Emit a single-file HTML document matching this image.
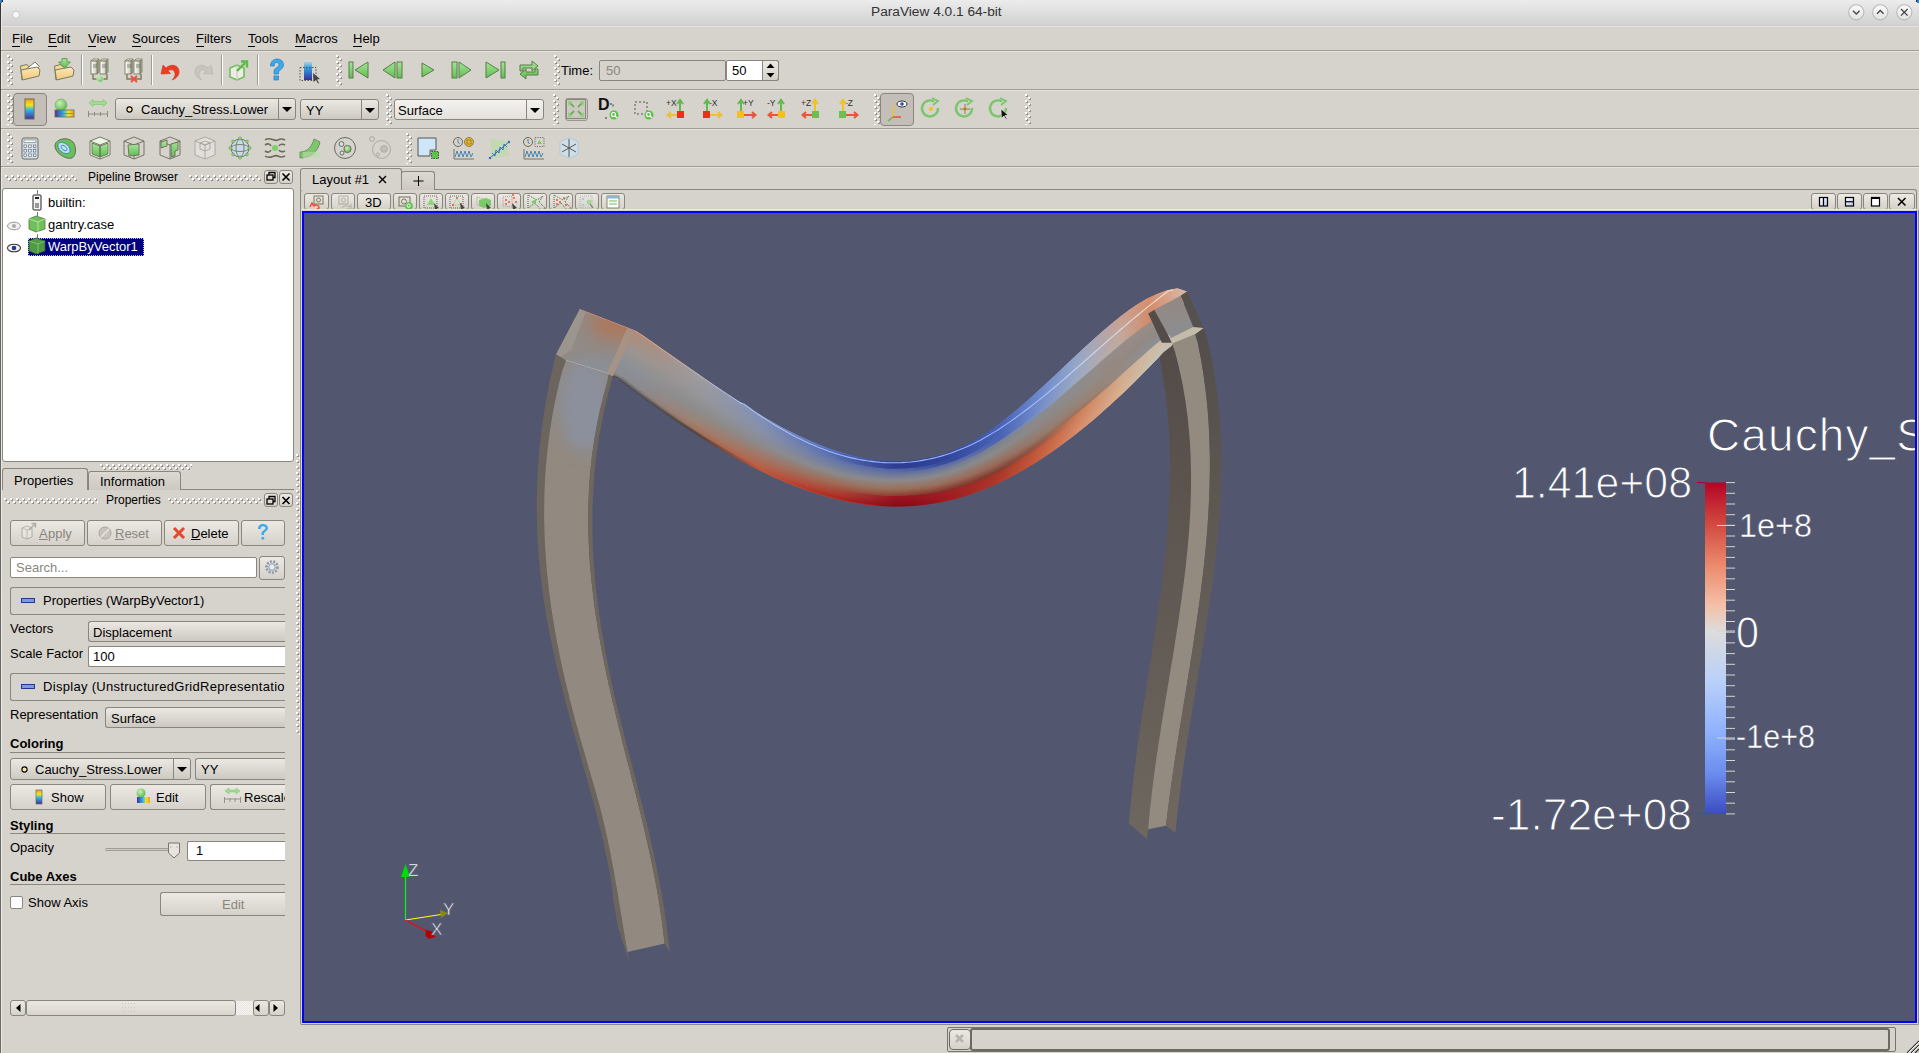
<!DOCTYPE html>
<html><head><meta charset="utf-8">
<style>
*{box-sizing:border-box;margin:0;padding:0}
html,body{width:1919px;height:1053px;overflow:hidden}
body{position:relative;background:#d6d2cc;font-family:"Liberation Sans",sans-serif;font-size:13px;color:#000}
.a{position:absolute}
svg{position:absolute;overflow:visible}
#title{left:0;top:0;width:1919px;height:26px;background:linear-gradient(#ececec,#d0d0d0);font-size:13.7px;line-height:24px;color:#333;text-indent:871px;white-space:nowrap}
#ledge{left:0;top:0;width:1px;height:1053px;background:linear-gradient(#333 0,#3a3a3a 30px,#666 200px,#6a6a6a 1053px)}
#ledge2{left:1px;top:3px;width:1px;height:1050px;background:#ebe8e2}
.hl{position:absolute;height:1px;background:#a19d96;left:1px;width:1918px}
.hl2{position:absolute;height:1px;background:#e6e3de;left:1px;width:1918px}
.menu span{position:absolute;top:31px;font-size:13px;line-height:15px}
.menu u{text-decoration:none;border-bottom:1px solid #000}
.grip{position:absolute;width:7px;background-image:repeating-linear-gradient(#fff 0 1px,#fff 1px 2px,transparent 2px 4px);background-size:3px 4px;background-repeat:repeat-y}
.gv{position:absolute;width:6px;background:repeating-linear-gradient(#938f88 0 2px,transparent 2px 6px) 1px 1px/2px 100% no-repeat,repeating-linear-gradient(#938f88 0 2px,transparent 2px 6px) 4px 4px/2px 100% no-repeat}
.gv:before,.gv:after{content:"";position:absolute;top:0;bottom:0;width:2px;background:repeating-linear-gradient(#ffffff 0 2px,transparent 2px 6px)}
.gv:before{left:0}
.gv:after{left:3px;top:3px}
.gh{position:absolute;height:6px;background:repeating-linear-gradient(90deg,#938f88 0 2px,transparent 2px 6px) 1px 1px/100% 2px no-repeat,repeating-linear-gradient(90deg,#938f88 0 2px,transparent 2px 6px) 4px 4px/100% 2px no-repeat}
.gh:before,.gh:after{content:"";position:absolute;left:0;right:0;height:2px;background:repeating-linear-gradient(90deg,#ffffff 0 2px,transparent 2px 6px)}
.gh:before{top:0}
.gh:after{top:3px;left:3px}
.sep{position:absolute;width:2px;border-left:1px solid #a19d96;border-right:1px solid #fff}
.btn{position:absolute;border:1px solid #8a867e;border-radius:3px;background:linear-gradient(#ece9e4,#d5d1ca);font-size:13px;line-height:normal}
.pressed{position:absolute;border:1px solid #8a867e;border-radius:4px;background:#c3bfb8}
.combo{position:absolute;border:1px solid #8a867e;border-radius:3px;background:linear-gradient(#ebe8e3,#cdc9c2);font-size:13px}
.combo .arr{position:absolute;top:0;bottom:0;right:0;border-left:1px solid #8a867e}
.combo .arr:after{content:"";position:absolute;left:50%;top:50%;margin-left:-5px;margin-top:-2px;border-left:5px solid transparent;border-right:5px solid transparent;border-top:5px solid #000}
.combo .t{position:absolute;top:50%;transform:translateY(-50%);white-space:nowrap}
.input{position:absolute;border:1px solid #8a867e;border-radius:2px;background:#fff;font-size:13px}
.lbl{position:absolute;font-size:13px;white-space:nowrap;line-height:15px}
.bold{font-weight:bold}
#viewport{left:302px;top:211px;width:1615px;height:812px;background:#52576f;border:2px solid #0000ff;overflow:hidden}
#vframe{left:300px;top:209px;width:1619px;height:816px;border:1px solid #8c897f;border-top-color:#ece8dc;border-radius:2px}
</style></head><body>
<div id="title" class="a">ParaView 4.0.1 64-bit</div>
<div id="ledge" class="a"></div><div id="ledge2" class="a"></div><div class="a" style="left:0;top:0;width:2px;height:3px;background:#3a80c0"></div><div class="a" style="left:2px;top:0;width:1px;height:2px;background:#222"></div><div class="a" style="left:1917px;top:0;width:2px;height:3px;background:#3a80c0"></div><div class="a" style="left:1916px;top:0;width:1px;height:2px;background:#222"></div>
<!-- title buttons -->
<svg style="left:0;top:0" width="1919" height="26">
 <circle cx="16" cy="14.7" r="3.6" fill="#f8f8f8" stroke="#c4c4c4" stroke-width="1"/>
 <defs><linearGradient id="gtb" x1="0" y1="0" x2="0" y2="1"><stop offset="0" stop-color="#fbfbfb"/><stop offset="1" stop-color="#e2e2e2"/></linearGradient></defs>
 <g fill="url(#gtb)" stroke="#b8b8b8" stroke-width="1.1"><circle cx="1856.3" cy="12.3" r="7.6"/><circle cx="1880.3" cy="12.3" r="7.6"/><circle cx="1904.3" cy="12.3" r="7.6"/></g>
 <g fill="none" stroke="#444" stroke-width="1.3"><path d="M1853 10.8 L1856.3 14 L1859.6 10.8"/><path d="M1877 13.8 L1880.3 10.5 L1883.6 13.8"/><path d="M1901 9 L1907.6 15.6 M1907.6 9 L1901 15.6"/></g>
</svg>
<div class="menu">
<span style="left:12px"><u>F</u>ile</span>
<span style="left:48px"><u>E</u>dit</span>
<span style="left:88px"><u>V</u>iew</span>
<span style="left:132px"><u>S</u>ources</span>
<span style="left:196px"><u>F</u>ilters</span>
<span style="left:248px"><u>T</u>ools</span>
<span style="left:295px"><u>M</u>acros</span>
<span style="left:353px"><u>H</u>elp</span>
</div>
<div class="a" style="left:1px;top:26px;width:1918px;height:1px;background:#e6e2d8"></div>
<div class="hl" style="top:50px"></div>
<div class="hl" style="top:89px"></div>
<div class="hl" style="top:128px"></div>
<div class="hl" style="top:166px"></div>
<div class="hl2" style="top:51px"></div><div class="hl2" style="top:90px"></div><div class="hl2" style="top:129px"></div><div class="hl2" style="top:167px"></div>
<!-- toolbar grips & separators -->
<div class="gv" style="left:7px;top:55px;height:31px"></div>
<div class="sep" style="left:81px;top:55px;height:30px"></div>
<div class="sep" style="left:151px;top:55px;height:30px"></div>
<div class="sep" style="left:221px;top:55px;height:30px"></div>
<div class="sep" style="left:257px;top:55px;height:30px"></div>
<div class="gv" style="left:336px;top:55px;height:31px"></div>
<div class="gv" style="left:554px;top:55px;height:31px"></div>
<div class="gv" style="left:7px;top:94px;height:31px"></div>
<div class="gv" style="left:386px;top:94px;height:31px"></div>
<div class="gv" style="left:553px;top:94px;height:31px"></div>
<div class="gv" style="left:874px;top:94px;height:31px"></div>
<div class="gv" style="left:1025px;top:94px;height:31px"></div>
<div class="gv" style="left:7px;top:133px;height:31px"></div>
<div class="gv" style="left:406px;top:133px;height:31px"></div>
<svg style="left:0;top:0" width="1919" height="170">
<defs>
 <linearGradient id="gfold" x1="0" y1="0" x2="0" y2="1"><stop offset="0" stop-color="#fbe7b8"/><stop offset="1" stop-color="#f2c87a"/></linearGradient>
 <linearGradient id="ggreen" x1="0" y1="0" x2="0" y2="1"><stop offset="0" stop-color="#a6e49a"/><stop offset="1" stop-color="#5fbf50"/></linearGradient>
 <linearGradient id="gsrv" x1="0" y1="0" x2="1" y2="0"><stop offset="0" stop-color="#fafafa"/><stop offset="1" stop-color="#b8b8b0"/></linearGradient>
 <linearGradient id="grain" x1="0" y1="0" x2="0" y2="1"><stop offset="0" stop-color="#f39a1e"/><stop offset="0.3" stop-color="#f2e61a"/><stop offset="0.55" stop-color="#2db7e9"/><stop offset="1" stop-color="#4b2a9a"/></linearGradient>
 <linearGradient id="grainh" x1="0" y1="0" x2="1" y2="0"><stop offset="0" stop-color="#4b2a9a"/><stop offset="0.45" stop-color="#2db7e9"/><stop offset="0.7" stop-color="#f2e61a"/><stop offset="1" stop-color="#f39a1e"/></linearGradient>
 <linearGradient id="gblue" x1="0" y1="0" x2="0" y2="1"><stop offset="0" stop-color="#e6e0d6"/><stop offset="0.4" stop-color="#2d9ee0"/><stop offset="1" stop-color="#3a2f9a"/></linearGradient>
 <radialGradient id="gsph" cx="0.4" cy="0.35" r="0.7"><stop offset="0" stop-color="#c6f2b6"/><stop offset="1" stop-color="#56b548"/></radialGradient>
</defs>
<!-- row1 -->
<g transform="translate(18,58)">
 <path d="M4 22 L2.5 8 L9 6.5 L10.5 8.5 L14 8 L15 10 Z" fill="#f4d795" stroke="#7b7b60" stroke-width="1"/>
 <path d="M6 13 L17 4 L21.5 8.5 L10 17 Z" fill="#fff" stroke="#7b7b60" stroke-width="1"/>
 <path d="M4.5 22 L3 12 L19 9 L22 12 L21 18 Z" fill="url(#gfold)" stroke="#7b7b60" stroke-width="1"/>
</g>
<g transform="translate(52,58)">
 <path d="M4 22 L2.5 8 L9 6.5 L10.5 8.5 L14 8 L15 10 Z" fill="#f4d795" stroke="#7b7b60" stroke-width="1"/>
 <path d="M4.5 22 L3 12 L19 9 L22 12 L21 18 Z" fill="url(#gfold)" stroke="#7b7b60" stroke-width="1"/>
 <path d="M10 0.5 H15 V4 H18.5 L12.5 10 L6.5 4 H10 Z" fill="url(#ggreen)" stroke="#55904a" stroke-width="0.8"/>
</g>
<g transform="translate(88,58)"><defs><linearGradient id="gtw" x1="0" y1="0" x2="1" y2="0"><stop offset="0" stop-color="#ffffff"/><stop offset="1" stop-color="#c8c8c0"/></linearGradient></defs>
<g id="srv">
 <path d="M3 3 L5 1 H11 L9 3 Z M12 3 L14 1 H20 L18 3 Z" fill="#e8e8e2" stroke="#7b7b60" stroke-width="0.8"/>
 <path d="M9 3 L11 1 V14 L9 16 Z M18 3 L20 1 V14 L18 16 Z" fill="#a8a898" stroke="#7b7b60" stroke-width="0.8"/>
 <rect x="3" y="3" width="6" height="13" fill="url(#gtw)" stroke="#7b7b60" stroke-width="0.9"/>
 <rect x="12" y="3" width="6" height="13" fill="url(#gtw)" stroke="#7b7b60" stroke-width="0.9"/>
 <path d="M5 7 H8 L9 6.5 M5 9 H8 L9 8.5 M14 7 H17 L18 6.5 M14 9 H17 L18 8.5" stroke="#6b6b5a" stroke-width="0.8" fill="none"/>
 <path d="M5 16 V21 H19 V16" fill="none" stroke="#7b7b60" stroke-width="1.4"/>
</g>
<circle cx="12" cy="21" r="3.3" fill="url(#gsph)" stroke="#e0f0d8" stroke-width="0.6"/></g>
<g transform="translate(122,58)"><use href="#srv"/><path d="M9 18 L15 24 M15 18 L9 24" stroke="#e8553f" stroke-width="2"/></g>
<g transform="translate(158,58)">
 <path d="M3 16 L5 7 L8 10 C13 5 22 7 21 15 C20 19 17 21 14 22 C17 19 18 16 16 13 C14 11 11 12 10 13 L12.5 15.5 Z" fill="#ee3b22" stroke="#c4351f" stroke-width="0.6"/>
</g>
<g transform="translate(192,58)" opacity="0.55">
 <path d="M21 16 L19 7 L16 10 C11 5 2 7 3 15 C4 19 7 21 10 22 C7 19 6 16 8 13 C10 11 13 12 14 13 L11.5 15.5 Z" fill="#bdbab3" stroke="#9a978f" stroke-width="0.6"/>
</g>
<g transform="translate(227,58)">
 <path d="M3 10 L10 7 L17 10 V19 L10 22 L3 19 Z" fill="#ecebe6" stroke="#6fbf5a" stroke-width="1.6"/>
 <path d="M10 7 V22" stroke="#c9c6be"/>
 <path d="M10 13 L18 5 M14 3.5 H20 V9.5" stroke="#5dbb47" stroke-width="2.4" fill="none"/>
</g>
<g transform="translate(264,58)">
 <path d="M6.5 8 C6.5 3 10 1 13 1 C17 1 19.5 3.5 19.5 7 C19.5 11 15 12 14.5 14 V16 H10 V13 C10 10 15 9.5 15 7 C15 5.5 14 4.5 12.8 4.5 C11 4.5 10.3 6 10.3 8 Z" fill="#3ca9ec" stroke="#1f6fa8" stroke-width="0.6"/>
 <rect x="10" y="18" width="4.5" height="4" fill="#3ca9ec" stroke="#1f6fa8" stroke-width="0.6"/>
</g>
<g transform="translate(297,58)">
 <rect x="7" y="2" width="8" height="20" fill="url(#gblue)"/>
 <rect x="3" y="9.5" width="16" height="13" fill="none" stroke="#555" stroke-width="1" stroke-dasharray="1.5 1.5"/>
 <path d="M16 15 L23 21 L20 21.5 L22 25 L21 25.5 L19 22 L16.5 24 Z" fill="#444"/>
</g>
<!-- VCR -->
<g fill="url(#ggreen)" stroke="#5b7d48" stroke-width="1">
 <g transform="translate(347,58)"><rect x="2" y="4" width="4" height="16"/><path d="M21 4 V20 L8 12 Z"/></g>
 <g transform="translate(381,58)"><path d="M14 4 V20 L2 12 Z"/><rect x="16" y="4" width="5" height="16"/></g>
 <g transform="translate(415,58)"><path d="M7 5 V19 L19 12 Z"/></g>
 <g transform="translate(449,58)"><rect x="3" y="4" width="5" height="16"/><path d="M10 4 V20 L22 12 Z"/></g>
 <g transform="translate(483,58)"><path d="M3 4 V20 L16 12 Z"/><rect x="18" y="4" width="4" height="16"/></g>
 <g transform="translate(517,58)"><path d="M3 13 V7 H15 V3 L21 8 L15 13 V10 H6 V13 Z M21 11 V17 H9 V21 L3 16 L9 11 V14 H18 V11 Z"/></g>
</g>
<!-- Time -->
</svg>
<span class="lbl" style="left:561px;top:63px">Time:</span>
<div class="input" style="left:599px;top:60px;width:127px;height:21px;background:#d6d2cc;color:#8a867e;padding-left:6px;line-height:19px">50</div>
<div class="input" style="left:726px;top:60px;width:53px;height:21px;padding-left:5px;line-height:19px;border-radius:2px">50</div>
<div class="a" style="left:762px;top:60px;width:17px;height:21px;border:1px solid #8a867e;border-radius:0 3px 3px 0;background:linear-gradient(#ece9e4,#d5d1ca)"></div>
<svg style="left:762px;top:60px" width="17" height="21"><path d="M4.5 8 L8.5 3.5 L12.5 8 Z M4.5 13 L8.5 17.5 L12.5 13 Z" fill="#000"/></svg>
<!-- row2 -->
<div class="pressed" style="left:13px;top:93px;width:34px;height:33px"></div>
<div class="pressed" style="left:880px;top:93px;width:34px;height:33px"></div>
<div class="combo" style="left:115px;top:98px;width:181px;height:22px"><svg style="left:9px;top:6px" width="9" height="9"><circle cx="4.5" cy="4.5" r="2.6" fill="#fbe3b6" stroke="#000" stroke-width="1.1"/></svg><span class="t" style="left:25px">Cauchy_Stress.Lower</span><div class="arr" style="width:17px"></div></div>
<div class="combo" style="left:300px;top:99px;width:79px;height:21px"><span class="t" style="left:5px">YY</span><div class="arr" style="width:17px"></div></div>
<div class="combo" style="left:394px;top:99px;width:150px;height:21px;background:linear-gradient(#f4f2ef,#e4e1dc)"><span class="t" style="left:3px">Surface</span><div class="arr" style="width:17px"></div></div>
<div class="btn" style="left:565px;top:98px;width:23px;height:23px;background:#cdc9c2;border-color:#9a968e"></div>
<svg style="left:0;top:0" width="1919" height="170">
<g transform="translate(18,97)">
 <rect x="7" y="2" width="9" height="20" fill="url(#grain)" stroke="#6b6b5a" stroke-width="1"/>
</g>
<g transform="translate(52,97)">
 <circle cx="9" cy="8" r="6" fill="url(#gsph)" stroke="#7ba86a" stroke-width="0.6"/>
 <rect x="3" y="13" width="19" height="7" fill="url(#grainh)" stroke="#6b6b5a" stroke-width="0.8"/>
 <path d="M4 16.5 H21" stroke="#6b6b5a" stroke-width="0.6"/>
</g>
<g transform="translate(86,97)">
 <path d="M3 6 L7 2.5 V4.5 H17 V2.5 L21 6 L17 9.5 V7.5 H7 V9.5 Z" fill="#9ee08e" stroke="#7cbf6b" stroke-width="0.6"/>
 <path d="M2 17 H22 M2.5 14 V20 M8.5 15 V19 M14.5 15 V19 M21.5 14 V20" stroke="#8e8c7e" stroke-width="1"/>
</g>
<!-- camera icons -->
<g transform="translate(564,97)">
 <path d="M5 5 L10 10 M19 5 L14 10 M5 19 L10 14 M19 19 L14 14" stroke="#6fae5a" stroke-width="1.8"/>
 <path d="M4 4 H9 L4 9 Z M20 4 H15 L20 9 Z M4 20 H9 L4 15 Z M20 20 H15 L20 15 Z" fill="#8fd47c"/>
 <rect x="2.5" y="2.5" width="19" height="19" fill="none" stroke="#8a867e" stroke-width="1"/>
</g>
<g transform="translate(597,97)">
 <text x="1" y="13" font-family="Liberation Sans" font-weight="bold" font-size="16" fill="#111">D</text>
 <path d="M13 7 H16 V10 M8 21 H10" stroke="#333" stroke-width="1" stroke-dasharray="2 1.5" fill="none"/>
 <circle cx="17" cy="18" r="4.5" fill="#5cc24c"/><circle cx="16.5" cy="17.5" r="2" fill="none" stroke="#fff" stroke-width="1.2"/><path d="M18 19 L20 21" stroke="#fff" stroke-width="1.3"/>
</g>
<g transform="translate(632,97)">
 <rect x="3" y="5" width="12" height="12" fill="none" stroke="#555" stroke-width="1" stroke-dasharray="2 2"/>
 <circle cx="17" cy="18" r="4.5" fill="#5cc24c"/><circle cx="16.5" cy="17.5" r="2" fill="none" stroke="#fff" stroke-width="1.2"/><path d="M18 19 L20 21" stroke="#fff" stroke-width="1.3"/>
</g>
<g font-family="Liberation Sans" font-size="8.5" fill="#333">
 <g transform="translate(666,97)"><text x="0" y="9">+X</text><path d="M14 20 V4 M11 7 L14 3 L17 7" stroke="#62b94e" stroke-width="2" fill="none"/><path d="M14 18 H2 M5 15 L1.5 18 L5 21" stroke="#e8c23a" stroke-width="2" fill="none"/><rect x="11" y="14" width="7" height="7" fill="#e4331c"/></g>
 <g transform="translate(699,97)"><text x="10" y="9">-X</text><path d="M8 20 V4 M5 7 L8 3 L11 7" stroke="#62b94e" stroke-width="2" fill="none"/><path d="M8 18 H22 M19 15 L22.5 18 L19 21" stroke="#e8c23a" stroke-width="2" fill="none"/><rect x="4" y="14" width="7" height="7" fill="#e4331c"/></g>
 <g transform="translate(733,97)"><text x="10" y="9">+Y</text><path d="M8 20 V4 M5 7 L8 3 L11 7" stroke="#62b94e" stroke-width="2" fill="none"/><path d="M8 18 H22 M19 15 L22.5 18 L19 21" stroke="#e8553a" stroke-width="2" fill="none"/><rect x="4" y="14" width="7" height="7" fill="#f2c21c"/></g>
 <g transform="translate(767,97)"><text x="0" y="9">-Y</text><path d="M14 20 V4 M11 7 L14 3 L17 7" stroke="#62b94e" stroke-width="2" fill="none"/><path d="M14 18 H2 M5 15 L1.5 18 L5 21" stroke="#e8553a" stroke-width="2" fill="none"/><rect x="11" y="14" width="7" height="7" fill="#f2c21c"/></g>
 <g transform="translate(801,97)"><text x="0" y="9">+Z</text><path d="M14 20 V4 M11 7 L14 3 L17 7" stroke="#f2c21c" stroke-width="2" fill="none"/><path d="M14 18 H2 M5 15 L1.5 18 L5 21" stroke="#e8553a" stroke-width="2" fill="none"/><rect x="11" y="14" width="7" height="7" fill="#6cbf4e"/></g>
 <g transform="translate(835,97)"><text x="10" y="9">-Z</text><path d="M8 20 V4 M5 7 L8 3 L11 7" stroke="#f2c21c" stroke-width="2" fill="none"/><path d="M8 18 H22 M19 15 L22.5 18 L19 21" stroke="#e8553a" stroke-width="2" fill="none"/><rect x="4" y="14" width="7" height="7" fill="#6cbf4e"/></g>
</g>
<g transform="translate(885,97)">
 <path d="M8 20 V8" stroke="#e8c23a" stroke-width="1.6"/><path d="M8 20 L3 24" stroke="#62b94e" stroke-width="1.6"/><path d="M8 20 H16" stroke="#e8553a" stroke-width="1.6"/>
 <ellipse cx="17" cy="7" rx="5" ry="3" fill="#fff" stroke="#334"/><circle cx="17" cy="7" r="1.8" fill="#3050a0"/>
</g>
<g fill="none" stroke="#79c76a" stroke-width="2.4">
 <g transform="translate(919,97)"><path d="M19 11 A8 8 0 1 1 15 4.5"/><path d="M13 1 L19 4 L14 8" stroke-width="1.8"/><circle cx="12" cy="12" r="2" fill="#f2c21c" stroke="none"/></g>
 <g transform="translate(953,97)"><path d="M19 11 A8 8 0 1 1 15 4.5"/><path d="M13 1 L19 4 L14 8" stroke-width="1.8"/><circle cx="12" cy="12" r="2" fill="#f2c21c" stroke="none"/><path d="M12 7 V17 M7 12 H17" stroke="#6b6b5a" stroke-width="0.8"/></g>
 <g transform="translate(987,97)"><path d="M19 11 A8 8 0 1 1 15 4.5"/><path d="M13 1 L19 4 L14 8" stroke-width="1.8"/><path d="M14 12 L21 18 L18 18.5 L20 22 L19 22.5 L17 19 L14.5 21 Z" fill="#111" stroke="#fff" stroke-width="0.5"/></g>
</g>
<!-- row3 -->
<g transform="translate(18,136)">
 <rect x="4" y="2" width="16" height="21" rx="2" fill="#cfe3f4" stroke="#6b6b5a" stroke-width="1"/>
 <rect x="6" y="4" width="12" height="2.5" fill="#fff" stroke="#6b6b5a" stroke-width="0.6"/>
 <g fill="#fff" stroke="#555" stroke-width="0.6"><rect x="6" y="9" width="2.5" height="2.5"/><rect x="10.7" y="9" width="2.5" height="2.5"/><rect x="15.4" y="9" width="2.5" height="2.5"/><rect x="6" y="13.5" width="2.5" height="2.5"/><rect x="10.7" y="13.5" width="2.5" height="2.5"/><rect x="15.4" y="13.5" width="2.5" height="2.5"/><rect x="6" y="18" width="2.5" height="2.5"/><rect x="10.7" y="18" width="2.5" height="2.5"/><rect x="15.4" y="18" width="2.5" height="2.5"/></g>
</g>
<g transform="translate(53,136)">
 <path d="M2 9 C3 3 14 0 20 6 C24 11 23 20 19 22 C12 24 1 16 2 9 Z" fill="#67c05a" stroke="#6b6b5a" stroke-width="1"/>
 <ellipse cx="11" cy="12" rx="7" ry="4.5" transform="rotate(40 11 12)" fill="#bfe0f0" stroke="#3a7fb0" stroke-width="0.8"/>
 <ellipse cx="11" cy="12" rx="3.5" ry="2" transform="rotate(40 11 12)" fill="none" stroke="#3a7fb0" stroke-width="0.8"/>
</g>
<g fill="url(#ggreen)" stroke="#6b6b5a" stroke-width="0.9">
 <g transform="translate(88,136)"><path d="M2 5 L12 1 L22 5 V19 L12 23 L2 19 Z" fill="#e9f4e4"/><path d="M2 5 L12 9 L22 5 M12 9 V23" fill="none"/><path d="M4 7 L12 10 V21 L4 18 Z M12 10 L20 7 V18 L12 21 Z"/></g>
 <g transform="translate(122,136)"><path d="M2 5 L12 1 L22 5 V19 L12 23 L2 19 Z" fill="none"/><path d="M2 5 L12 9 L22 5 M12 9 V23" fill="none"/><path d="M6 9 L17 8 V19 L7 20 Z"/></g>
 <g transform="translate(158,136)"><path d="M2 5 L12 1 L22 5 V19 L12 23 L2 19 Z" fill="none"/><path d="M2 5 L12 9 L22 5 M12 9 V23" fill="none"/><path d="M3 6 L9 4 V10 L3 12 Z M13 8 L20 6 V14 L17 15 V20 L13 21 Z"/></g>
 <g transform="translate(193,136)" opacity="0.45"><path d="M2 5 L12 1 L22 5 V19 L12 23 L2 19 Z" fill="#f0f0f0"/><path d="M2 5 L12 9 L22 5 M12 9 V23 M7 7 L12 5 L17 7 L12 9 Z M7 7 V13 L12 15 L17 13 V7" fill="none"/></g>
</g>
<g transform="translate(228,136)">
 <circle cx="12" cy="12" r="9" fill="#c7dbe8" stroke="#6b6b5a" stroke-width="0.9"/>
 <ellipse cx="12" cy="12" rx="9" ry="3.5" fill="none" stroke="#6b6b5a" stroke-width="0.8"/><ellipse cx="12" cy="12" rx="4" ry="9" fill="none" stroke="#6b6b5a" stroke-width="0.8"/>
 <g fill="#8fd47c" stroke="#5b8d48" stroke-width="0.5"><circle cx="12" cy="2.5" r="1.6"/><circle cx="12" cy="21.5" r="1.6"/><circle cx="2.5" cy="12" r="1.6"/><circle cx="21.5" cy="12" r="1.6"/><circle cx="5" cy="5.5" r="1.4"/><circle cx="19" cy="5.5" r="1.4"/><circle cx="5" cy="18.5" r="1.4"/><circle cx="19" cy="18.5" r="1.4"/></g>
</g>
<g transform="translate(263,136)" fill="none" stroke="#6b6b5a" stroke-width="1.6">
 <path d="M2 4 C7 0 11 6 15 4 C18 2 20 3 22 4"/><path d="M2 20 C7 24 11 18 15 20 C18 22 20 21 22 20"/>
 <path d="M2 9 C5 7 7 8 8 10 M16 10 C17 8 20 8 22 9 M2 15 C5 17 7 16 8 14 M16 14 C17 16 20 16 22 15"/>
 <circle cx="12" cy="12" r="3" fill="#7fd06c" stroke="none"/>
</g>
<g transform="translate(298,136)">
 <path d="M2 16 C10 16 14 10 16 3 L22 6 C20 16 12 22 2 22 Z" fill="#7cc96a" stroke="#6b8a5a" stroke-width="0.9"/>
 <path d="M5 16 H22 V22 H5" fill="#b9dcaa" opacity="0.6"/>
</g>
<g transform="translate(333,136)" stroke="#6b6b5a" stroke-width="1" fill="none">
 <circle cx="12" cy="12" r="10.5"/>
 <circle cx="8.5" cy="8" r="2.4" fill="#cfe3f4"/><circle cx="14.5" cy="13" r="3.6" fill="url(#gsph)"/><circle cx="9" cy="17" r="2" fill="#cfe3f4"/>
</g>
<g transform="translate(368,136)" stroke="#9c9890" stroke-width="0.9" fill="none" opacity="0.8">
 <circle cx="13.5" cy="13.5" r="9"/><circle cx="4" cy="3" r="2.4"/><circle cx="16" cy="13" r="3.3" fill="#bdbab4"/><circle cx="10" cy="18.5" r="1.6"/>
</g>
<g transform="translate(416,136)">
 <path d="M2 2 H20 V14 H14 V20 H2 Z" fill="#cfe6f8" stroke="#555" stroke-width="1"/>
 <rect x="15.5" y="15.5" width="7" height="7" fill="#5cc24c" stroke="#333" stroke-dasharray="1.5 1" stroke-width="0.8"/>
</g>
<g transform="translate(452,136)">
 <circle cx="6" cy="6" r="4.5" fill="none" stroke="#6b6b5a" stroke-width="1"/><path d="M6 3 V6 L7.5 8" stroke="#3a7fb0" stroke-width="0.9" fill="none"/>
 <circle cx="17" cy="6" r="4.5" fill="#f2b81c" stroke="#6b6b5a" stroke-width="0.8"/><rect x="15" y="4" width="4" height="4" fill="none" stroke="#6b6b5a" stroke-width="0.7"/>
 <path d="M2 13 V23 H22" stroke="#6b6b5a" stroke-width="0.9" fill="none"/><path d="M3 21 L5 15 L7 21 L9 15 L11 21 L13 15 L15 21 L17 15 L19 21 L21 17" stroke="#3a7fb0" stroke-width="0.9" fill="none"/>
</g>
<g transform="translate(487,136)">
 <path d="M3 3 L20 5 L22 20 L5 22 Z" fill="#b9dcaa" opacity="0.7"/>
 <path d="M3 22 L22 6" stroke="#2a6fb8" stroke-width="1"/><circle cx="3" cy="22" r="1.2" fill="#2a6fb8"/><circle cx="22" cy="6" r="1.2" fill="#2a6fb8"/>
 <path d="M5 17 L8 20 L9 14 L12 17 L13 11 L16 14 L17 8 L20 11" stroke="#2a6fb8" stroke-width="0.9" fill="none"/>
</g>
<g transform="translate(522,136)">
 <circle cx="6" cy="6" r="4.5" fill="none" stroke="#6b6b5a" stroke-width="1"/><path d="M6 3 V6 L7.5 8" stroke="#3a7fb0" stroke-width="0.9" fill="none"/>
 <rect x="13" y="1.5" width="9" height="9" fill="none" stroke="#555" stroke-width="0.8" stroke-dasharray="1.2 1.2"/><path d="M15 8 L17.5 4 L20 8 Z" fill="#7cc96a"/>
 <path d="M2 13 V23 H22" stroke="#6b6b5a" stroke-width="0.9" fill="none"/><path d="M3 21 L5 15 L7 21 L9 15 L11 21 L13 15 L15 21 L17 15 L19 21 L21 17" stroke="#3a7fb0" stroke-width="0.9" fill="none"/>
</g>
<g transform="translate(557,136)">
 <path d="M3 6 L12 1.5 L21 6 V18 L12 22.5 L3 18 Z" fill="#cfdfea" stroke="#b8c8d4" stroke-width="1"/>
 <path d="M12 3 V21 M5 8 L19 16 M19 8 L5 16" stroke="#555" stroke-width="1"/>
</g>
</svg>
<!-- Pipeline browser -->
<div class="gh" style="left:5px;top:175px;width:72px"></div>
<span class="lbl" style="left:88px;top:170px;font-size:12px">Pipeline Browser</span>
<div class="gh" style="left:189px;top:175px;width:72px"></div>
<div class="btn" style="left:264px;top:170px;width:14px;height:14px;border-radius:3px"></div>
<div class="btn" style="left:279px;top:170px;width:14px;height:14px;border-radius:3px"></div>
<svg style="left:0;top:0" width="300" height="520">
 <g fill="none" stroke="#000" stroke-width="1.3"><rect x="267" y="175" width="6" height="5"/><path d="M269 175 V172.5 H275 V177.5 H273"/><path d="M282.5 173.5 L289.5 180.5 M289.5 173.5 L282.5 180.5" stroke-width="1.6"/></g>
 <g fill="none" stroke="#000" stroke-width="1.3"><rect x="267" y="499" width="6" height="5"/><path d="M269 499 V496.5 H275 V501.5 H273"/><path d="M282.5 497 L289.5 504 M289.5 497 L282.5 504" stroke-width="1.6"/></g>
</svg>
<div class="a" style="left:2px;top:188px;width:292px;height:274px;background:#fff;border:1px solid #8a867e;border-radius:3px"></div>
<svg style="left:0;top:0" width="300" height="270">
 <path d="M37.5 190 V194 M37.5 212 V216 M37.5 234 V238" stroke="#777" stroke-width="1"/>
 <rect x="33" y="195" width="8" height="15" rx="1" fill="#f4f4f4" stroke="#222" stroke-width="1"/>
 <rect x="35" y="197" width="4" height="2" fill="#222"/><rect x="35" y="203" width="4" height="5" fill="#999"/>
 <g>
  <path d="M29 219 L36 216 L45 219 V229 L36 232 L29 229 Z" fill="#6fbf5a" stroke="#4e7a3e" stroke-width="0.8"/>
  <path d="M29 219 L38 222 L45 219 M38 222 V232" stroke="#c9e8bf" stroke-width="0.8" fill="none"/>
 </g>
 <ellipse cx="14" cy="226" rx="6.5" ry="3.8" fill="#f0f0f0" stroke="#999" stroke-width="1"/><circle cx="14" cy="226" r="2" fill="#aaa"/>
</svg>
<span class="lbl" style="left:48px;top:195px">builtin:</span>
<span class="lbl" style="left:48px;top:217px">gantry.case</span>
<div class="a" style="left:28px;top:238px;width:116px;height:18px;background:#000080;outline:1px dotted #c0c0ff;outline-offset:-1px"></div>
<svg style="left:0;top:0" width="300" height="270">
 <path d="M29 241 L36 238 L45 241 V251 L36 254 L29 251 Z" fill="#4f9a45" stroke="#2f5a28" stroke-width="0.8"/>
 <path d="M29 241 L38 244 L45 241 M38 244 V254" stroke="#8fc883" stroke-width="0.8" fill="none"/>
 <ellipse cx="14" cy="248" rx="6.5" ry="3.8" fill="#f4f4f4" stroke="#333" stroke-width="1.1"/><circle cx="14" cy="248" r="2.3" fill="#2a3a80"/>
</svg>
<span class="lbl" style="left:48px;top:239px;color:#fff">WarpByVector1</span>
<!-- splitter -->
<div class="gh" style="left:100px;top:464px;width:92px"></div>
<div class="gv" style="left:296px;top:454px;height:282px;width:5px"></div>
<!-- tabs -->
<div class="a" style="left:2px;top:489px;width:292px;height:1px;background:#8a867e"></div>
<div class="a" style="left:88px;top:471px;width:93px;height:19px;border:1px solid #8a867e;border-bottom:none;border-radius:3px 3px 0 0;background:linear-gradient(#dcd8d2,#cdc9c2)"></div>
<div class="a" style="left:2px;top:468px;width:86px;height:22px;border:1px solid #8a867e;border-bottom:none;border-radius:3px 3px 0 0;background:#d6d2cc"></div>
<span class="lbl" style="left:14px;top:473px">Properties</span>
<span class="lbl" style="left:100px;top:474px">Information</span>
<!-- properties dock title -->
<div class="gh" style="left:4px;top:498px;width:94px"></div>
<span class="lbl" style="left:106px;top:493px;font-size:12px">Properties</span>
<div class="gh" style="left:168px;top:498px;width:94px"></div>
<div class="btn" style="left:264px;top:493px;width:14px;height:14px"></div>
<div class="btn" style="left:279px;top:493px;width:14px;height:14px"></div>
<svg style="left:0;top:0" width="300" height="520">
 <g fill="none" stroke="#000" stroke-width="1.3"><rect x="267" y="499" width="6" height="5"/><path d="M269 499 V496.5 H275 V501.5 H273"/><path d="M282.5 497 L289.5 504 M289.5 497 L282.5 504" stroke-width="1.6"/></g>
</svg>
<div class="a" style="left:0;top:0;width:285px;height:1053px;overflow:hidden">
<!-- action buttons -->
<div class="btn" style="left:10px;top:520px;width:75px;height:26px;color:#8a867e"><span class="lbl" style="left:28px;top:5px;text-decoration:underline;text-decoration-thickness:1px">A</span><span class="lbl" style="left:37px;top:5px">pply</span></div>
<div class="btn" style="left:87px;top:520px;width:75px;height:26px;color:#8a867e"><span class="lbl" style="left:27px;top:5px"><u>R</u>eset</span></div>
<div class="btn" style="left:164px;top:520px;width:75px;height:26px"><span class="lbl" style="left:26px;top:5px"><u>D</u>elete</span></div>
<div class="btn" style="left:241px;top:520px;width:44px;height:26px"></div>

<div class="input" style="left:10px;top:557px;width:247px;height:21px;color:#8a867e;padding-left:5px;line-height:19px">Search...</div>
<div class="btn" style="left:259px;top:556px;width:26px;height:24px"></div>
<svg style="left:0;top:0" width="300" height="600">
 <g opacity="0.5"><path d="M22 528 L27 526 L32 528 V537 L27 539 L22 537 Z" fill="#f0eee8" stroke="#77746c" stroke-width="0.9"/><path d="M22 528 L27 530 L32 528 M27 530 V539" fill="none" stroke="#77746c" stroke-width="0.7"/><path d="M29 530 L35 524 M31.5 523.5 H35.5 V527.5" stroke="#77746c" stroke-width="1.5" fill="none"/></g>
 <circle cx="105" cy="533" r="6" fill="#c8c4bd" stroke="#aaa69f"/><path d="M101 537 L109 529" stroke="#e8e5e0" stroke-width="1.4"/>
 <path d="M174 528 L184 538 M184 528 L174 538" stroke="#e4462e" stroke-width="3"/>
 <path d="M258 529 C258 526 260 524 263 524 C266 524 268 526 268 528 C268 531 264 531.5 264 534 V535 H261.5 V533.5 C261.5 530.5 265.5 530 265.5 528 C265.5 527 264.5 526.3 263 526.3 C261.5 526.3 260.7 527.3 260.7 529 Z M261.5 537 H264.2 V539.5 H261.5 Z" fill="#3ca9ec"/>
 <g transform="translate(272,567)"><circle r="5.5" fill="none" stroke="#8a9aa8" stroke-width="2.6" stroke-dasharray="2 1.3"/><circle r="3.2" fill="#e8eef4" stroke="#8a9aa8" stroke-width="1"/></g>
</svg>
<!-- Properties (WarpByVector1) section -->
<div class="btn" style="left:10px;top:587px;width:285px;height:28px;border-right:none;border-radius:3px 0 0 3px;background:#d6d2cc"></div>
<div class="a" style="left:21px;top:598px;width:14px;height:5px;background:#7f9ad8;border:1px solid #203a90"></div>
<span class="lbl" style="left:43px;top:593px">Properties (WarpByVector1)</span>
<span class="lbl" style="left:10px;top:621px">Vectors</span>
<div class="combo" style="left:88px;top:621px;width:207px;height:21px;border-right:none;border-radius:3px 0 0 3px"><span class="t" style="left:4px">Displacement</span></div>
<span class="lbl" style="left:10px;top:646px">Scale Factor</span>
<div class="input" style="left:88px;top:646px;width:207px;height:21px;border-right:none;padding-left:4px;line-height:19px">100</div>
<!-- Display section -->
<div class="btn" style="left:10px;top:673px;width:285px;height:28px;border-right:none;border-radius:3px 0 0 3px;background:#d6d2cc"></div>
<div class="a" style="left:21px;top:684px;width:14px;height:5px;background:#7f9ad8;border:1px solid #203a90"></div>
<div class="a" style="left:43px;top:679px;width:242px;height:16px;overflow:hidden"><span class="lbl" style="left:0;top:0;letter-spacing:0.3px">Display (UnstructuredGridRepresentation)</span></div>
<span class="lbl" style="left:10px;top:707px">Representation</span>
<div class="combo" style="left:105px;top:707px;width:190px;height:21px;border-right:none;border-radius:3px 0 0 3px"><span class="t" style="left:5px">Surface</span></div>
<!-- Coloring -->
<span class="lbl bold" style="left:10px;top:736px">Coloring</span>
<div class="a" style="left:10px;top:752px;width:275px;height:1px;background:#8a867e"></div>
<div class="combo" style="left:10px;top:758px;width:181px;height:22px"><svg style="left:9px;top:6px" width="9" height="9"><circle cx="4.5" cy="4.5" r="2.6" fill="#fbe3b6" stroke="#000" stroke-width="1.1"/></svg><span class="t" style="left:24px">Cauchy_Stress.Lower</span><div class="arr" style="width:17px"></div></div>
<div class="combo" style="left:195px;top:758px;width:100px;height:22px;border-right:none;border-radius:3px 0 0 3px"><span class="t" style="left:5px">YY</span></div>
<div class="btn" style="left:10px;top:784px;width:96px;height:26px"><span class="lbl" style="left:40px;top:5px">Show</span></div>
<div class="btn" style="left:110px;top:784px;width:96px;height:26px"><span class="lbl" style="left:45px;top:5px">Edit</span></div>
<div class="btn" style="left:210px;top:784px;width:85px;height:26px;border-right:none;border-radius:3px 0 0 3px"><div class="a" style="left:0;top:0;width:75px;height:24px;overflow:hidden"><span class="lbl" style="left:33px;top:5px">Rescale</span></div></div>
<svg style="left:0;top:0" width="300" height="1053">
 <rect x="36" y="790" width="6" height="14" fill="url(#grain2)" stroke="#6b6b5a" stroke-width="0.7"/>
 <defs><linearGradient id="grain2" x1="0" y1="0" x2="0" y2="1"><stop offset="0" stop-color="#f39a1e"/><stop offset="0.3" stop-color="#f2e61a"/><stop offset="0.55" stop-color="#2db7e9"/><stop offset="1" stop-color="#4b2a9a"/></linearGradient>
 <linearGradient id="grainh2" x1="0" y1="0" x2="1" y2="0"><stop offset="0" stop-color="#4b2a9a"/><stop offset="0.45" stop-color="#2db7e9"/><stop offset="0.7" stop-color="#f2e61a"/><stop offset="1" stop-color="#f39a1e"/></linearGradient>
 <radialGradient id="gsph2" cx="0.4" cy="0.35" r="0.7"><stop offset="0" stop-color="#c6f2b6"/><stop offset="1" stop-color="#56b548"/></radialGradient></defs>
 <circle cx="141" cy="793" r="4.5" fill="url(#gsph2)"/>
 <rect x="137" y="797" width="13" height="6" fill="url(#grainh2)"/>
 <path d="M225 791 L229 788 V790 H236 V788 L240 791 L236 794 V792 H229 V794 Z" fill="#9ee08e" stroke="#7cbf6b" stroke-width="0.5"/>
 <path d="M224 799 H241 M224.5 797 V803 M230 798 V802 M235 798 V802 M240.5 797 V803" stroke="#8e8c7e" stroke-width="0.9"/>
</svg>
<!-- Styling -->
<span class="lbl bold" style="left:10px;top:818px">Styling</span>
<div class="a" style="left:10px;top:833px;width:275px;height:1px;background:#8a867e"></div>
<span class="lbl" style="left:10px;top:840px">Opacity</span>
<div class="a" style="left:105px;top:848px;width:72px;height:3px;border:1px solid #a19d96;border-radius:2px;background:#cfcbc4"></div>
<svg style="left:0;top:0" width="300" height="1053"><path d="M168.5 843 H179.5 V853 L174 858 L168.5 853 Z" fill="#e7e4df" stroke="#77746c" stroke-width="1"/><path d="M171 846 V848 M177 846 V848" stroke="#aaa" stroke-width="0.8"/></svg>
<div class="input" style="left:187px;top:841px;width:108px;height:20px;border-right:none;padding-left:8px;line-height:18px">1</div>
<!-- Cube axes -->
<span class="lbl bold" style="left:10px;top:869px">Cube Axes</span>
<div class="a" style="left:10px;top:884px;width:275px;height:1px;background:#8a867e"></div>
<div class="a" style="left:10px;top:896px;width:13px;height:13px;background:#fff;border:1px solid #8a867e;border-radius:2px"></div>
<span class="lbl" style="left:28px;top:895px">Show Axis</span>
<div class="btn" style="left:160px;top:892px;width:135px;height:24px;border-right:none;border-radius:3px 0 0 3px;color:#8a867e"><span class="lbl" style="left:61px;top:4px">Edit</span></div>
</div>
<!-- scrollbar -->
<div class="a" style="left:10px;top:1000px;width:275px;height:16px;background:#d6d2cc"></div>
<div class="btn" style="left:10px;top:1000px;width:16px;height:16px"></div>
<div class="btn" style="left:26px;top:1000px;width:210px;height:16px;background:linear-gradient(#ebe8e3,#d9d5ce)"></div>
<div class="a" style="left:236px;top:1001px;width:17px;height:14px;background:repeating-conic-gradient(#e6e3de 0 25%,#f8f7f5 0 50%) 0 0/2px 2px"></div>
<div class="btn" style="left:253px;top:1000px;width:16px;height:16px"></div>
<div class="btn" style="left:269px;top:1000px;width:16px;height:16px"></div>
<svg style="left:0;top:0" width="300" height="1053"><path d="M20.5 1004 V1012 L16 1008 Z M259.5 1004 V1012 L255 1008 Z M273.5 1004 V1012 L278 1008 Z" fill="#000"/>
<g fill="#c9c5be"><rect x="122" y="1003" width="1" height="1"/><rect x="125" y="1003" width="1" height="1"/><rect x="128" y="1003" width="1" height="1"/><rect x="131" y="1003" width="1" height="1"/><rect x="134" y="1003" width="1" height="1"/><rect x="122" y="1007" width="1" height="1"/><rect x="125" y="1007" width="1" height="1"/><rect x="128" y="1007" width="1" height="1"/><rect x="131" y="1007" width="1" height="1"/><rect x="134" y="1007" width="1" height="1"/><rect x="122" y="1011" width="1" height="1"/><rect x="125" y="1011" width="1" height="1"/><rect x="128" y="1011" width="1" height="1"/><rect x="131" y="1011" width="1" height="1"/><rect x="134" y="1011" width="1" height="1"/></g></svg>
<!-- layout tabs -->
<div class="a" style="left:300px;top:189px;width:1617px;height:22px;border:1px solid #8a867e;border-bottom:none;border-radius:3px 3px 0 0"></div>
<div class="a" style="left:401px;top:171px;width:34px;height:19px;border:1px solid #8a867e;border-bottom:none;border-radius:3px 3px 0 0;background:linear-gradient(#dcd8d2,#cdc9c2)"></div>
<div class="a" style="left:300px;top:168px;width:102px;height:22px;border:1px solid #8a867e;border-bottom:none;border-radius:3px 3px 0 0;background:#d6d2cc"></div>
<span class="lbl" style="left:312px;top:172px">Layout #1</span>
<svg style="left:0;top:0" width="700" height="215"><path d="M379 176 L386 183 M386 176 L379 183" stroke="#000" stroke-width="1.4"/><path d="M418.5 176 V186 M413.5 181 H423.5" stroke="#000" stroke-width="1"/></svg>
<!-- view toolbar -->
<div class="btn" style="left:304px;top:193px;width:25px;height:17px"></div>
<div class="btn" style="left:331px;top:193px;width:24px;height:17px"></div>
<div class="btn" style="left:357px;top:193px;width:34px;height:17px"><span class="lbl" style="left:7px;top:1px">3D</span></div>
<div class="btn" style="left:393px;top:193px;width:24px;height:17px"></div>
<div class="btn" style="left:419px;top:193px;width:24px;height:17px"></div>
<div class="btn" style="left:445px;top:193px;width:24px;height:17px"></div>
<div class="btn" style="left:471px;top:193px;width:24px;height:17px"></div>
<div class="btn" style="left:497px;top:193px;width:24px;height:17px"></div>
<div class="btn" style="left:523px;top:193px;width:24px;height:17px"></div>
<div class="btn" style="left:549px;top:193px;width:24px;height:17px"></div>
<div class="btn" style="left:575px;top:193px;width:24px;height:17px"></div>
<div class="btn" style="left:601px;top:193px;width:24px;height:17px"></div>
<div class="btn" style="left:1811px;top:193px;width:25px;height:17px"></div>
<div class="btn" style="left:1837px;top:193px;width:25px;height:17px"></div>
<div class="btn" style="left:1863px;top:193px;width:25px;height:17px"></div>
<div class="btn" style="left:1889px;top:193px;width:26px;height:17px"></div>
<svg style="left:0;top:0" width="1919" height="215">
 <g transform="translate(308,194)"><rect x="6" y="2" width="9" height="8" fill="none" stroke="#7b7b60" stroke-width="1"/><circle cx="10.5" cy="6" r="2" fill="none" stroke="#7b7b60"/><path d="M2 13 L4 9 L6 12 C8 10 11 11 11 14 L9 15" stroke="#e8553a" stroke-width="1.6" fill="none"/></g>
 <g transform="translate(334,194)" opacity="0.5"><rect x="5" y="2" width="9" height="8" fill="none" stroke="#7b7b60" stroke-width="1"/><circle cx="9.5" cy="6" r="2" fill="none" stroke="#7b7b60"/><path d="M8 14 C10 11 14 11 15 13 L17 11 L17 15 L13 15" stroke="#9a978f" stroke-width="1.3" fill="none"/></g>
 <g transform="translate(396,194)"><rect x="3" y="3" width="11" height="9" fill="none" stroke="#7b7b60" stroke-width="1.1"/><circle cx="8" cy="7.5" r="2.5" fill="none" stroke="#7b7b60"/><circle cx="13" cy="12" r="3.8" fill="#5cc24c"/><circle cx="12.7" cy="11.7" r="1.6" fill="none" stroke="#fff" stroke-width="1"/></g>
 <g transform="translate(422,194)"><rect x="2" y="2" width="13" height="12" fill="none" stroke="#555" stroke-width="0.9" stroke-dasharray="1 1"/><path d="M5 11 L9 4 L13 11 Z" fill="#8fd47c"/><path d="M12 9 L17 14 L15 14.5 L16 16 L15 16.3 L14 15 L13 16 Z" fill="#444"/></g>
 <g transform="translate(448,194)"><rect x="2" y="2" width="13" height="12" fill="none" stroke="#555" stroke-width="0.9" stroke-dasharray="1 1"/><path d="M5 11 L9 4 L13 11 Z" fill="none" stroke="#9fd48c" stroke-width="0.7"/><circle cx="9" cy="4" r="1" fill="#e8553a"/><circle cx="5" cy="11" r="1" fill="#e8553a"/><circle cx="13" cy="10" r="1" fill="#e8553a"/><path d="M12 9 L17 14 L15 14.5 L16 16 L15 16.3 L14 15 L13 16 Z" fill="#444"/></g>
 <g transform="translate(474,194)"><path d="M3 3 L10 5 V13 L3 11 Z" fill="none" stroke="#888" stroke-width="0.7" stroke-dasharray="1 1"/><path d="M5 6 L12 4 L17 6 V12 L10 14 L5 12 Z" fill="#7cc96a"/><path d="M12 9 L17 14 L15 14.5 L16 16 L15 16.3 L14 15 L13 16 Z" fill="#444"/></g>
 <g transform="translate(500,194)"><path d="M3 3 L12 2 V13 L3 12 Z" fill="none" stroke="#888" stroke-width="0.7" stroke-dasharray="1 1"/><g fill="#e8553a"><circle cx="6" cy="6" r="1"/><circle cx="9" cy="8" r="1"/><circle cx="6" cy="10" r="1"/><circle cx="14" cy="4" r="1"/><circle cx="16" cy="8" r="1"/><circle cx="13" cy="1" r="1"/></g><path d="M12 9 L17 14 L15 14.5 L16 16 L15 16.3 L14 15 L13 16 Z" fill="#444"/></g>
 <g transform="translate(526,194)"><path d="M2 1 V14 L9 9 L15 16 L19 14 L13 8 L17 2 L11 6 Z" fill="none" stroke="#2f5a28" stroke-width="0.9" stroke-dasharray="1 1"/><path d="M5 8 L10 5 L10 11 Z" fill="#7cc96a"/></g>
 <g transform="translate(552,194)"><path d="M2 1 V14 L9 9 L15 16 L19 14 L13 8 L17 2 L11 6 Z" fill="none" stroke="#2f5a28" stroke-width="0.9" stroke-dasharray="1 1"/><g fill="#e8553a"><circle cx="5" cy="6" r="1"/><circle cx="8" cy="8" r="1"/><circle cx="5" cy="10" r="1"/><circle cx="12" cy="4" r="1"/><circle cx="14" cy="11" r="1"/></g></g>
 <g transform="translate(578,194)" opacity="0.7"><rect x="2" y="2" width="12" height="12" fill="none" stroke="#888" stroke-width="0.8" stroke-dasharray="1 1"/><circle cx="5" cy="5" r="1.3" fill="#9cc0e0"/><circle cx="5" cy="11" r="1.3" fill="#9cc0e0"/><circle cx="11" cy="8" r="2.5" fill="#8fd47c"/><path d="M12 10 L15 14" stroke="#555" stroke-width="1.2"/></g>
 <g transform="translate(604,194)"><rect x="3" y="2" width="12" height="12" fill="#fff" stroke="#7b7b60" stroke-width="0.9"/><rect x="3" y="2" width="12" height="2.5" fill="#8ab4d8"/><path d="M5 7 H13 M5 10 H13" stroke="#9fd48c" stroke-width="1.6"/></g>
 <defs><linearGradient id="gsplit" x1="0" y1="0" x2="1" y2="1"><stop offset="0" stop-color="#ffffff"/><stop offset="1" stop-color="#b8c8f0"/></linearGradient></defs>
 <g stroke="#000" stroke-width="1.2" fill="url(#gsplit)">
  <rect x="1819.5" y="197.5" width="8" height="8.5"/><path d="M1823.5 197.5 V206" fill="none"/>
  <rect x="1845.5" y="197.5" width="8" height="8.5"/><path d="M1845.5 201.75 H1853.5" fill="none"/>
  <rect x="1871.5" y="197.5" width="8" height="8.5" fill="#fff"/><path d="M1871.5 198.2 H1879.5" stroke-width="1.6" fill="none"/>
  <path d="M1898 198 L1905.5 205.5 M1905.5 198 L1898 205.5" fill="none" stroke-width="1.5"/>
 </g>
</svg>
<div id="vframe" class="a"></div>
<div id="viewport" class="a"></div>
<div class="a" style="left:304px;top:213px;width:1611px;height:808px;overflow:hidden">
<svg style="left:-304px;top:-213px" width="1919" height="1053">
<defs>
 <filter id="bl4" x="-20%" y="-20%" width="140%" height="140%"><feGaussianBlur stdDeviation="4"/></filter>
 <filter id="bl2" x="-20%" y="-20%" width="140%" height="140%"><feGaussianBlur stdDeviation="2"/></filter>
 <filter id="bl8" x="-30%" y="-30%" width="160%" height="160%"><feGaussianBlur stdDeviation="8"/></filter>
 <linearGradient id="cbar" x1="0" y1="0" x2="0" y2="1">
  <stop offset="0" stop-color="#b40426"/><stop offset="0.12" stop-color="#d0473d"/><stop offset="0.25" stop-color="#ec8a6d"/><stop offset="0.37" stop-color="#f4c0a6"/><stop offset="0.448" stop-color="#dddcdc"/><stop offset="0.6" stop-color="#b9d0f9"/><stop offset="0.75" stop-color="#90b2fe"/><stop offset="0.88" stop-color="#6a8ced"/><stop offset="1" stop-color="#3b4cc0"/>
 </linearGradient>
 <linearGradient id="topg" gradientUnits="userSpaceOnUse" x1="580" y1="0" x2="1190" y2="0">
  <stop offset="0" stop-color="#b88070"/><stop offset="0.1" stop-color="#a88878"/><stop offset="0.25" stop-color="#8898b8"/><stop offset="0.42" stop-color="#4c64c0"/><stop offset="0.52" stop-color="#2e3f9a"/><stop offset="0.64" stop-color="#3a55b8"/><stop offset="0.78" stop-color="#8aa0cc"/><stop offset="0.88" stop-color="#c8a090"/><stop offset="0.95" stop-color="#e09070"/><stop offset="1" stop-color="#c8b8a8"/>
 </linearGradient>
 <linearGradient id="botg" gradientUnits="userSpaceOnUse" x1="610" y1="0" x2="1175" y2="0">
  <stop offset="0" stop-color="#8a8a8c"/><stop offset="0.15" stop-color="#a86850"/><stop offset="0.3" stop-color="#b04a38"/><stop offset="0.5" stop-color="#9a1020"/><stop offset="0.65" stop-color="#b02828"/><stop offset="0.8" stop-color="#d07050"/><stop offset="0.95" stop-color="#d8b098"/><stop offset="1" stop-color="#c8c0b0"/>
 </linearGradient>
 <clipPath id="beamclip"><path d="M579.4 309.4 L635 330.9 L650 339.5 L759 414 L785.6 430.7 L831 451 L876.8 461 L907 463.3 L937.6 457.3 L968 442 L1000 420.8 L1023.7 403.3 L1067.4 368.3 L1111 324.6 L1120 314.5 L1133.6 303 L1149 295.7 L1163.9 288.4 L1176.4 287.8 L1186.9 291.5 L1180.6 295.7 L1154.5 309.8 L1148.2 313.4 L1161.8 342.7 L1172.2 343.7 L1168 345.4 L1154.8 361.8 L1111 399 L1045.5 460 L1000 483 L968 493.7 L937.6 502.9 L907 507.4 L876.8 505.9 L831 497.5 L785.6 478.5 L759 468.8 L650 400 L612.7 376.5 L609 374 L565.8 360.5 L555.9 354.3 Z"/></clipPath>

 <linearGradient id="rlegL" gradientUnits="userSpaceOnUse" x1="0" y1="340" x2="0" y2="840"><stop offset="0" stop-color="#524b47"/><stop offset="0.35" stop-color="#5c5550"/><stop offset="1" stop-color="#6e675f"/></linearGradient>
 <linearGradient id="rlegR" gradientUnits="userSpaceOnUse" x1="0" y1="330" x2="0" y2="840"><stop offset="0" stop-color="#544e4a"/><stop offset="0.35" stop-color="#5e5853"/><stop offset="1" stop-color="#706860"/></linearGradient>
 <linearGradient id="capg" x1="0" y1="0" x2="0" y2="1"><stop offset="0" stop-color="#958880"/><stop offset="1" stop-color="#8a8e94"/></linearGradient>
</defs>
<!-- colorbar -->
<rect x="1705" y="482.5" width="21" height="331.5" fill="url(#cbar)"/>
<path d="M1726 482.6 H1735 M1726 493.3 H1735 M1726 504.0 H1735 M1726 514.7 H1735 M1726 525.3 H1735 M1726 536.0 H1735 M1726 546.7 H1735 M1726 557.4 H1735 M1726 568.1 H1735 M1726 578.8 H1735 M1726 589.5 H1735 M1726 600.2 H1735 M1726 610.8 H1735 M1726 621.5 H1735 M1726 632.2 H1735 M1726 642.9 H1735 M1726 653.6 H1735 M1726 664.3 H1735 M1726 675.0 H1735 M1726 685.7 H1735 M1726 696.3 H1735 M1726 707.0 H1735 M1726 717.7 H1735 M1726 728.4 H1735 M1726 739.1 H1735 M1726 749.8 H1735 M1726 760.5 H1735 M1726 771.2 H1735 M1726 781.8 H1735 M1726 792.5 H1735 M1726 803.2 H1735 M1726 813.9 H1735" stroke="#d4d4d4" stroke-width="1"/>
<path d="M1717 525.5 H1735 M1717 631 H1735 M1717 738 H1735" stroke="#d4d4d4" stroke-width="1"/>
<path d="M1697 482.5 H1705" stroke="#b40426" stroke-width="1.2"/>
<path d="M1697 813.5 H1705" stroke="#3b4cc0" stroke-width="1.2"/>
<g font-family="Liberation Sans" fill="#fff" stroke="#52576f" stroke-width="1.1">
 <text x="1707" y="451" font-size="46" letter-spacing="1.1">Cauchy_Stress.Lower YY</text>
 <text x="1512" y="498" font-size="45" textLength="180" lengthAdjust="spacingAndGlyphs">1.41e+08</text>
 <text x="1491" y="830" font-size="45" textLength="201" lengthAdjust="spacingAndGlyphs">-1.72e+08</text>
 <text x="1739" y="537" font-size="33" stroke-width="0.5" textLength="73" lengthAdjust="spacingAndGlyphs">1e+8</text>
 <text x="1736" y="648" font-size="45" stroke-width="1" textLength="23" lengthAdjust="spacingAndGlyphs">0</text>
 <text x="1736" y="748" font-size="33" stroke-width="0.5" textLength="79" lengthAdjust="spacingAndGlyphs">-1e+8</text>
</g>
<!-- axes -->
<g>
 <path d="M405.5 920 V876" stroke="#00ff00" stroke-width="1.2"/>
 <path d="M401 877 L405.5 864 L410 877 Z" fill="#00dd00"/>
 <path d="M405.5 920 L441 914.5" stroke="#ffff00" stroke-width="1.2"/>
 <path d="M440 910 L448 913 L441 918 Z" fill="#8a8a10"/>
 <path d="M405.5 920 L428 932" stroke="#ff0000" stroke-width="1.2"/>
 <path d="M425 929 L436 937 L428 939 Z" fill="#c00000"/><circle cx="429" cy="934" r="3.5" fill="#b00000"/>
 <g font-family="Liberation Sans" font-size="17" fill="#fff" stroke="#52576f" stroke-width="0.5"><text x="408" y="876">Z</text><text x="443" y="915">Y</text><text x="431" y="935">X</text></g>
</g>
<!-- model: left leg -->
<path d="M555.9 354.3 L553.8 363.5 551.6 372.8 549.6 382.0 547.8 391.3 546.1 400.5 544.5 409.8 543.1 419.0 541.8 428.3 540.7 437.5 539.7 446.8 538.9 456.0 538.2 465.3 537.6 474.5 537.2 483.8 536.9 493.0 536.8 502.3 536.8 511.5 537.0 520.8 537.2 530.0 537.7 539.3 538.2 548.5 538.9 557.8 539.7 567.0 540.7 576.3 541.8 585.5 543.0 594.8 544.4 604.0 545.9 613.3 547.5 622.5 549.2 631.8 551.1 641.0 553.0 650.3 555.1 659.5 557.2 668.8 559.5 678.0 561.8 687.3 564.1 696.5 566.6 705.8 569.1 715.0 571.6 724.3 574.1 733.5 576.7 742.8 579.3 752.0 581.9 761.3 584.6 770.5 587.2 779.8 589.7 789.0 592.3 798.3 594.8 807.5 597.2 816.8 599.5 826.0 601.8 835.3 603.9 844.5 605.9 853.8 607.8 863.0 609.6 872.3 611.1 881.5 612.6 890.8 613.2 900.0 618.2 927.9 629.2 962.4 629.2 962.4 627.6 952.0 625.6 942.0 624.0 931.9 622.3 921.9 620.7 911.9 619.0 901.9 617.4 891.8 615.6 881.8 613.9 871.8 612.0 861.8 610.1 851.7 608.0 841.7 605.8 831.7 603.5 821.7 601.0 811.6 598.4 801.6 595.6 791.6 592.7 781.6 589.8 771.5 586.9 761.5 584.0 751.5 581.1 741.5 578.3 731.4 575.5 721.4 572.9 711.4 570.3 701.4 567.8 691.3 565.3 681.3 563.0 671.3 560.8 661.3 558.8 651.2 556.8 641.2 555.0 631.2 553.3 621.2 551.7 611.1 550.3 601.1 549.0 591.1 547.9 581.1 546.8 571.0 546.0 561.0 545.3 551.0 544.7 541.0 544.4 530.9 544.1 520.9 544.1 510.9 544.2 500.9 544.4 490.8 544.9 480.8 545.5 470.8 546.3 460.8 547.3 450.7 548.5 440.7 549.9 430.7 551.5 420.7 553.2 410.6 555.2 400.6 557.4 390.6 559.8 380.6 562.4 370.5 565.8 360.5 Z" fill="#6c655e"/>
<clipPath id="llfront"><path d="M565.8 360.5 L562.4 370.5 559.8 380.6 557.4 390.6 555.2 400.6 553.2 410.6 551.5 420.7 549.9 430.7 548.5 440.7 547.3 450.7 546.3 460.8 545.5 470.8 544.9 480.8 544.4 490.8 544.2 500.9 544.1 510.9 544.1 520.9 544.4 530.9 544.7 541.0 545.3 551.0 546.0 561.0 546.8 571.0 547.9 581.1 549.0 591.1 550.3 601.1 551.7 611.1 553.3 621.2 555.0 631.2 556.8 641.2 558.8 651.2 560.8 661.3 563.0 671.3 565.3 681.3 567.8 691.3 570.3 701.4 572.9 711.4 575.5 721.4 578.3 731.4 581.1 741.5 584.0 751.5 586.9 761.5 589.8 771.5 592.7 781.6 595.6 791.6 598.4 801.6 601.0 811.6 603.5 821.7 605.8 831.7 608.0 841.7 610.1 851.7 612.0 861.8 613.9 871.8 615.6 881.8 617.4 891.8 619.0 901.9 620.7 911.9 622.3 921.9 624.0 931.9 625.6 942.0 627.6 952.0 664.7 943.6 663.4 933.9 662.3 924.3 660.9 914.6 659.5 905.0 657.9 895.3 656.2 885.7 654.4 876.0 652.4 866.4 650.4 856.7 648.3 847.1 646.1 837.4 643.9 827.7 641.6 818.1 639.3 808.4 636.9 798.8 634.4 789.1 632.0 779.5 629.6 769.8 627.1 760.2 624.6 750.5 622.2 740.9 619.8 731.2 617.4 721.6 615.1 711.9 612.8 702.2 610.6 692.6 608.4 682.9 606.3 673.3 604.3 663.6 602.4 654.0 600.6 644.3 598.9 634.7 597.3 625.0 595.8 615.4 594.4 605.7 593.2 596.0 592.1 586.4 591.1 576.7 590.2 567.1 589.5 557.4 589.0 547.8 588.6 538.1 588.3 528.5 588.3 518.8 588.3 509.2 588.6 499.5 589.0 489.9 589.6 480.2 590.4 470.5 591.4 460.9 592.6 451.2 594.0 441.6 595.6 431.9 597.4 422.3 599.4 412.6 601.6 403.0 604.1 393.3 606.8 383.7 609.0 374.0 Z"/></clipPath>
<path d="M565.8 360.5 L562.4 370.5 559.8 380.6 557.4 390.6 555.2 400.6 553.2 410.6 551.5 420.7 549.9 430.7 548.5 440.7 547.3 450.7 546.3 460.8 545.5 470.8 544.9 480.8 544.4 490.8 544.2 500.9 544.1 510.9 544.1 520.9 544.4 530.9 544.7 541.0 545.3 551.0 546.0 561.0 546.8 571.0 547.9 581.1 549.0 591.1 550.3 601.1 551.7 611.1 553.3 621.2 555.0 631.2 556.8 641.2 558.8 651.2 560.8 661.3 563.0 671.3 565.3 681.3 567.8 691.3 570.3 701.4 572.9 711.4 575.5 721.4 578.3 731.4 581.1 741.5 584.0 751.5 586.9 761.5 589.8 771.5 592.7 781.6 595.6 791.6 598.4 801.6 601.0 811.6 603.5 821.7 605.8 831.7 608.0 841.7 610.1 851.7 612.0 861.8 613.9 871.8 615.6 881.8 617.4 891.8 619.0 901.9 620.7 911.9 622.3 921.9 624.0 931.9 625.6 942.0 627.6 952.0 664.7 943.6 663.4 933.9 662.3 924.3 660.9 914.6 659.5 905.0 657.9 895.3 656.2 885.7 654.4 876.0 652.4 866.4 650.4 856.7 648.3 847.1 646.1 837.4 643.9 827.7 641.6 818.1 639.3 808.4 636.9 798.8 634.4 789.1 632.0 779.5 629.6 769.8 627.1 760.2 624.6 750.5 622.2 740.9 619.8 731.2 617.4 721.6 615.1 711.9 612.8 702.2 610.6 692.6 608.4 682.9 606.3 673.3 604.3 663.6 602.4 654.0 600.6 644.3 598.9 634.7 597.3 625.0 595.8 615.4 594.4 605.7 593.2 596.0 592.1 586.4 591.1 576.7 590.2 567.1 589.5 557.4 589.0 547.8 588.6 538.1 588.3 528.5 588.3 518.8 588.3 509.2 588.6 499.5 589.0 489.9 589.6 480.2 590.4 470.5 591.4 460.9 592.6 451.2 594.0 441.6 595.6 431.9 597.4 422.3 599.4 412.6 601.6 403.0 604.1 393.3 606.8 383.7 609.0 374.0 Z" fill="#928980"/>
<g clip-path="url(#llfront)"><ellipse cx="585" cy="405" rx="26" ry="48" fill="#8a92a2" opacity="0.85" filter="url(#bl8)"/></g>
<path d="M609.0 374.0 L606.8 383.7 604.1 393.3 601.6 403.0 599.4 412.6 597.4 422.3 595.6 431.9 594.0 441.6 592.6 451.2 591.4 460.9 590.4 470.5 589.6 480.2 589.0 489.9 588.6 499.5 588.3 509.2 588.3 518.8 588.3 528.5 588.6 538.1 589.0 547.8 589.5 557.4 590.2 567.1 591.1 576.7 592.1 586.4 593.2 596.0 594.4 605.7 595.8 615.4 597.3 625.0 598.9 634.7 600.6 644.3 602.4 654.0 604.3 663.6 606.3 673.3 608.4 682.9 610.6 692.6 612.8 702.2 615.1 711.9 617.4 721.6 619.8 731.2 622.2 740.9 624.6 750.5 627.1 760.2 629.6 769.8 632.0 779.5 634.4 789.1 636.9 798.8 639.3 808.4 641.6 818.1 643.9 827.7 646.1 837.4 648.3 847.1 650.4 856.7 652.4 866.4 654.4 876.0 656.2 885.7 657.9 895.3 659.5 905.0 660.9 914.6 662.3 924.3 663.4 933.9 664.7 943.6 670.0 952.5 670.0 952.5 668.6 942.7 667.5 933.0 666.3 923.2 664.9 913.4 663.4 903.7 661.7 893.9 659.9 884.2 658.0 874.4 656.1 864.6 654.0 854.9 651.8 845.1 649.6 835.3 647.3 825.6 644.9 815.8 642.5 806.1 640.0 796.3 637.5 786.5 635.0 776.8 632.5 767.0 630.0 757.2 627.4 747.5 624.9 737.7 622.5 728.0 620.0 718.2 617.7 708.4 615.3 698.7 613.1 688.9 610.9 679.1 608.9 669.4 606.9 659.6 605.0 649.9 603.3 640.1 601.6 630.3 600.1 620.6 598.7 610.8 597.4 601.0 596.3 591.3 595.3 581.5 594.4 571.8 593.7 562.0 593.1 552.2 592.7 542.5 592.5 532.7 592.4 522.9 592.4 513.2 592.7 503.4 593.1 493.7 593.7 483.9 594.4 474.1 595.4 464.4 596.5 454.6 597.9 444.8 599.4 435.1 601.2 425.3 603.1 415.6 605.3 405.8 607.6 396.0 610.2 386.3 612.7 376.5 Z" fill="#6e675f"/>
<!-- model: right leg -->
<path d="M1161.8 342.7 L1159.7 355.2 1160.4 363.1 1161.9 371.1 1163.2 379.0 1164.4 386.9 1165.5 394.9 1166.5 402.8 1167.3 410.7 1168.0 418.7 1168.6 426.6 1169.1 434.5 1169.5 442.5 1169.7 450.4 1169.9 458.3 1170.0 466.3 1169.9 474.2 1169.8 482.1 1169.6 490.1 1169.3 498.0 1168.9 505.9 1168.5 513.9 1167.9 521.8 1167.3 529.7 1166.7 537.7 1166.0 545.6 1165.2 553.5 1164.3 561.5 1163.4 569.4 1162.5 577.3 1161.5 585.3 1160.5 593.2 1159.4 601.2 1158.3 609.1 1157.2 617.0 1156.0 625.0 1154.8 632.9 1153.6 640.8 1152.4 648.8 1151.2 656.7 1150.0 664.6 1148.7 672.6 1147.5 680.5 1146.3 688.4 1145.0 696.4 1143.8 704.3 1142.6 712.2 1141.4 720.2 1140.2 728.1 1139.1 736.0 1137.9 744.0 1136.9 751.9 1135.8 759.8 1134.8 767.8 1133.8 775.7 1132.9 783.6 1132.0 791.6 1131.2 799.5 1130.4 807.4 1129.7 815.4 1129.0 823.3 1147.0 839.3 1148.0 829.2 1148.8 821.0 1149.6 812.7 1150.5 804.5 1151.4 796.3 1152.4 788.1 1153.4 779.8 1154.5 771.6 1155.6 763.4 1156.8 755.1 1158.0 746.9 1159.3 738.7 1160.6 730.5 1161.9 722.2 1163.2 714.0 1164.6 705.8 1165.9 697.5 1167.3 689.3 1168.7 681.1 1170.0 672.9 1171.4 664.6 1172.8 656.4 1174.1 648.2 1175.4 639.9 1176.7 631.7 1178.0 623.5 1179.2 615.3 1180.4 607.0 1181.6 598.8 1182.7 590.6 1183.8 582.3 1184.8 574.1 1185.7 565.9 1186.6 557.6 1187.5 549.4 1188.2 541.2 1188.9 533.0 1189.5 524.7 1190.0 516.5 1190.4 508.3 1190.7 500.0 1190.9 491.8 1191.0 483.6 1191.0 475.4 1190.9 467.1 1190.7 458.9 1190.4 450.7 1189.9 442.4 1189.3 434.2 1188.5 426.0 1187.7 417.8 1186.6 409.5 1185.5 401.3 1184.1 393.1 1182.7 384.8 1181.0 376.6 1179.2 368.4 1177.2 360.2 1175.1 351.9 1172.2 343.7 Z" fill="url(#rlegL)"/>
<path d="M1172.2 343.7 L1175.1 351.9 1177.2 360.2 1179.2 368.4 1181.0 376.6 1182.7 384.8 1184.1 393.1 1185.5 401.3 1186.6 409.5 1187.7 417.8 1188.5 426.0 1189.3 434.2 1189.9 442.4 1190.4 450.7 1190.7 458.9 1190.9 467.1 1191.0 475.4 1191.0 483.6 1190.9 491.8 1190.7 500.0 1190.4 508.3 1190.0 516.5 1189.5 524.7 1188.9 533.0 1188.2 541.2 1187.5 549.4 1186.6 557.6 1185.7 565.9 1184.8 574.1 1183.8 582.3 1182.7 590.6 1181.6 598.8 1180.4 607.0 1179.2 615.3 1178.0 623.5 1176.7 631.7 1175.4 639.9 1174.1 648.2 1172.8 656.4 1171.4 664.6 1170.0 672.9 1168.7 681.1 1167.3 689.3 1165.9 697.5 1164.6 705.8 1163.2 714.0 1161.9 722.2 1160.6 730.5 1159.3 738.7 1158.0 746.9 1156.8 755.1 1155.6 763.4 1154.5 771.6 1153.4 779.8 1152.4 788.1 1151.4 796.3 1150.5 804.5 1149.6 812.7 1148.8 821.0 1148.0 829.2 1165.8 825.7 1167.0 817.4 1168.0 809.0 1169.1 800.7 1170.2 792.4 1171.4 784.1 1172.5 775.7 1173.8 767.4 1175.0 759.1 1176.3 750.7 1177.6 742.4 1178.9 734.1 1180.2 725.8 1181.6 717.4 1182.9 709.1 1184.3 700.8 1185.6 692.4 1187.0 684.1 1188.3 675.8 1189.7 667.5 1191.0 659.1 1192.3 650.8 1193.6 642.5 1194.8 634.1 1196.1 625.8 1197.3 617.5 1198.4 609.2 1199.6 600.8 1200.7 592.5 1201.7 584.2 1202.7 575.8 1203.7 567.5 1204.6 559.2 1205.4 550.8 1206.2 542.5 1206.9 534.2 1207.6 525.9 1208.1 517.5 1208.6 509.2 1209.0 500.9 1209.4 492.5 1209.6 484.2 1209.8 475.9 1209.9 467.6 1209.9 459.2 1209.7 450.9 1209.5 442.6 1209.2 434.2 1208.8 425.9 1208.2 417.6 1207.6 409.3 1206.8 400.9 1205.9 392.6 1204.8 384.3 1203.7 375.9 1202.4 367.6 1201.0 359.3 1199.4 351.0 1197.7 342.6 1195.2 334.3 Z" fill="#938a80"/>
<path d="M1195.2 334.3 L1197.7 342.6 1199.4 351.0 1201.0 359.3 1202.4 367.6 1203.7 375.9 1204.8 384.3 1205.9 392.6 1206.8 400.9 1207.6 409.3 1208.2 417.6 1208.8 425.9 1209.2 434.2 1209.5 442.6 1209.7 450.9 1209.9 459.2 1209.9 467.6 1209.8 475.9 1209.6 484.2 1209.4 492.5 1209.0 500.9 1208.6 509.2 1208.1 517.5 1207.6 525.9 1206.9 534.2 1206.2 542.5 1205.4 550.8 1204.6 559.2 1203.7 567.5 1202.7 575.8 1201.7 584.2 1200.7 592.5 1199.6 600.8 1198.4 609.2 1197.3 617.5 1196.1 625.8 1194.8 634.1 1193.6 642.5 1192.3 650.8 1191.0 659.1 1189.7 667.5 1188.3 675.8 1187.0 684.1 1185.6 692.4 1184.3 700.8 1182.9 709.1 1181.6 717.4 1180.2 725.8 1178.9 734.1 1177.6 742.4 1176.3 750.7 1175.0 759.1 1173.8 767.4 1172.5 775.7 1171.4 784.1 1170.2 792.4 1169.1 800.7 1168.0 809.0 1167.0 817.4 1165.8 825.7 1175.3 832.8 1176.3 824.2 1177.2 815.7 1178.1 807.1 1179.1 798.6 1180.2 790.0 1181.3 781.5 1182.5 772.9 1183.7 764.4 1185.0 755.8 1186.3 747.2 1187.6 738.7 1189.0 730.1 1190.3 721.6 1191.7 713.0 1193.2 704.5 1194.6 695.9 1196.0 687.3 1197.5 678.8 1198.9 670.2 1200.3 661.7 1201.7 653.1 1203.1 644.6 1204.5 636.0 1205.9 627.5 1207.2 618.9 1208.5 610.3 1209.8 601.8 1211.0 593.2 1212.2 584.7 1213.3 576.1 1214.4 567.6 1215.4 559.0 1216.3 550.5 1217.2 541.9 1218.0 533.3 1218.7 524.8 1219.4 516.2 1219.9 507.7 1220.4 499.1 1220.8 490.6 1221.1 482.0 1221.2 473.5 1221.3 464.9 1221.3 456.3 1221.1 447.8 1220.8 439.2 1220.4 430.7 1219.9 422.1 1219.3 413.6 1218.5 405.0 1217.5 396.4 1216.4 387.9 1215.2 379.3 1213.8 370.8 1212.2 362.2 1210.5 353.7 1208.6 345.1 1206.6 336.6 1203.6 328.0 Z" fill="url(#rlegR)"/>
<!-- model: beam -->
<defs><clipPath id="beamclip2"><path d="M631.0 329.4 L635.0 330.9 644.1 336.6 652.9 342.8 661.7 348.9 670.5 355.1 679.3 361.3 688.2 367.4 697.0 373.6 705.8 379.7 714.7 385.8 723.6 391.8 732.6 397.7 741.7 403.5 750.8 409.2 760.0 414.8 769.3 420.2 778.6 425.4 788.1 430.5 797.8 435.3 807.5 439.8 817.4 444.1 827.4 448.0 837.6 451.5 847.9 454.5 858.3 457.1 868.9 459.1 879.5 460.6 890.3 461.3 901.0 461.4 911.7 460.7 922.4 459.3 932.9 457.1 943.3 454.2 953.4 450.5 963.2 446.2 972.8 441.2 982.0 435.7 990.9 429.7 999.6 423.4 1008.1 416.8 1016.4 410.0 1024.6 403.0 1032.6 395.8 1040.6 388.6 1048.5 381.3 1056.3 373.9 1064.1 366.5 1071.9 359.2 1079.8 351.8 1087.7 344.5 1095.7 337.3 1103.7 330.2 1112.0 323.3 1120.3 316.5 1128.9 310.1 1137.8 304.0 1147.1 298.6 1156.8 293.9 1166.9 290.3 1177.4 288.2 1186.9 291.5 1172.0 345.6 1163.6 352.0 1156.2 359.9 1148.8 367.6 1141.2 375.3 1133.6 382.9 1125.9 390.4 1118.1 397.8 1110.2 405.1 1102.1 412.3 1094.0 419.4 1085.7 426.3 1077.4 433.0 1068.9 439.6 1060.2 446.0 1051.4 452.3 1042.5 458.3 1033.4 464.0 1024.2 469.6 1014.8 474.8 1005.2 479.8 995.5 484.4 985.6 488.7 975.6 492.6 965.4 496.0 955.1 499.0 944.6 501.6 934.0 503.6 923.4 505.1 912.6 506.0 901.9 506.5 891.1 506.4 880.4 505.9 869.6 504.8 859.0 503.4 848.4 501.5 837.9 499.2 827.4 496.5 817.1 493.5 806.9 490.1 796.8 486.4 786.8 482.5 776.8 478.3 767.0 473.8 757.4 469.1 747.8 464.2 738.3 459.2 728.9 453.9 719.6 448.5 710.3 443.0 701.2 437.3 692.1 431.4 683.2 425.5 674.3 419.5 665.4 413.3 656.6 407.1 647.9 400.8 639.2 394.4 630.6 387.9 622.1 381.4 612.7 376.5 608.7 374.0 Z"/></clipPath><linearGradient id="bu0" gradientUnits="userSpaceOnUse" x1="580" y1="0" x2="1210" y2="0"><stop offset="0.000" stop-color="#c08870"/><stop offset="0.024" stop-color="#c08870"/><stop offset="0.048" stop-color="#c08870"/><stop offset="0.071" stop-color="#c08870"/><stop offset="0.095" stop-color="#be8a75"/><stop offset="0.119" stop-color="#b99284"/><stop offset="0.143" stop-color="#b39992"/><stop offset="0.167" stop-color="#aea1a1"/><stop offset="0.190" stop-color="#a8a8b0"/><stop offset="0.214" stop-color="#a2a8bc"/><stop offset="0.238" stop-color="#9ca8c8"/><stop offset="0.262" stop-color="#96a8d4"/><stop offset="0.286" stop-color="#90a8e0"/><stop offset="0.310" stop-color="#89a3e2"/><stop offset="0.333" stop-color="#829ee3"/><stop offset="0.357" stop-color="#7b99e5"/><stop offset="0.381" stop-color="#7593e7"/><stop offset="0.405" stop-color="#6b8ae2"/><stop offset="0.429" stop-color="#5d77cf"/><stop offset="0.452" stop-color="#4e65bc"/><stop offset="0.476" stop-color="#3f53a9"/><stop offset="0.500" stop-color="#314096"/><stop offset="0.524" stop-color="#2e3c92"/><stop offset="0.548" stop-color="#304096"/><stop offset="0.571" stop-color="#32449a"/><stop offset="0.595" stop-color="#36499f"/><stop offset="0.619" stop-color="#3d51a7"/><stop offset="0.643" stop-color="#435ab0"/><stop offset="0.667" stop-color="#4a62b8"/><stop offset="0.690" stop-color="#5670c1"/><stop offset="0.714" stop-color="#627eca"/><stop offset="0.738" stop-color="#708ccf"/><stop offset="0.762" stop-color="#8198cc"/><stop offset="0.786" stop-color="#92a4c9"/><stop offset="0.810" stop-color="#a4a6ba"/><stop offset="0.833" stop-color="#b6a3a5"/><stop offset="0.857" stop-color="#c8a090"/><stop offset="0.881" stop-color="#d09880"/><stop offset="0.905" stop-color="#d89070"/><stop offset="0.929" stop-color="#d8a288"/><stop offset="0.952" stop-color="#d8b4a0"/><stop offset="0.976" stop-color="#d8c0b0"/><stop offset="1.000" stop-color="#d8c0b0"/></linearGradient><linearGradient id="bu1" gradientUnits="userSpaceOnUse" x1="580" y1="0" x2="1210" y2="0"><stop offset="0.000" stop-color="#b58b76"/><stop offset="0.024" stop-color="#b58b76"/><stop offset="0.048" stop-color="#b58b76"/><stop offset="0.071" stop-color="#b58b76"/><stop offset="0.095" stop-color="#b38c79"/><stop offset="0.119" stop-color="#ae9184"/><stop offset="0.143" stop-color="#a9968f"/><stop offset="0.167" stop-color="#a49b9a"/><stop offset="0.190" stop-color="#9f9fa5"/><stop offset="0.214" stop-color="#989caa"/><stop offset="0.238" stop-color="#9199b0"/><stop offset="0.262" stop-color="#8996b6"/><stop offset="0.286" stop-color="#8293bc"/><stop offset="0.310" stop-color="#798cbe"/><stop offset="0.333" stop-color="#7085c0"/><stop offset="0.357" stop-color="#687fc2"/><stop offset="0.381" stop-color="#5f78c4"/><stop offset="0.405" stop-color="#566fc2"/><stop offset="0.429" stop-color="#4c63b6"/><stop offset="0.452" stop-color="#4357ab"/><stop offset="0.476" stop-color="#394a9f"/><stop offset="0.500" stop-color="#2f3e94"/><stop offset="0.524" stop-color="#2e3c92"/><stop offset="0.548" stop-color="#304096"/><stop offset="0.571" stop-color="#32449a"/><stop offset="0.595" stop-color="#36499f"/><stop offset="0.619" stop-color="#3d51a7"/><stop offset="0.643" stop-color="#435aaf"/><stop offset="0.667" stop-color="#4a62b8"/><stop offset="0.690" stop-color="#5771c0"/><stop offset="0.714" stop-color="#637fc9"/><stop offset="0.738" stop-color="#718dce"/><stop offset="0.762" stop-color="#8299cb"/><stop offset="0.786" stop-color="#93a4c8"/><stop offset="0.810" stop-color="#a4a7ba"/><stop offset="0.833" stop-color="#b6a4a6"/><stop offset="0.857" stop-color="#c7a192"/><stop offset="0.881" stop-color="#cf9880"/><stop offset="0.905" stop-color="#d78f6f"/><stop offset="0.929" stop-color="#d8a187"/><stop offset="0.952" stop-color="#d8b39f"/><stop offset="0.976" stop-color="#d8bfaf"/><stop offset="1.000" stop-color="#d8bfaf"/></linearGradient><linearGradient id="bu2" gradientUnits="userSpaceOnUse" x1="580" y1="0" x2="1210" y2="0"><stop offset="0.000" stop-color="#af8c79"/><stop offset="0.024" stop-color="#af8c79"/><stop offset="0.048" stop-color="#af8c79"/><stop offset="0.071" stop-color="#af8c79"/><stop offset="0.095" stop-color="#ad8e7c"/><stop offset="0.119" stop-color="#a99185"/><stop offset="0.143" stop-color="#a4958e"/><stop offset="0.167" stop-color="#a09897"/><stop offset="0.190" stop-color="#9c9ca0"/><stop offset="0.214" stop-color="#9599a5"/><stop offset="0.238" stop-color="#8e96ab"/><stop offset="0.262" stop-color="#8893b0"/><stop offset="0.286" stop-color="#8190b6"/><stop offset="0.310" stop-color="#7788b6"/><stop offset="0.333" stop-color="#6d80b6"/><stop offset="0.357" stop-color="#6377b6"/><stop offset="0.381" stop-color="#596fb6"/><stop offset="0.405" stop-color="#5066b4"/><stop offset="0.429" stop-color="#485cab"/><stop offset="0.452" stop-color="#3f52a3"/><stop offset="0.476" stop-color="#37489b"/><stop offset="0.500" stop-color="#2f3d93"/><stop offset="0.524" stop-color="#2e3d93"/><stop offset="0.548" stop-color="#304096"/><stop offset="0.571" stop-color="#32449a"/><stop offset="0.595" stop-color="#36499f"/><stop offset="0.619" stop-color="#3d52a7"/><stop offset="0.643" stop-color="#435aaf"/><stop offset="0.667" stop-color="#4a62b7"/><stop offset="0.690" stop-color="#5771c0"/><stop offset="0.714" stop-color="#6480c9"/><stop offset="0.738" stop-color="#728dcd"/><stop offset="0.762" stop-color="#8399ca"/><stop offset="0.786" stop-color="#94a5c7"/><stop offset="0.810" stop-color="#a5a7ba"/><stop offset="0.833" stop-color="#b6a5a6"/><stop offset="0.857" stop-color="#c6a293"/><stop offset="0.881" stop-color="#ce9881"/><stop offset="0.905" stop-color="#d68e6e"/><stop offset="0.929" stop-color="#d7a086"/><stop offset="0.952" stop-color="#d8b29e"/><stop offset="0.976" stop-color="#d8beae"/><stop offset="1.000" stop-color="#d8beae"/></linearGradient><linearGradient id="bu3" gradientUnits="userSpaceOnUse" x1="580" y1="0" x2="1210" y2="0"><stop offset="0.000" stop-color="#ad8d7c"/><stop offset="0.024" stop-color="#ad8d7c"/><stop offset="0.048" stop-color="#ad8d7c"/><stop offset="0.071" stop-color="#ad8d7c"/><stop offset="0.095" stop-color="#ab8e7f"/><stop offset="0.119" stop-color="#a79187"/><stop offset="0.143" stop-color="#a3958f"/><stop offset="0.167" stop-color="#9f9897"/><stop offset="0.190" stop-color="#9b9b9f"/><stop offset="0.214" stop-color="#9598a4"/><stop offset="0.238" stop-color="#8e95a9"/><stop offset="0.262" stop-color="#8893af"/><stop offset="0.286" stop-color="#8290b4"/><stop offset="0.310" stop-color="#7988b4"/><stop offset="0.333" stop-color="#7081b4"/><stop offset="0.357" stop-color="#6679b4"/><stop offset="0.381" stop-color="#5d72b3"/><stop offset="0.405" stop-color="#5469b1"/><stop offset="0.429" stop-color="#4b5ea9"/><stop offset="0.452" stop-color="#4153a2"/><stop offset="0.476" stop-color="#38489a"/><stop offset="0.500" stop-color="#2f3e93"/><stop offset="0.524" stop-color="#2e3d93"/><stop offset="0.548" stop-color="#304096"/><stop offset="0.571" stop-color="#32449a"/><stop offset="0.595" stop-color="#364a9f"/><stop offset="0.619" stop-color="#3d52a7"/><stop offset="0.643" stop-color="#435aaf"/><stop offset="0.667" stop-color="#4a63b7"/><stop offset="0.690" stop-color="#5872bf"/><stop offset="0.714" stop-color="#6580c8"/><stop offset="0.738" stop-color="#748ecd"/><stop offset="0.762" stop-color="#849aca"/><stop offset="0.786" stop-color="#95a5c7"/><stop offset="0.810" stop-color="#a5a8b9"/><stop offset="0.833" stop-color="#b5a6a7"/><stop offset="0.857" stop-color="#c6a395"/><stop offset="0.881" stop-color="#ce9981"/><stop offset="0.905" stop-color="#d68e6e"/><stop offset="0.929" stop-color="#d7a086"/><stop offset="0.952" stop-color="#d7b29e"/><stop offset="0.976" stop-color="#d8beae"/><stop offset="1.000" stop-color="#d8beae"/></linearGradient><linearGradient id="bu4" gradientUnits="userSpaceOnUse" x1="580" y1="0" x2="1210" y2="0"><stop offset="0.000" stop-color="#ab8e7e"/><stop offset="0.024" stop-color="#ab8e7e"/><stop offset="0.048" stop-color="#ab8e7e"/><stop offset="0.071" stop-color="#ab8e7e"/><stop offset="0.095" stop-color="#a98f81"/><stop offset="0.119" stop-color="#a69288"/><stop offset="0.143" stop-color="#a2958f"/><stop offset="0.167" stop-color="#9e9797"/><stop offset="0.190" stop-color="#9a9a9e"/><stop offset="0.214" stop-color="#9498a3"/><stop offset="0.238" stop-color="#8f95a8"/><stop offset="0.262" stop-color="#8993ad"/><stop offset="0.286" stop-color="#8390b2"/><stop offset="0.310" stop-color="#7b89b1"/><stop offset="0.333" stop-color="#7282b1"/><stop offset="0.357" stop-color="#697bb1"/><stop offset="0.381" stop-color="#6174b1"/><stop offset="0.405" stop-color="#586cae"/><stop offset="0.429" stop-color="#4e60a7"/><stop offset="0.452" stop-color="#4455a0"/><stop offset="0.476" stop-color="#394999"/><stop offset="0.500" stop-color="#2f3e92"/><stop offset="0.524" stop-color="#2e3d93"/><stop offset="0.548" stop-color="#304197"/><stop offset="0.571" stop-color="#32459b"/><stop offset="0.595" stop-color="#364aa0"/><stop offset="0.619" stop-color="#3d52a7"/><stop offset="0.643" stop-color="#435baf"/><stop offset="0.667" stop-color="#4a63b6"/><stop offset="0.690" stop-color="#5872bf"/><stop offset="0.714" stop-color="#6681c7"/><stop offset="0.738" stop-color="#758fcc"/><stop offset="0.762" stop-color="#859ac9"/><stop offset="0.786" stop-color="#96a6c6"/><stop offset="0.810" stop-color="#a6a8b9"/><stop offset="0.833" stop-color="#b5a6a8"/><stop offset="0.857" stop-color="#c5a596"/><stop offset="0.881" stop-color="#cd9982"/><stop offset="0.905" stop-color="#d58d6d"/><stop offset="0.929" stop-color="#d69f85"/><stop offset="0.952" stop-color="#d7b19d"/><stop offset="0.976" stop-color="#d8bdad"/><stop offset="1.000" stop-color="#d8bdad"/></linearGradient><linearGradient id="bu5" gradientUnits="userSpaceOnUse" x1="580" y1="0" x2="1210" y2="0"><stop offset="0.000" stop-color="#a98f81"/><stop offset="0.024" stop-color="#a98f81"/><stop offset="0.048" stop-color="#a98f81"/><stop offset="0.071" stop-color="#a98f81"/><stop offset="0.095" stop-color="#a79083"/><stop offset="0.119" stop-color="#a4928a"/><stop offset="0.143" stop-color="#a09590"/><stop offset="0.167" stop-color="#9d9797"/><stop offset="0.190" stop-color="#99999d"/><stop offset="0.214" stop-color="#9497a2"/><stop offset="0.238" stop-color="#8f95a6"/><stop offset="0.262" stop-color="#8a92ab"/><stop offset="0.286" stop-color="#8490af"/><stop offset="0.310" stop-color="#7c8aaf"/><stop offset="0.333" stop-color="#7483af"/><stop offset="0.357" stop-color="#6d7dae"/><stop offset="0.381" stop-color="#6577ae"/><stop offset="0.405" stop-color="#5c6eac"/><stop offset="0.429" stop-color="#5162a5"/><stop offset="0.452" stop-color="#46569f"/><stop offset="0.476" stop-color="#3b4a98"/><stop offset="0.500" stop-color="#303e92"/><stop offset="0.524" stop-color="#2e3d93"/><stop offset="0.548" stop-color="#304197"/><stop offset="0.571" stop-color="#32459b"/><stop offset="0.595" stop-color="#364aa0"/><stop offset="0.619" stop-color="#3d52a7"/><stop offset="0.643" stop-color="#435baf"/><stop offset="0.667" stop-color="#4a63b6"/><stop offset="0.690" stop-color="#5972be"/><stop offset="0.714" stop-color="#6782c6"/><stop offset="0.738" stop-color="#7690cb"/><stop offset="0.762" stop-color="#869bc8"/><stop offset="0.786" stop-color="#96a6c5"/><stop offset="0.810" stop-color="#a6a9b9"/><stop offset="0.833" stop-color="#b5a7a8"/><stop offset="0.857" stop-color="#c4a698"/><stop offset="0.881" stop-color="#cc9982"/><stop offset="0.905" stop-color="#d48c6c"/><stop offset="0.929" stop-color="#d69e84"/><stop offset="0.952" stop-color="#d7b09c"/><stop offset="0.976" stop-color="#d8bcac"/><stop offset="1.000" stop-color="#d8bcac"/></linearGradient><linearGradient id="bu6" gradientUnits="userSpaceOnUse" x1="580" y1="0" x2="1210" y2="0"><stop offset="0.000" stop-color="#a79083"/><stop offset="0.024" stop-color="#a79083"/><stop offset="0.048" stop-color="#a79083"/><stop offset="0.071" stop-color="#a79083"/><stop offset="0.095" stop-color="#a69085"/><stop offset="0.119" stop-color="#a2938b"/><stop offset="0.143" stop-color="#9f9591"/><stop offset="0.167" stop-color="#9c9797"/><stop offset="0.190" stop-color="#99999d"/><stop offset="0.214" stop-color="#9497a1"/><stop offset="0.238" stop-color="#8f94a5"/><stop offset="0.262" stop-color="#8a92a9"/><stop offset="0.286" stop-color="#8590ad"/><stop offset="0.310" stop-color="#7e8aad"/><stop offset="0.333" stop-color="#7784ac"/><stop offset="0.357" stop-color="#707fac"/><stop offset="0.381" stop-color="#6979ab"/><stop offset="0.405" stop-color="#6274aa"/><stop offset="0.429" stop-color="#5e70a9"/><stop offset="0.452" stop-color="#596da8"/><stop offset="0.476" stop-color="#5469a7"/><stop offset="0.500" stop-color="#5065a6"/><stop offset="0.524" stop-color="#495ea4"/><stop offset="0.548" stop-color="#4156a2"/><stop offset="0.571" stop-color="#394d9f"/><stop offset="0.595" stop-color="#364aa0"/><stop offset="0.619" stop-color="#3d53a7"/><stop offset="0.643" stop-color="#435bae"/><stop offset="0.667" stop-color="#4a63b5"/><stop offset="0.690" stop-color="#5973be"/><stop offset="0.714" stop-color="#6882c6"/><stop offset="0.738" stop-color="#7890ca"/><stop offset="0.762" stop-color="#879cc7"/><stop offset="0.786" stop-color="#97a7c4"/><stop offset="0.810" stop-color="#a6a9b9"/><stop offset="0.833" stop-color="#b5a8a9"/><stop offset="0.857" stop-color="#c3a799"/><stop offset="0.881" stop-color="#cb9982"/><stop offset="0.905" stop-color="#d38b6b"/><stop offset="0.929" stop-color="#d59d83"/><stop offset="0.952" stop-color="#d7af9b"/><stop offset="0.976" stop-color="#d8bbab"/><stop offset="1.000" stop-color="#d8bbab"/></linearGradient><linearGradient id="bu7" gradientUnits="userSpaceOnUse" x1="580" y1="0" x2="1210" y2="0"><stop offset="0.000" stop-color="#a59186"/><stop offset="0.024" stop-color="#a59186"/><stop offset="0.048" stop-color="#a59186"/><stop offset="0.071" stop-color="#a59186"/><stop offset="0.095" stop-color="#a49187"/><stop offset="0.119" stop-color="#a1938d"/><stop offset="0.143" stop-color="#9e9592"/><stop offset="0.167" stop-color="#9b9697"/><stop offset="0.190" stop-color="#98989c"/><stop offset="0.214" stop-color="#9496a0"/><stop offset="0.238" stop-color="#8f94a4"/><stop offset="0.262" stop-color="#8b92a7"/><stop offset="0.286" stop-color="#8690ab"/><stop offset="0.310" stop-color="#808baa"/><stop offset="0.333" stop-color="#7986aa"/><stop offset="0.357" stop-color="#7381a9"/><stop offset="0.381" stop-color="#6c7ba8"/><stop offset="0.405" stop-color="#6777a8"/><stop offset="0.429" stop-color="#6374a6"/><stop offset="0.452" stop-color="#6071a5"/><stop offset="0.476" stop-color="#5c6ea4"/><stop offset="0.500" stop-color="#586ba2"/><stop offset="0.524" stop-color="#5063a1"/><stop offset="0.548" stop-color="#4659a0"/><stop offset="0.571" stop-color="#3b4f9f"/><stop offset="0.595" stop-color="#364ba0"/><stop offset="0.619" stop-color="#3d53a7"/><stop offset="0.643" stop-color="#435bae"/><stop offset="0.667" stop-color="#4a64b5"/><stop offset="0.690" stop-color="#5a73bd"/><stop offset="0.714" stop-color="#6983c5"/><stop offset="0.738" stop-color="#7991c9"/><stop offset="0.762" stop-color="#889cc7"/><stop offset="0.786" stop-color="#98a7c4"/><stop offset="0.810" stop-color="#a7aab9"/><stop offset="0.833" stop-color="#b5a9aa"/><stop offset="0.857" stop-color="#c3a89b"/><stop offset="0.881" stop-color="#cb9983"/><stop offset="0.905" stop-color="#d38b6b"/><stop offset="0.929" stop-color="#d59d83"/><stop offset="0.952" stop-color="#d7af9b"/><stop offset="0.976" stop-color="#d8bbab"/><stop offset="1.000" stop-color="#d8bbab"/></linearGradient><linearGradient id="bu8" gradientUnits="userSpaceOnUse" x1="580" y1="0" x2="1210" y2="0"><stop offset="0.000" stop-color="#a39188"/><stop offset="0.024" stop-color="#a39188"/><stop offset="0.048" stop-color="#a39188"/><stop offset="0.071" stop-color="#a39188"/><stop offset="0.095" stop-color="#a2928a"/><stop offset="0.119" stop-color="#9f938e"/><stop offset="0.143" stop-color="#9c9592"/><stop offset="0.167" stop-color="#9a9697"/><stop offset="0.190" stop-color="#97979b"/><stop offset="0.214" stop-color="#93959f"/><stop offset="0.238" stop-color="#8f94a2"/><stop offset="0.262" stop-color="#8b92a5"/><stop offset="0.286" stop-color="#8890a9"/><stop offset="0.310" stop-color="#828ba8"/><stop offset="0.333" stop-color="#7c87a7"/><stop offset="0.357" stop-color="#7682a6"/><stop offset="0.381" stop-color="#717ea5"/><stop offset="0.405" stop-color="#6c7aa4"/><stop offset="0.429" stop-color="#6977a2"/><stop offset="0.452" stop-color="#6775a1"/><stop offset="0.476" stop-color="#6473a0"/><stop offset="0.500" stop-color="#61709f"/><stop offset="0.524" stop-color="#606f9f"/><stop offset="0.548" stop-color="#606fa0"/><stop offset="0.571" stop-color="#606ea1"/><stop offset="0.595" stop-color="#5e6da3"/><stop offset="0.619" stop-color="#576aa9"/><stop offset="0.643" stop-color="#5167af"/><stop offset="0.667" stop-color="#4a64b5"/><stop offset="0.690" stop-color="#5a74bc"/><stop offset="0.714" stop-color="#6a84c4"/><stop offset="0.738" stop-color="#7a92c9"/><stop offset="0.762" stop-color="#8a9dc6"/><stop offset="0.786" stop-color="#99a7c3"/><stop offset="0.810" stop-color="#a7abb8"/><stop offset="0.833" stop-color="#b4aaaa"/><stop offset="0.857" stop-color="#c2a99c"/><stop offset="0.881" stop-color="#ca9a83"/><stop offset="0.905" stop-color="#d28a6a"/><stop offset="0.929" stop-color="#d49c82"/><stop offset="0.952" stop-color="#d6ae9a"/><stop offset="0.976" stop-color="#d8baaa"/><stop offset="1.000" stop-color="#d8baaa"/></linearGradient><linearGradient id="bu9" gradientUnits="userSpaceOnUse" x1="580" y1="0" x2="1210" y2="0"><stop offset="0.000" stop-color="#a0928b"/><stop offset="0.024" stop-color="#a0928b"/><stop offset="0.048" stop-color="#a0928b"/><stop offset="0.071" stop-color="#a0928b"/><stop offset="0.095" stop-color="#a0938c"/><stop offset="0.119" stop-color="#9d9490"/><stop offset="0.143" stop-color="#9b9593"/><stop offset="0.167" stop-color="#999697"/><stop offset="0.190" stop-color="#97979b"/><stop offset="0.214" stop-color="#93959d"/><stop offset="0.238" stop-color="#8f93a0"/><stop offset="0.262" stop-color="#8c91a3"/><stop offset="0.286" stop-color="#888fa6"/><stop offset="0.310" stop-color="#838ca4"/><stop offset="0.333" stop-color="#7f88a3"/><stop offset="0.357" stop-color="#7a84a2"/><stop offset="0.381" stop-color="#7580a1"/><stop offset="0.405" stop-color="#717da0"/><stop offset="0.429" stop-color="#6f7b9f"/><stop offset="0.452" stop-color="#6e799d"/><stop offset="0.476" stop-color="#6c779c"/><stop offset="0.500" stop-color="#6a769b"/><stop offset="0.524" stop-color="#69759b"/><stop offset="0.548" stop-color="#69749c"/><stop offset="0.571" stop-color="#68749d"/><stop offset="0.595" stop-color="#65729f"/><stop offset="0.619" stop-color="#5c6da6"/><stop offset="0.643" stop-color="#5369ad"/><stop offset="0.667" stop-color="#4a64b4"/><stop offset="0.690" stop-color="#5b74bc"/><stop offset="0.714" stop-color="#6b84c4"/><stop offset="0.738" stop-color="#7c93c8"/><stop offset="0.762" stop-color="#8b9dc5"/><stop offset="0.786" stop-color="#9aa8c2"/><stop offset="0.810" stop-color="#a7abb8"/><stop offset="0.833" stop-color="#b4abab"/><stop offset="0.857" stop-color="#c1aa9e"/><stop offset="0.881" stop-color="#c99a83"/><stop offset="0.905" stop-color="#d18969"/><stop offset="0.929" stop-color="#d49b81"/><stop offset="0.952" stop-color="#d6ad99"/><stop offset="0.976" stop-color="#d8b9a9"/><stop offset="1.000" stop-color="#d8b9a9"/></linearGradient><linearGradient id="bu10" gradientUnits="userSpaceOnUse" x1="580" y1="0" x2="1210" y2="0"><stop offset="0.000" stop-color="#9e938d"/><stop offset="0.024" stop-color="#9e938d"/><stop offset="0.048" stop-color="#9e938d"/><stop offset="0.071" stop-color="#9e938d"/><stop offset="0.095" stop-color="#9e938e"/><stop offset="0.119" stop-color="#9c9491"/><stop offset="0.143" stop-color="#9a9494"/><stop offset="0.167" stop-color="#989597"/><stop offset="0.190" stop-color="#96969a"/><stop offset="0.214" stop-color="#93949c"/><stop offset="0.238" stop-color="#8f929e"/><stop offset="0.262" stop-color="#8c90a0"/><stop offset="0.286" stop-color="#898fa2"/><stop offset="0.310" stop-color="#858ba0"/><stop offset="0.333" stop-color="#81889f"/><stop offset="0.357" stop-color="#7d859e"/><stop offset="0.381" stop-color="#79829d"/><stop offset="0.405" stop-color="#767f9c"/><stop offset="0.429" stop-color="#757e9b"/><stop offset="0.452" stop-color="#747d9a"/><stop offset="0.476" stop-color="#747c99"/><stop offset="0.500" stop-color="#737b98"/><stop offset="0.524" stop-color="#727b98"/><stop offset="0.548" stop-color="#717a98"/><stop offset="0.571" stop-color="#717999"/><stop offset="0.595" stop-color="#717a98"/><stop offset="0.619" stop-color="#757c95"/><stop offset="0.643" stop-color="#787f92"/><stop offset="0.667" stop-color="#7c818f"/><stop offset="0.690" stop-color="#7a87a4"/><stop offset="0.714" stop-color="#798cba"/><stop offset="0.738" stop-color="#7d93c7"/><stop offset="0.762" stop-color="#8c9ec4"/><stop offset="0.786" stop-color="#9ba8c1"/><stop offset="0.810" stop-color="#a8acb8"/><stop offset="0.833" stop-color="#b4abac"/><stop offset="0.857" stop-color="#c0ab9f"/><stop offset="0.881" stop-color="#c89a84"/><stop offset="0.905" stop-color="#d08868"/><stop offset="0.929" stop-color="#d39a80"/><stop offset="0.952" stop-color="#d6ac98"/><stop offset="0.976" stop-color="#d8b8a8"/><stop offset="1.000" stop-color="#d8b8a8"/></linearGradient><linearGradient id="bu11" gradientUnits="userSpaceOnUse" x1="580" y1="0" x2="1210" y2="0"><stop offset="0.000" stop-color="#9c9490"/><stop offset="0.024" stop-color="#9c9490"/><stop offset="0.048" stop-color="#9c9490"/><stop offset="0.071" stop-color="#9c9490"/><stop offset="0.095" stop-color="#9c9490"/><stop offset="0.119" stop-color="#9a9492"/><stop offset="0.143" stop-color="#989494"/><stop offset="0.167" stop-color="#969496"/><stop offset="0.190" stop-color="#949498"/><stop offset="0.214" stop-color="#929399"/><stop offset="0.238" stop-color="#8f919b"/><stop offset="0.262" stop-color="#8c8f9c"/><stop offset="0.286" stop-color="#898e9e"/><stop offset="0.310" stop-color="#868b9c"/><stop offset="0.333" stop-color="#83899b"/><stop offset="0.357" stop-color="#80869a"/><stop offset="0.381" stop-color="#7d8499"/><stop offset="0.405" stop-color="#7b8298"/><stop offset="0.429" stop-color="#7b8297"/><stop offset="0.452" stop-color="#7b8296"/><stop offset="0.476" stop-color="#7b8195"/><stop offset="0.500" stop-color="#7b8194"/><stop offset="0.524" stop-color="#7b8094"/><stop offset="0.548" stop-color="#7a8094"/><stop offset="0.571" stop-color="#797f95"/><stop offset="0.595" stop-color="#797f94"/><stop offset="0.619" stop-color="#7b8092"/><stop offset="0.643" stop-color="#7d8290"/><stop offset="0.667" stop-color="#7f838d"/><stop offset="0.690" stop-color="#83868e"/><stop offset="0.714" stop-color="#88898e"/><stop offset="0.738" stop-color="#8b8b8e"/><stop offset="0.762" stop-color="#8d8c8d"/><stop offset="0.786" stop-color="#8f8c8c"/><stop offset="0.810" stop-color="#918c8b"/><stop offset="0.833" stop-color="#948c89"/><stop offset="0.857" stop-color="#968c88"/><stop offset="0.881" stop-color="#978c88"/><stop offset="0.905" stop-color="#988c88"/><stop offset="0.929" stop-color="#9b908b"/><stop offset="0.952" stop-color="#9e958e"/><stop offset="0.976" stop-color="#a09890"/><stop offset="1.000" stop-color="#a09890"/></linearGradient><linearGradient id="bu12" gradientUnits="userSpaceOnUse" x1="580" y1="0" x2="1210" y2="0"><stop offset="0.000" stop-color="#9a9491"/><stop offset="0.024" stop-color="#9a9491"/><stop offset="0.048" stop-color="#9a9491"/><stop offset="0.071" stop-color="#9a9491"/><stop offset="0.095" stop-color="#9a9491"/><stop offset="0.119" stop-color="#989392"/><stop offset="0.143" stop-color="#969393"/><stop offset="0.167" stop-color="#959394"/><stop offset="0.190" stop-color="#939396"/><stop offset="0.214" stop-color="#919197"/><stop offset="0.238" stop-color="#8e9098"/><stop offset="0.262" stop-color="#8c8e99"/><stop offset="0.286" stop-color="#8a8d9a"/><stop offset="0.310" stop-color="#888b98"/><stop offset="0.333" stop-color="#868997"/><stop offset="0.357" stop-color="#848896"/><stop offset="0.381" stop-color="#828695"/><stop offset="0.405" stop-color="#818594"/><stop offset="0.429" stop-color="#828593"/><stop offset="0.452" stop-color="#828692"/><stop offset="0.476" stop-color="#838691"/><stop offset="0.500" stop-color="#848690"/><stop offset="0.524" stop-color="#848690"/><stop offset="0.548" stop-color="#838590"/><stop offset="0.571" stop-color="#818491"/><stop offset="0.595" stop-color="#818490"/><stop offset="0.619" stop-color="#81848f"/><stop offset="0.643" stop-color="#82858d"/><stop offset="0.667" stop-color="#83868c"/><stop offset="0.690" stop-color="#86878c"/><stop offset="0.714" stop-color="#89898c"/><stop offset="0.738" stop-color="#8b8a8c"/><stop offset="0.762" stop-color="#8d8b8c"/><stop offset="0.786" stop-color="#8f8b8b"/><stop offset="0.810" stop-color="#918b8a"/><stop offset="0.833" stop-color="#948b88"/><stop offset="0.857" stop-color="#968b87"/><stop offset="0.881" stop-color="#968b87"/><stop offset="0.905" stop-color="#978c88"/><stop offset="0.929" stop-color="#998f8a"/><stop offset="0.952" stop-color="#9b938d"/><stop offset="0.976" stop-color="#9d958e"/><stop offset="1.000" stop-color="#9d958e"/></linearGradient><linearGradient id="bu13" gradientUnits="userSpaceOnUse" x1="580" y1="0" x2="1210" y2="0"><stop offset="0.000" stop-color="#999392"/><stop offset="0.024" stop-color="#999392"/><stop offset="0.048" stop-color="#999392"/><stop offset="0.071" stop-color="#999392"/><stop offset="0.095" stop-color="#989392"/><stop offset="0.119" stop-color="#969392"/><stop offset="0.143" stop-color="#959293"/><stop offset="0.167" stop-color="#939293"/><stop offset="0.190" stop-color="#919194"/><stop offset="0.214" stop-color="#909094"/><stop offset="0.238" stop-color="#8e8f95"/><stop offset="0.262" stop-color="#8c8d95"/><stop offset="0.286" stop-color="#8b8c96"/><stop offset="0.310" stop-color="#898b94"/><stop offset="0.333" stop-color="#888a93"/><stop offset="0.357" stop-color="#878992"/><stop offset="0.381" stop-color="#868891"/><stop offset="0.405" stop-color="#868790"/><stop offset="0.429" stop-color="#87888e"/><stop offset="0.452" stop-color="#88888d"/><stop offset="0.476" stop-color="#89888c"/><stop offset="0.500" stop-color="#8b888b"/><stop offset="0.524" stop-color="#8b888b"/><stop offset="0.548" stop-color="#8a898b"/><stop offset="0.571" stop-color="#89898c"/><stop offset="0.595" stop-color="#88898c"/><stop offset="0.619" stop-color="#88898c"/><stop offset="0.643" stop-color="#87888b"/><stop offset="0.667" stop-color="#86888a"/><stop offset="0.690" stop-color="#88888a"/><stop offset="0.714" stop-color="#8a898a"/><stop offset="0.738" stop-color="#8c898a"/><stop offset="0.762" stop-color="#8e8a8a"/><stop offset="0.786" stop-color="#8f8b8a"/><stop offset="0.810" stop-color="#918b89"/><stop offset="0.833" stop-color="#948b87"/><stop offset="0.857" stop-color="#968b85"/><stop offset="0.881" stop-color="#958b86"/><stop offset="0.905" stop-color="#958b87"/><stop offset="0.929" stop-color="#978e89"/><stop offset="0.952" stop-color="#99918b"/><stop offset="0.976" stop-color="#9a938c"/><stop offset="1.000" stop-color="#9a938c"/></linearGradient><linearGradient id="bu14" gradientUnits="userSpaceOnUse" x1="580" y1="0" x2="1210" y2="0"><stop offset="0.000" stop-color="#979393"/><stop offset="0.024" stop-color="#979393"/><stop offset="0.048" stop-color="#979393"/><stop offset="0.071" stop-color="#979393"/><stop offset="0.095" stop-color="#969293"/><stop offset="0.119" stop-color="#959292"/><stop offset="0.143" stop-color="#939192"/><stop offset="0.167" stop-color="#929192"/><stop offset="0.190" stop-color="#909092"/><stop offset="0.214" stop-color="#8f8f92"/><stop offset="0.238" stop-color="#8e8e92"/><stop offset="0.262" stop-color="#8c8c92"/><stop offset="0.286" stop-color="#8b8b92"/><stop offset="0.310" stop-color="#8b8b90"/><stop offset="0.333" stop-color="#8b8b8f"/><stop offset="0.357" stop-color="#8a8a8e"/><stop offset="0.381" stop-color="#8a8a8d"/><stop offset="0.405" stop-color="#8a8a8b"/><stop offset="0.429" stop-color="#8b8889"/><stop offset="0.452" stop-color="#8c8786"/><stop offset="0.476" stop-color="#8d8584"/><stop offset="0.500" stop-color="#8e8481"/><stop offset="0.524" stop-color="#8e8481"/><stop offset="0.548" stop-color="#8d8482"/><stop offset="0.571" stop-color="#8d8584"/><stop offset="0.595" stop-color="#8c8685"/><stop offset="0.619" stop-color="#8b8786"/><stop offset="0.643" stop-color="#8b8987"/><stop offset="0.667" stop-color="#8a8a88"/><stop offset="0.690" stop-color="#8b8988"/><stop offset="0.714" stop-color="#8b8888"/><stop offset="0.738" stop-color="#8c8888"/><stop offset="0.762" stop-color="#8e8988"/><stop offset="0.786" stop-color="#8f8a89"/><stop offset="0.810" stop-color="#918a88"/><stop offset="0.833" stop-color="#938a86"/><stop offset="0.857" stop-color="#958a84"/><stop offset="0.881" stop-color="#958a85"/><stop offset="0.905" stop-color="#948b87"/><stop offset="0.929" stop-color="#958d88"/><stop offset="0.952" stop-color="#978f8a"/><stop offset="0.976" stop-color="#98918b"/><stop offset="1.000" stop-color="#98918b"/></linearGradient><linearGradient id="bu15" gradientUnits="userSpaceOnUse" x1="580" y1="0" x2="1210" y2="0"><stop offset="0.000" stop-color="#959294"/><stop offset="0.024" stop-color="#959294"/><stop offset="0.048" stop-color="#959294"/><stop offset="0.071" stop-color="#959294"/><stop offset="0.095" stop-color="#949293"/><stop offset="0.119" stop-color="#939192"/><stop offset="0.143" stop-color="#919091"/><stop offset="0.167" stop-color="#908f91"/><stop offset="0.190" stop-color="#8f8f90"/><stop offset="0.214" stop-color="#8e8e8f"/><stop offset="0.238" stop-color="#8d8c8f"/><stop offset="0.262" stop-color="#8c8b8e"/><stop offset="0.286" stop-color="#8c8a8e"/><stop offset="0.310" stop-color="#8c898b"/><stop offset="0.333" stop-color="#8d8889"/><stop offset="0.357" stop-color="#8d8787"/><stop offset="0.381" stop-color="#8d8684"/><stop offset="0.405" stop-color="#8e8482"/><stop offset="0.429" stop-color="#8f837f"/><stop offset="0.452" stop-color="#8f827d"/><stop offset="0.476" stop-color="#90817a"/><stop offset="0.500" stop-color="#917f78"/><stop offset="0.524" stop-color="#917f78"/><stop offset="0.548" stop-color="#908079"/><stop offset="0.571" stop-color="#90807b"/><stop offset="0.595" stop-color="#8f817c"/><stop offset="0.619" stop-color="#8e827d"/><stop offset="0.643" stop-color="#8e837e"/><stop offset="0.667" stop-color="#8d847f"/><stop offset="0.690" stop-color="#8c8582"/><stop offset="0.714" stop-color="#8c8684"/><stop offset="0.738" stop-color="#8c8785"/><stop offset="0.762" stop-color="#8e8887"/><stop offset="0.786" stop-color="#8f8a88"/><stop offset="0.810" stop-color="#918a87"/><stop offset="0.833" stop-color="#938a85"/><stop offset="0.857" stop-color="#958982"/><stop offset="0.881" stop-color="#948a85"/><stop offset="0.905" stop-color="#928b87"/><stop offset="0.929" stop-color="#938c88"/><stop offset="0.952" stop-color="#948d88"/><stop offset="0.976" stop-color="#958e89"/><stop offset="1.000" stop-color="#958e89"/></linearGradient><linearGradient id="bu16" gradientUnits="userSpaceOnUse" x1="580" y1="0" x2="1210" y2="0"><stop offset="0.000" stop-color="#939295"/><stop offset="0.024" stop-color="#939295"/><stop offset="0.048" stop-color="#939295"/><stop offset="0.071" stop-color="#939295"/><stop offset="0.095" stop-color="#929194"/><stop offset="0.119" stop-color="#919092"/><stop offset="0.143" stop-color="#908f91"/><stop offset="0.167" stop-color="#8e8e8f"/><stop offset="0.190" stop-color="#8d8d8e"/><stop offset="0.214" stop-color="#8d8c8c"/><stop offset="0.238" stop-color="#8e8b8b"/><stop offset="0.262" stop-color="#8e898a"/><stop offset="0.286" stop-color="#8e8888"/><stop offset="0.310" stop-color="#8f8685"/><stop offset="0.333" stop-color="#8f8482"/><stop offset="0.357" stop-color="#90837f"/><stop offset="0.381" stop-color="#91817c"/><stop offset="0.405" stop-color="#917f79"/><stop offset="0.429" stop-color="#927e76"/><stop offset="0.452" stop-color="#927d74"/><stop offset="0.476" stop-color="#937c71"/><stop offset="0.500" stop-color="#947b6e"/><stop offset="0.524" stop-color="#937a6e"/><stop offset="0.548" stop-color="#937a70"/><stop offset="0.571" stop-color="#927b72"/><stop offset="0.595" stop-color="#927b73"/><stop offset="0.619" stop-color="#917c74"/><stop offset="0.643" stop-color="#907d76"/><stop offset="0.667" stop-color="#907f77"/><stop offset="0.690" stop-color="#8f817a"/><stop offset="0.714" stop-color="#8e837e"/><stop offset="0.738" stop-color="#8e8581"/><stop offset="0.762" stop-color="#8f8682"/><stop offset="0.786" stop-color="#918884"/><stop offset="0.810" stop-color="#928984"/><stop offset="0.833" stop-color="#948982"/><stop offset="0.857" stop-color="#958981"/><stop offset="0.881" stop-color="#938984"/><stop offset="0.905" stop-color="#918a86"/><stop offset="0.929" stop-color="#918b87"/><stop offset="0.952" stop-color="#928b87"/><stop offset="0.976" stop-color="#928c87"/><stop offset="1.000" stop-color="#928c87"/></linearGradient><linearGradient id="bu17" gradientUnits="userSpaceOnUse" x1="580" y1="0" x2="1210" y2="0"><stop offset="0.000" stop-color="#919196"/><stop offset="0.024" stop-color="#919196"/><stop offset="0.048" stop-color="#919196"/><stop offset="0.071" stop-color="#919196"/><stop offset="0.095" stop-color="#919195"/><stop offset="0.119" stop-color="#909092"/><stop offset="0.143" stop-color="#8f8e90"/><stop offset="0.167" stop-color="#8e8d8e"/><stop offset="0.190" stop-color="#8d8c8b"/><stop offset="0.214" stop-color="#8e8a89"/><stop offset="0.238" stop-color="#8f8887"/><stop offset="0.262" stop-color="#908784"/><stop offset="0.286" stop-color="#918582"/><stop offset="0.310" stop-color="#92837e"/><stop offset="0.333" stop-color="#93807b"/><stop offset="0.357" stop-color="#947e77"/><stop offset="0.381" stop-color="#947c73"/><stop offset="0.405" stop-color="#957a70"/><stop offset="0.429" stop-color="#95796d"/><stop offset="0.452" stop-color="#96786a"/><stop offset="0.476" stop-color="#967767"/><stop offset="0.500" stop-color="#967665"/><stop offset="0.524" stop-color="#967665"/><stop offset="0.548" stop-color="#967667"/><stop offset="0.571" stop-color="#957568"/><stop offset="0.595" stop-color="#95766a"/><stop offset="0.619" stop-color="#94776c"/><stop offset="0.643" stop-color="#93786d"/><stop offset="0.667" stop-color="#93796e"/><stop offset="0.690" stop-color="#917c73"/><stop offset="0.714" stop-color="#907f77"/><stop offset="0.738" stop-color="#90827b"/><stop offset="0.762" stop-color="#92847c"/><stop offset="0.786" stop-color="#93867e"/><stop offset="0.810" stop-color="#94877f"/><stop offset="0.833" stop-color="#958780"/><stop offset="0.857" stop-color="#958880"/><stop offset="0.881" stop-color="#928984"/><stop offset="0.905" stop-color="#908a87"/><stop offset="0.929" stop-color="#908a87"/><stop offset="0.952" stop-color="#908a87"/><stop offset="0.976" stop-color="#908a87"/><stop offset="1.000" stop-color="#908a87"/></linearGradient><linearGradient id="bu18" gradientUnits="userSpaceOnUse" x1="580" y1="0" x2="1210" y2="0"><stop offset="0.000" stop-color="#8f9196"/><stop offset="0.024" stop-color="#8f9196"/><stop offset="0.048" stop-color="#8f9196"/><stop offset="0.071" stop-color="#8f9196"/><stop offset="0.095" stop-color="#8f9095"/><stop offset="0.119" stop-color="#8f8f92"/><stop offset="0.143" stop-color="#8f8d8e"/><stop offset="0.167" stop-color="#8f8c8b"/><stop offset="0.190" stop-color="#8f8a87"/><stop offset="0.214" stop-color="#918884"/><stop offset="0.238" stop-color="#928681"/><stop offset="0.262" stop-color="#94847f"/><stop offset="0.286" stop-color="#95827c"/><stop offset="0.310" stop-color="#967f77"/><stop offset="0.333" stop-color="#967c73"/><stop offset="0.357" stop-color="#977a6f"/><stop offset="0.381" stop-color="#98776a"/><stop offset="0.405" stop-color="#987567"/><stop offset="0.429" stop-color="#997464"/><stop offset="0.452" stop-color="#997361"/><stop offset="0.476" stop-color="#99725e"/><stop offset="0.500" stop-color="#99715b"/><stop offset="0.524" stop-color="#99715b"/><stop offset="0.548" stop-color="#99705d"/><stop offset="0.571" stop-color="#98705f"/><stop offset="0.595" stop-color="#987061"/><stop offset="0.619" stop-color="#977163"/><stop offset="0.643" stop-color="#967264"/><stop offset="0.667" stop-color="#957366"/><stop offset="0.690" stop-color="#94776b"/><stop offset="0.714" stop-color="#937c70"/><stop offset="0.738" stop-color="#927f75"/><stop offset="0.762" stop-color="#948177"/><stop offset="0.786" stop-color="#968378"/><stop offset="0.810" stop-color="#96857b"/><stop offset="0.833" stop-color="#95877e"/><stop offset="0.857" stop-color="#958981"/><stop offset="0.881" stop-color="#928a86"/><stop offset="0.905" stop-color="#8e8c8b"/><stop offset="0.929" stop-color="#8e8c8b"/><stop offset="0.952" stop-color="#8e8c8b"/><stop offset="0.976" stop-color="#8e8c8b"/><stop offset="1.000" stop-color="#8e8c8b"/></linearGradient><linearGradient id="bu19" gradientUnits="userSpaceOnUse" x1="580" y1="0" x2="1210" y2="0"><stop offset="0.000" stop-color="#8d9097"/><stop offset="0.024" stop-color="#8d9097"/><stop offset="0.048" stop-color="#8d9097"/><stop offset="0.071" stop-color="#8d9097"/><stop offset="0.095" stop-color="#8e9096"/><stop offset="0.119" stop-color="#8f8e91"/><stop offset="0.143" stop-color="#908c8d"/><stop offset="0.167" stop-color="#918a88"/><stop offset="0.190" stop-color="#928883"/><stop offset="0.214" stop-color="#948680"/><stop offset="0.238" stop-color="#95837c"/><stop offset="0.262" stop-color="#978179"/><stop offset="0.286" stop-color="#987f75"/><stop offset="0.310" stop-color="#997c70"/><stop offset="0.333" stop-color="#9a786c"/><stop offset="0.357" stop-color="#9b7567"/><stop offset="0.381" stop-color="#9b7262"/><stop offset="0.405" stop-color="#9c6f5d"/><stop offset="0.429" stop-color="#9a6d5a"/><stop offset="0.452" stop-color="#996b57"/><stop offset="0.476" stop-color="#986954"/><stop offset="0.500" stop-color="#976651"/><stop offset="0.524" stop-color="#976651"/><stop offset="0.548" stop-color="#986753"/><stop offset="0.571" stop-color="#986856"/><stop offset="0.595" stop-color="#986958"/><stop offset="0.619" stop-color="#986b5a"/><stop offset="0.643" stop-color="#986c5b"/><stop offset="0.667" stop-color="#986d5d"/><stop offset="0.690" stop-color="#977363"/><stop offset="0.714" stop-color="#95786a"/><stop offset="0.738" stop-color="#947c6e"/><stop offset="0.762" stop-color="#967f71"/><stop offset="0.786" stop-color="#988173"/><stop offset="0.810" stop-color="#988377"/><stop offset="0.833" stop-color="#96867d"/><stop offset="0.857" stop-color="#958982"/><stop offset="0.881" stop-color="#918b89"/><stop offset="0.905" stop-color="#8d8d8f"/><stop offset="0.929" stop-color="#8d8d8f"/><stop offset="0.952" stop-color="#8d8d8f"/><stop offset="0.976" stop-color="#8d8d8f"/><stop offset="1.000" stop-color="#8d8d8f"/></linearGradient><linearGradient id="bu20" gradientUnits="userSpaceOnUse" x1="580" y1="0" x2="1210" y2="0"><stop offset="0.000" stop-color="#8c9098"/><stop offset="0.024" stop-color="#8c9098"/><stop offset="0.048" stop-color="#8c9098"/><stop offset="0.071" stop-color="#8c9098"/><stop offset="0.095" stop-color="#8d8f96"/><stop offset="0.119" stop-color="#8f8d90"/><stop offset="0.143" stop-color="#918b8a"/><stop offset="0.167" stop-color="#938985"/><stop offset="0.190" stop-color="#95877f"/><stop offset="0.214" stop-color="#97847b"/><stop offset="0.238" stop-color="#988177"/><stop offset="0.262" stop-color="#9a7e73"/><stop offset="0.286" stop-color="#9c7c6f"/><stop offset="0.310" stop-color="#9d786a"/><stop offset="0.333" stop-color="#9d7464"/><stop offset="0.357" stop-color="#9e715f"/><stop offset="0.381" stop-color="#9f6d59"/><stop offset="0.405" stop-color="#9f6a54"/><stop offset="0.429" stop-color="#9c6651"/><stop offset="0.452" stop-color="#99624d"/><stop offset="0.476" stop-color="#975e4a"/><stop offset="0.500" stop-color="#945a46"/><stop offset="0.524" stop-color="#935946"/><stop offset="0.548" stop-color="#935a48"/><stop offset="0.571" stop-color="#925b4a"/><stop offset="0.595" stop-color="#935c4c"/><stop offset="0.619" stop-color="#945f4f"/><stop offset="0.643" stop-color="#956251"/><stop offset="0.667" stop-color="#976554"/><stop offset="0.690" stop-color="#966b5a"/><stop offset="0.714" stop-color="#947160"/><stop offset="0.738" stop-color="#957665"/><stop offset="0.762" stop-color="#987867"/><stop offset="0.786" stop-color="#9a7b6a"/><stop offset="0.810" stop-color="#9a8070"/><stop offset="0.833" stop-color="#97857a"/><stop offset="0.857" stop-color="#958a83"/><stop offset="0.881" stop-color="#908c8b"/><stop offset="0.905" stop-color="#8b8f94"/><stop offset="0.929" stop-color="#8b8f94"/><stop offset="0.952" stop-color="#8b8f94"/><stop offset="0.976" stop-color="#8b8f94"/><stop offset="1.000" stop-color="#8b8f94"/></linearGradient><linearGradient id="bu21" gradientUnits="userSpaceOnUse" x1="580" y1="0" x2="1210" y2="0"><stop offset="0.000" stop-color="#8c8f96"/><stop offset="0.024" stop-color="#8c8f96"/><stop offset="0.048" stop-color="#8c8f96"/><stop offset="0.071" stop-color="#8c8f96"/><stop offset="0.095" stop-color="#8d8e94"/><stop offset="0.119" stop-color="#8f8c8e"/><stop offset="0.143" stop-color="#928a88"/><stop offset="0.167" stop-color="#958781"/><stop offset="0.190" stop-color="#98857b"/><stop offset="0.214" stop-color="#9a8277"/><stop offset="0.238" stop-color="#9c7f72"/><stop offset="0.262" stop-color="#9d7c6d"/><stop offset="0.286" stop-color="#9f7869"/><stop offset="0.310" stop-color="#a07463"/><stop offset="0.333" stop-color="#a1705e"/><stop offset="0.357" stop-color="#a16b58"/><stop offset="0.381" stop-color="#a26752"/><stop offset="0.405" stop-color="#a1624d"/><stop offset="0.429" stop-color="#9d5d49"/><stop offset="0.452" stop-color="#995845"/><stop offset="0.476" stop-color="#955340"/><stop offset="0.500" stop-color="#914e3c"/><stop offset="0.524" stop-color="#8f4c3c"/><stop offset="0.548" stop-color="#8e4d3d"/><stop offset="0.571" stop-color="#8d4e3e"/><stop offset="0.595" stop-color="#8c4f40"/><stop offset="0.619" stop-color="#8d5243"/><stop offset="0.643" stop-color="#8e5647"/><stop offset="0.667" stop-color="#8f594a"/><stop offset="0.690" stop-color="#8f5e4f"/><stop offset="0.714" stop-color="#906354"/><stop offset="0.738" stop-color="#926858"/><stop offset="0.762" stop-color="#986d59"/><stop offset="0.786" stop-color="#9d715b"/><stop offset="0.810" stop-color="#9c7866"/><stop offset="0.833" stop-color="#998175"/><stop offset="0.857" stop-color="#958a84"/><stop offset="0.881" stop-color="#908d8e"/><stop offset="0.905" stop-color="#8a9098"/><stop offset="0.929" stop-color="#8a9098"/><stop offset="0.952" stop-color="#8a9098"/><stop offset="0.976" stop-color="#8a9098"/><stop offset="1.000" stop-color="#8a9098"/></linearGradient><linearGradient id="bu22" gradientUnits="userSpaceOnUse" x1="580" y1="0" x2="1210" y2="0"><stop offset="0.000" stop-color="#8b8f95"/><stop offset="0.024" stop-color="#8b8f95"/><stop offset="0.048" stop-color="#8b8f95"/><stop offset="0.071" stop-color="#8b8f95"/><stop offset="0.095" stop-color="#8d8e93"/><stop offset="0.119" stop-color="#908b8c"/><stop offset="0.143" stop-color="#948885"/><stop offset="0.167" stop-color="#97867e"/><stop offset="0.190" stop-color="#9b8377"/><stop offset="0.214" stop-color="#9d8072"/><stop offset="0.238" stop-color="#9f7c6d"/><stop offset="0.262" stop-color="#a17968"/><stop offset="0.286" stop-color="#a37563"/><stop offset="0.310" stop-color="#a3705d"/><stop offset="0.333" stop-color="#a46b57"/><stop offset="0.357" stop-color="#a46552"/><stop offset="0.381" stop-color="#a5604c"/><stop offset="0.405" stop-color="#a35a46"/><stop offset="0.429" stop-color="#9e5441"/><stop offset="0.452" stop-color="#984e3c"/><stop offset="0.476" stop-color="#934737"/><stop offset="0.500" stop-color="#8d4132"/><stop offset="0.524" stop-color="#8a3f31"/><stop offset="0.548" stop-color="#894032"/><stop offset="0.571" stop-color="#874033"/><stop offset="0.595" stop-color="#864235"/><stop offset="0.619" stop-color="#864638"/><stop offset="0.643" stop-color="#86493c"/><stop offset="0.667" stop-color="#864d40"/><stop offset="0.690" stop-color="#895143"/><stop offset="0.714" stop-color="#8b5647"/><stop offset="0.738" stop-color="#955e4b"/><stop offset="0.762" stop-color="#ae6d51"/><stop offset="0.786" stop-color="#c87c57"/><stop offset="0.810" stop-color="#d08a65"/><stop offset="0.833" stop-color="#d09977"/><stop offset="0.857" stop-color="#d1a989"/><stop offset="0.881" stop-color="#d0b195"/><stop offset="0.905" stop-color="#cfb9a1"/><stop offset="0.929" stop-color="#cdbba7"/><stop offset="0.952" stop-color="#cabeac"/><stop offset="0.976" stop-color="#c8c0b0"/><stop offset="1.000" stop-color="#c8c0b0"/></linearGradient><linearGradient id="bu23" gradientUnits="userSpaceOnUse" x1="580" y1="0" x2="1210" y2="0"><stop offset="0.000" stop-color="#8b8e94"/><stop offset="0.024" stop-color="#8b8e94"/><stop offset="0.048" stop-color="#8b8e94"/><stop offset="0.071" stop-color="#8b8e94"/><stop offset="0.095" stop-color="#8c8d92"/><stop offset="0.119" stop-color="#918a8a"/><stop offset="0.143" stop-color="#958782"/><stop offset="0.167" stop-color="#99847b"/><stop offset="0.190" stop-color="#9e8173"/><stop offset="0.214" stop-color="#a07d6e"/><stop offset="0.238" stop-color="#a27968"/><stop offset="0.262" stop-color="#a57562"/><stop offset="0.286" stop-color="#a7715d"/><stop offset="0.310" stop-color="#a76b57"/><stop offset="0.333" stop-color="#a76551"/><stop offset="0.357" stop-color="#a85f4b"/><stop offset="0.381" stop-color="#a85946"/><stop offset="0.405" stop-color="#a7503f"/><stop offset="0.429" stop-color="#a44138"/><stop offset="0.452" stop-color="#a13231"/><stop offset="0.476" stop-color="#9e242a"/><stop offset="0.500" stop-color="#9b1522"/><stop offset="0.524" stop-color="#951721"/><stop offset="0.548" stop-color="#8e2124"/><stop offset="0.571" stop-color="#872c26"/><stop offset="0.595" stop-color="#823429"/><stop offset="0.619" stop-color="#81382d"/><stop offset="0.643" stop-color="#7f3c31"/><stop offset="0.667" stop-color="#7e4035"/><stop offset="0.690" stop-color="#8e4838"/><stop offset="0.714" stop-color="#9e503b"/><stop offset="0.738" stop-color="#ae5b41"/><stop offset="0.762" stop-color="#bd6c4d"/><stop offset="0.786" stop-color="#cc7d59"/><stop offset="0.810" stop-color="#d28d68"/><stop offset="0.833" stop-color="#d29b79"/><stop offset="0.857" stop-color="#d2aa8a"/><stop offset="0.881" stop-color="#d0b297"/><stop offset="0.905" stop-color="#cebaa4"/><stop offset="0.929" stop-color="#ccbca8"/><stop offset="0.952" stop-color="#cabead"/><stop offset="0.976" stop-color="#c8c0b0"/><stop offset="1.000" stop-color="#c8c0b0"/></linearGradient><linearGradient id="bu24" gradientUnits="userSpaceOnUse" x1="580" y1="0" x2="1210" y2="0"><stop offset="0.000" stop-color="#8b8d93"/><stop offset="0.024" stop-color="#8b8d93"/><stop offset="0.048" stop-color="#8b8d93"/><stop offset="0.071" stop-color="#8b8d93"/><stop offset="0.095" stop-color="#8c8c90"/><stop offset="0.119" stop-color="#918988"/><stop offset="0.143" stop-color="#96867f"/><stop offset="0.167" stop-color="#9b8277"/><stop offset="0.190" stop-color="#a07f6f"/><stop offset="0.214" stop-color="#a37a69"/><stop offset="0.238" stop-color="#a67663"/><stop offset="0.262" stop-color="#a9715d"/><stop offset="0.286" stop-color="#ac6c57"/><stop offset="0.310" stop-color="#ab6651"/><stop offset="0.333" stop-color="#ab5f4b"/><stop offset="0.357" stop-color="#ab5845"/><stop offset="0.381" stop-color="#ab523f"/><stop offset="0.405" stop-color="#aa4939"/><stop offset="0.429" stop-color="#a53b33"/><stop offset="0.452" stop-color="#a12e2d"/><stop offset="0.476" stop-color="#9c2027"/><stop offset="0.500" stop-color="#981320"/><stop offset="0.524" stop-color="#99121f"/><stop offset="0.548" stop-color="#9b1721"/><stop offset="0.571" stop-color="#9e1c23"/><stop offset="0.595" stop-color="#a02224"/><stop offset="0.619" stop-color="#a12926"/><stop offset="0.643" stop-color="#a13127"/><stop offset="0.667" stop-color="#a13829"/><stop offset="0.690" stop-color="#ad4530"/><stop offset="0.714" stop-color="#b95237"/><stop offset="0.738" stop-color="#c36040"/><stop offset="0.762" stop-color="#ca704e"/><stop offset="0.786" stop-color="#d1805c"/><stop offset="0.810" stop-color="#d38f6b"/><stop offset="0.833" stop-color="#d39d7b"/><stop offset="0.857" stop-color="#d3ab8b"/><stop offset="0.881" stop-color="#d0b399"/><stop offset="0.905" stop-color="#cdbba6"/><stop offset="0.929" stop-color="#cbbdaa"/><stop offset="0.952" stop-color="#c9bfae"/><stop offset="0.976" stop-color="#c8c0b0"/><stop offset="1.000" stop-color="#c8c0b0"/></linearGradient><linearGradient id="bu25" gradientUnits="userSpaceOnUse" x1="580" y1="0" x2="1210" y2="0"><stop offset="0.000" stop-color="#8a8d92"/><stop offset="0.024" stop-color="#8a8d92"/><stop offset="0.048" stop-color="#8a8d92"/><stop offset="0.071" stop-color="#8a8d92"/><stop offset="0.095" stop-color="#8c8b8f"/><stop offset="0.119" stop-color="#918785"/><stop offset="0.143" stop-color="#96837b"/><stop offset="0.167" stop-color="#9b7f71"/><stop offset="0.190" stop-color="#a07a67"/><stop offset="0.214" stop-color="#a47662"/><stop offset="0.238" stop-color="#a8715c"/><stop offset="0.262" stop-color="#ac6c57"/><stop offset="0.286" stop-color="#b06851"/><stop offset="0.310" stop-color="#b0604b"/><stop offset="0.333" stop-color="#af5945"/><stop offset="0.357" stop-color="#af523f"/><stop offset="0.381" stop-color="#ae4b39"/><stop offset="0.405" stop-color="#ac4233"/><stop offset="0.429" stop-color="#a6352e"/><stop offset="0.452" stop-color="#a12929"/><stop offset="0.476" stop-color="#9b1d24"/><stop offset="0.500" stop-color="#95111e"/><stop offset="0.524" stop-color="#96101e"/><stop offset="0.548" stop-color="#9a1620"/><stop offset="0.571" stop-color="#9e1b21"/><stop offset="0.595" stop-color="#a12123"/><stop offset="0.619" stop-color="#a42925"/><stop offset="0.643" stop-color="#a73127"/><stop offset="0.667" stop-color="#aa3828"/><stop offset="0.690" stop-color="#b34630"/><stop offset="0.714" stop-color="#bd5337"/><stop offset="0.738" stop-color="#c56241"/><stop offset="0.762" stop-color="#cc7250"/><stop offset="0.786" stop-color="#d2835f"/><stop offset="0.810" stop-color="#d4916e"/><stop offset="0.833" stop-color="#d49f7d"/><stop offset="0.857" stop-color="#d4ac8c"/><stop offset="0.881" stop-color="#d0b49a"/><stop offset="0.905" stop-color="#ccbca9"/><stop offset="0.929" stop-color="#cabeab"/><stop offset="0.952" stop-color="#c9bfae"/><stop offset="0.976" stop-color="#c8c0b0"/><stop offset="1.000" stop-color="#c8c0b0"/></linearGradient><linearGradient id="bu26" gradientUnits="userSpaceOnUse" x1="580" y1="0" x2="1210" y2="0"><stop offset="0.000" stop-color="#8a8c91"/><stop offset="0.024" stop-color="#8a8c91"/><stop offset="0.048" stop-color="#8a8c91"/><stop offset="0.071" stop-color="#8a8c91"/><stop offset="0.095" stop-color="#8c8b8d"/><stop offset="0.119" stop-color="#918582"/><stop offset="0.143" stop-color="#968077"/><stop offset="0.167" stop-color="#9b7b6b"/><stop offset="0.190" stop-color="#a07660"/><stop offset="0.214" stop-color="#a5715b"/><stop offset="0.238" stop-color="#ab6c56"/><stop offset="0.262" stop-color="#b06851"/><stop offset="0.286" stop-color="#b5634b"/><stop offset="0.310" stop-color="#b45b45"/><stop offset="0.333" stop-color="#b3533f"/><stop offset="0.357" stop-color="#b24b39"/><stop offset="0.381" stop-color="#b14332"/><stop offset="0.405" stop-color="#ae3a2d"/><stop offset="0.429" stop-color="#a72f29"/><stop offset="0.452" stop-color="#a02425"/><stop offset="0.476" stop-color="#991a21"/><stop offset="0.500" stop-color="#930f1d"/><stop offset="0.524" stop-color="#930f1c"/><stop offset="0.548" stop-color="#98141e"/><stop offset="0.571" stop-color="#9d1a20"/><stop offset="0.595" stop-color="#a12123"/><stop offset="0.619" stop-color="#a52925"/><stop offset="0.643" stop-color="#a83127"/><stop offset="0.667" stop-color="#ac3929"/><stop offset="0.690" stop-color="#b54731"/><stop offset="0.714" stop-color="#be5438"/><stop offset="0.738" stop-color="#c76343"/><stop offset="0.762" stop-color="#cd7453"/><stop offset="0.786" stop-color="#d38563"/><stop offset="0.810" stop-color="#d59372"/><stop offset="0.833" stop-color="#d5a080"/><stop offset="0.857" stop-color="#d6ae8e"/><stop offset="0.881" stop-color="#d0b69c"/><stop offset="0.905" stop-color="#cabeab"/><stop offset="0.929" stop-color="#cabead"/><stop offset="0.952" stop-color="#c9bfaf"/><stop offset="0.976" stop-color="#c8c0b0"/><stop offset="1.000" stop-color="#c8c0b0"/></linearGradient><linearGradient id="bu27" gradientUnits="userSpaceOnUse" x1="580" y1="0" x2="1210" y2="0"><stop offset="0.000" stop-color="#818183"/><stop offset="0.024" stop-color="#818183"/><stop offset="0.048" stop-color="#818183"/><stop offset="0.071" stop-color="#818183"/><stop offset="0.095" stop-color="#837f80"/><stop offset="0.119" stop-color="#8a7c76"/><stop offset="0.143" stop-color="#92786c"/><stop offset="0.167" stop-color="#997463"/><stop offset="0.190" stop-color="#a07159"/><stop offset="0.214" stop-color="#a76c54"/><stop offset="0.238" stop-color="#ad674e"/><stop offset="0.262" stop-color="#b46249"/><stop offset="0.286" stop-color="#ba5e43"/><stop offset="0.310" stop-color="#b8553d"/><stop offset="0.333" stop-color="#b64c37"/><stop offset="0.357" stop-color="#b44331"/><stop offset="0.381" stop-color="#b13a2b"/><stop offset="0.405" stop-color="#ae3126"/><stop offset="0.429" stop-color="#a62823"/><stop offset="0.452" stop-color="#9f1f20"/><stop offset="0.476" stop-color="#97161d"/><stop offset="0.500" stop-color="#900d1b"/><stop offset="0.524" stop-color="#910d1b"/><stop offset="0.548" stop-color="#97131d"/><stop offset="0.571" stop-color="#9c191f"/><stop offset="0.595" stop-color="#a12022"/><stop offset="0.619" stop-color="#a62824"/><stop offset="0.643" stop-color="#aa3127"/><stop offset="0.667" stop-color="#ae3929"/><stop offset="0.690" stop-color="#b74731"/><stop offset="0.714" stop-color="#c05539"/><stop offset="0.738" stop-color="#c86544"/><stop offset="0.762" stop-color="#cf7655"/><stop offset="0.786" stop-color="#d58866"/><stop offset="0.810" stop-color="#d79675"/><stop offset="0.833" stop-color="#d7a282"/><stop offset="0.857" stop-color="#d7af8f"/><stop offset="0.881" stop-color="#d0b79e"/><stop offset="0.905" stop-color="#c9bfae"/><stop offset="0.929" stop-color="#c9bfae"/><stop offset="0.952" stop-color="#c8c0af"/><stop offset="0.976" stop-color="#c8c0b0"/><stop offset="1.000" stop-color="#c8c0b0"/></linearGradient><linearGradient id="bu28" gradientUnits="userSpaceOnUse" x1="580" y1="0" x2="1210" y2="0"><stop offset="0.000" stop-color="#6a6462"/><stop offset="0.024" stop-color="#6a6462"/><stop offset="0.048" stop-color="#6a6462"/><stop offset="0.071" stop-color="#6a6462"/><stop offset="0.095" stop-color="#69625f"/><stop offset="0.119" stop-color="#675b58"/><stop offset="0.143" stop-color="#655550"/><stop offset="0.167" stop-color="#624e48"/><stop offset="0.190" stop-color="#604840"/><stop offset="0.214" stop-color="#784c3e"/><stop offset="0.238" stop-color="#90503c"/><stop offset="0.262" stop-color="#a8543a"/><stop offset="0.286" stop-color="#c05838"/><stop offset="0.310" stop-color="#bd4e33"/><stop offset="0.333" stop-color="#b9442e"/><stop offset="0.357" stop-color="#b63a29"/><stop offset="0.381" stop-color="#b23123"/><stop offset="0.405" stop-color="#ad281f"/><stop offset="0.429" stop-color="#a5201e"/><stop offset="0.452" stop-color="#9d191c"/><stop offset="0.476" stop-color="#95121a"/><stop offset="0.500" stop-color="#8d0a19"/><stop offset="0.524" stop-color="#8e0c1a"/><stop offset="0.548" stop-color="#95121c"/><stop offset="0.571" stop-color="#9c181e"/><stop offset="0.595" stop-color="#a21f21"/><stop offset="0.619" stop-color="#a62824"/><stop offset="0.643" stop-color="#ab3127"/><stop offset="0.667" stop-color="#b03a2a"/><stop offset="0.690" stop-color="#b94832"/><stop offset="0.714" stop-color="#c2563a"/><stop offset="0.738" stop-color="#ca6646"/><stop offset="0.762" stop-color="#d07858"/><stop offset="0.786" stop-color="#d68a6a"/><stop offset="0.810" stop-color="#d89878"/><stop offset="0.833" stop-color="#d8a484"/><stop offset="0.857" stop-color="#d8b090"/><stop offset="0.881" stop-color="#d0b8a0"/><stop offset="0.905" stop-color="#c8c0b0"/><stop offset="0.929" stop-color="#c8c0b0"/><stop offset="0.952" stop-color="#c8c0b0"/><stop offset="0.976" stop-color="#c8c0b0"/><stop offset="1.000" stop-color="#c8c0b0"/></linearGradient></defs>
<g clip-path="url(#beamclip2)"><path d="M631.0 329.4 L635.0 330.9 644.1 336.6 652.9 342.8 661.7 348.9 670.5 355.1 679.3 361.3 688.2 367.4 697.0 373.6 705.8 379.7 714.7 385.8 723.6 391.8 732.6 397.7 741.7 403.5 750.8 409.2 760.0 414.8 769.3 420.2 778.6 425.4 788.1 430.5 797.8 435.3 807.5 439.8 817.4 444.1 827.4 448.0 837.6 451.5 847.9 454.5 858.3 457.1 868.9 459.1 879.5 460.6 890.3 461.3 901.0 461.4 911.7 460.7 922.4 459.3 932.9 457.1 943.3 454.2 953.4 450.5 963.2 446.2 972.8 441.2 982.0 435.7 990.9 429.7 999.6 423.4 1008.1 416.8 1016.4 410.0 1024.6 403.0 1032.6 395.8 1040.6 388.6 1048.5 381.3 1056.3 373.9 1064.1 366.5 1071.9 359.2 1079.8 351.8 1087.7 344.5 1095.7 337.3 1103.7 330.2 1112.0 323.3 1120.3 316.5 1128.9 310.1 1137.8 304.0 1147.1 298.6 1156.8 293.9 1166.9 290.3 1177.4 288.2 1186.9 291.5 1172.0 345.6 1163.6 352.0 1156.2 359.9 1148.8 367.6 1141.2 375.3 1133.6 382.9 1125.9 390.4 1118.1 397.8 1110.2 405.1 1102.1 412.3 1094.0 419.4 1085.7 426.3 1077.4 433.0 1068.9 439.6 1060.2 446.0 1051.4 452.3 1042.5 458.3 1033.4 464.0 1024.2 469.6 1014.8 474.8 1005.2 479.8 995.5 484.4 985.6 488.7 975.6 492.6 965.4 496.0 955.1 499.0 944.6 501.6 934.0 503.6 923.4 505.1 912.6 506.0 901.9 506.5 891.1 506.4 880.4 505.9 869.6 504.8 859.0 503.4 848.4 501.5 837.9 499.2 827.4 496.5 817.1 493.5 806.9 490.1 796.8 486.4 786.8 482.5 776.8 478.3 767.0 473.8 757.4 469.1 747.8 464.2 738.3 459.2 728.9 453.9 719.6 448.5 710.3 443.0 701.2 437.3 692.1 431.4 683.2 425.5 674.3 419.5 665.4 413.3 656.6 407.1 647.9 400.8 639.2 394.4 630.6 387.9 622.1 381.4 612.7 376.5 608.7 374.0 Z" fill="#8e8a8a"/>
<path d="M635.0 330.9 L644.1 336.6 652.9 342.8 661.7 348.9 670.5 355.1 679.3 361.3 688.2 367.4 697.0 373.6 705.8 379.7 714.7 385.8 723.6 391.8 732.6 397.7 741.7 403.5 750.8 409.2 760.0 414.8 769.3 420.2 778.6 425.4 788.1 430.5 797.8 435.3 807.5 439.8 817.4 444.1 827.4 448.0 837.6 451.5 847.9 454.5 858.3 457.1 868.9 459.1 879.5 460.6 890.3 461.3 901.0 461.4 911.7 460.7 922.4 459.3 932.9 457.1 943.3 454.2 953.4 450.5 963.2 446.2 972.8 441.2 982.0 435.7 990.9 429.7 999.6 423.4 1008.1 416.8 1016.4 410.0 1024.6 403.0 1032.6 395.8 1040.6 388.6 1048.5 381.3 1056.3 373.9 1064.1 366.5 1071.9 359.2 1079.8 351.8 1087.7 344.5 1095.7 337.3 1103.7 330.2 1112.0 323.3 1120.3 316.5 1128.9 310.1 1137.8 304.0 1147.1 298.6 1156.8 293.9 1166.9 290.3 1177.4 288.2 1186.9 291.5" fill="none" stroke="url(#bu0)" stroke-width="4.5"/>
<path d="M634.2 332.5 L643.3 338.2 652.1 344.4 660.9 350.5 669.7 356.7 678.5 362.9 687.3 369.1 696.2 375.2 705.0 381.3 713.9 387.4 722.8 393.4 731.8 399.3 740.9 405.1 750.0 410.8 759.2 416.4 768.5 421.8 777.9 427.0 787.4 432.0 797.0 436.8 806.8 441.4 816.7 445.6 826.7 449.5 836.8 453.0 847.2 456.0 857.6 458.6 868.2 460.6 878.8 462.1 889.5 462.9 900.3 463.0 911.0 462.4 921.7 461.0 932.2 458.9 942.6 456.0 952.7 452.4 962.6 448.2 972.1 443.3 981.4 437.9 990.4 432.0 999.1 425.8 1007.7 419.2 1016.0 412.5 1024.2 405.6 1032.3 398.5 1040.3 391.3 1048.2 384.0 1056.1 376.7 1064.0 369.4 1071.8 362.0 1079.7 354.7 1087.6 347.5 1095.6 340.3 1103.7 333.2 1111.9 326.2 1120.3 319.4 1128.8 312.9 1137.7 306.8 1146.9 301.3 1156.5 296.5 1166.5 292.8 1176.9 290.5 1186.4 293.4" fill="none" stroke="url(#bu1)" stroke-width="4.5"/>
<path d="M633.4 334.2 L642.5 339.8 651.3 346.0 660.1 352.2 668.9 358.4 677.7 364.5 686.5 370.7 695.4 376.9 704.2 383.0 713.1 389.0 722.0 395.0 731.0 400.9 740.1 406.7 749.2 412.4 758.4 417.9 767.7 423.3 777.1 428.6 786.6 433.6 796.3 438.4 806.0 442.9 815.9 447.1 825.9 451.0 836.1 454.5 846.4 457.5 856.9 460.1 867.4 462.2 878.1 463.6 888.8 464.4 899.5 464.6 910.3 464.0 920.9 462.7 931.5 460.6 941.8 457.8 952.0 454.3 961.9 450.1 971.5 445.4 980.8 440.0 989.8 434.2 998.6 428.1 1007.2 421.6 1015.6 415.0 1023.9 408.1 1032.0 401.1 1040.1 394.0 1048.0 386.8 1055.9 379.5 1063.8 372.2 1071.7 364.9 1079.6 357.6 1087.6 350.4 1095.6 343.2 1103.6 336.1 1111.8 329.1 1120.2 322.3 1128.7 315.8 1137.5 309.7 1146.7 304.0 1156.2 299.2 1166.1 295.3 1176.4 292.8 1185.8 295.4" fill="none" stroke="url(#bu2)" stroke-width="4.5"/>
<path d="M632.6 335.8 L641.7 341.4 650.5 347.6 659.3 353.8 668.1 360.0 676.9 366.2 685.7 372.4 694.5 378.5 703.4 384.6 712.3 390.6 721.2 396.6 730.2 402.5 739.3 408.3 748.4 414.0 757.6 419.5 767.0 424.9 776.4 430.1 785.9 435.1 795.5 439.9 805.3 444.4 815.2 448.6 825.2 452.5 835.4 456.0 845.7 459.0 856.1 461.6 866.7 463.7 877.3 465.1 888.1 466.0 898.8 466.2 909.5 465.6 920.2 464.4 930.8 462.3 941.1 459.6 951.3 456.2 961.2 452.1 970.9 447.4 980.2 442.2 989.3 436.5 998.1 430.4 1006.8 424.1 1015.2 417.5 1023.5 410.7 1031.7 403.7 1039.8 396.7 1047.8 389.5 1055.8 382.3 1063.7 375.1 1071.6 367.8 1079.5 360.5 1087.5 353.3 1095.5 346.1 1103.6 339.0 1111.8 332.0 1120.1 325.2 1128.6 318.7 1137.4 312.5 1146.5 306.8 1155.9 301.8 1165.7 297.8 1175.9 295.0 1185.3 297.3" fill="none" stroke="url(#bu3)" stroke-width="4.5"/>
<path d="M631.8 337.4 L640.9 343.0 649.7 349.2 658.5 355.4 667.3 361.6 676.1 367.8 684.9 374.0 693.7 380.1 702.6 386.2 711.5 392.3 720.4 398.3 729.4 404.1 738.5 409.9 747.6 415.6 756.9 421.1 766.2 426.5 775.6 431.7 785.1 436.7 794.8 441.4 804.5 445.9 814.4 450.1 824.5 454.0 834.7 457.5 845.0 460.5 855.4 463.1 866.0 465.2 876.6 466.7 887.3 467.6 898.1 467.7 908.8 467.2 919.5 466.0 930.0 464.1 940.4 461.4 950.6 458.1 960.6 454.1 970.2 449.5 979.6 444.3 988.7 438.7 997.6 432.7 1006.3 426.5 1014.8 420.0 1023.2 413.3 1031.4 406.4 1039.5 399.4 1047.6 392.3 1055.6 385.1 1063.6 377.9 1071.5 370.7 1079.4 363.4 1087.4 356.2 1095.4 349.0 1103.5 341.9 1111.7 335.0 1120.0 328.1 1128.5 321.6 1137.2 315.3 1146.2 309.5 1155.6 304.4 1165.4 300.2 1175.4 297.3 1184.8 299.2" fill="none" stroke="url(#bu4)" stroke-width="4.5"/>
<path d="M631.0 339.0 L640.1 344.6 648.9 350.8 657.7 357.0 666.5 363.3 675.3 369.5 684.1 375.6 692.9 381.8 701.8 387.9 710.7 393.9 719.6 399.9 728.6 405.8 737.7 411.5 746.9 417.2 756.1 422.7 765.4 428.1 774.8 433.2 784.4 438.2 794.0 443.0 803.8 447.4 813.7 451.6 823.7 455.5 833.9 459.0 844.2 462.0 854.7 464.6 865.2 466.7 875.9 468.2 886.6 469.1 897.3 469.3 908.1 468.9 918.7 467.7 929.3 465.8 939.7 463.2 949.9 460.0 959.9 456.1 969.6 451.5 979.0 446.5 988.2 441.0 997.1 435.1 1005.9 428.9 1014.4 422.5 1022.8 415.8 1031.1 409.0 1039.3 402.1 1047.4 395.0 1055.4 387.9 1063.4 380.7 1071.4 373.5 1079.4 366.3 1087.4 359.1 1095.4 352.0 1103.5 344.9 1111.6 337.9 1119.9 331.0 1128.4 324.4 1137.1 318.1 1146.0 312.3 1155.3 307.1 1165.0 302.7 1174.9 299.6 1184.2 301.2" fill="none" stroke="url(#bu5)" stroke-width="4.5"/>
<path d="M630.2 340.7 L639.4 346.2 648.1 352.4 656.9 358.7 665.7 364.9 674.5 371.1 683.3 377.3 692.1 383.4 701.0 389.5 709.9 395.5 718.8 401.5 727.8 407.4 736.9 413.1 746.1 418.8 755.3 424.3 764.6 429.6 774.1 434.8 783.6 439.8 793.3 444.5 803.1 449.0 813.0 453.1 823.0 457.0 833.2 460.5 843.5 463.5 853.9 466.1 864.5 468.2 875.1 469.7 885.8 470.7 896.6 470.9 907.3 470.5 918.0 469.4 928.6 467.6 939.0 465.1 949.2 461.9 959.2 458.0 969.0 453.6 978.4 448.6 987.6 443.2 996.6 437.4 1005.4 431.3 1014.0 424.9 1022.5 418.4 1030.8 411.6 1039.0 404.8 1047.2 397.8 1055.3 390.7 1063.3 383.6 1071.3 376.4 1079.3 369.2 1087.3 362.0 1095.3 354.9 1103.4 347.8 1111.6 340.8 1119.9 334.0 1128.3 327.3 1136.9 320.9 1145.8 315.0 1155.0 309.7 1164.6 305.2 1174.4 301.9 1183.7 303.1" fill="none" stroke="url(#bu6)" stroke-width="4.5"/>
<path d="M629.4 342.3 L638.6 347.8 647.3 354.1 656.1 360.3 664.9 366.5 673.7 372.7 682.5 378.9 691.3 385.1 700.2 391.1 709.1 397.2 718.0 403.1 727.0 409.0 736.1 414.7 745.3 420.4 754.5 425.9 763.9 431.2 773.3 436.4 782.9 441.3 792.5 446.0 802.3 450.5 812.2 454.7 822.3 458.5 832.5 462.0 842.8 465.0 853.2 467.6 863.8 469.7 874.4 471.3 885.1 472.2 895.9 472.5 906.6 472.1 917.3 471.1 927.9 469.3 938.3 466.9 948.5 463.8 958.6 460.0 968.3 455.7 977.8 450.8 987.1 445.5 996.1 439.7 1005.0 433.7 1013.6 427.4 1022.1 420.9 1030.5 414.3 1038.8 407.5 1047.0 400.5 1055.1 393.5 1063.1 386.4 1071.2 379.3 1079.2 372.1 1087.2 365.0 1095.3 357.8 1103.3 350.7 1111.5 343.7 1119.8 336.9 1128.2 330.2 1136.8 323.8 1145.6 317.8 1154.8 312.3 1164.2 307.7 1174.0 304.1 1183.2 305.0" fill="none" stroke="url(#bu7)" stroke-width="4.5"/>
<path d="M628.6 343.9 L637.8 349.4 646.6 355.7 655.3 361.9 664.1 368.1 672.9 374.4 681.7 380.5 690.5 386.7 699.4 392.8 708.3 398.8 717.2 404.8 726.3 410.6 735.3 416.4 744.5 422.0 753.8 427.5 763.1 432.8 772.6 437.9 782.1 442.9 791.8 447.6 801.6 452.0 811.5 456.2 821.5 460.0 831.7 463.5 842.0 466.5 852.5 469.1 863.0 471.2 873.7 472.8 884.4 473.8 895.1 474.1 905.8 473.8 916.5 472.8 927.1 471.1 937.6 468.7 947.8 465.7 957.9 462.0 967.7 457.7 977.2 453.0 986.6 447.7 995.6 442.1 1004.5 436.1 1013.2 429.9 1021.8 423.5 1030.2 416.9 1038.5 410.2 1046.8 403.3 1054.9 396.3 1063.0 389.3 1071.1 382.2 1079.1 375.0 1087.1 367.9 1095.2 360.8 1103.3 353.7 1111.4 346.7 1119.7 339.8 1128.1 333.0 1136.6 326.6 1145.4 320.5 1154.5 315.0 1163.8 310.2 1173.5 306.4 1182.6 307.0" fill="none" stroke="url(#bu8)" stroke-width="4.5"/>
<path d="M627.8 345.6 L637.0 351.0 645.8 357.3 654.5 363.5 663.3 369.8 672.0 376.0 680.8 382.2 689.7 388.3 698.5 394.4 707.5 400.4 716.4 406.4 725.5 412.2 734.6 418.0 743.7 423.6 753.0 429.0 762.3 434.4 771.8 439.5 781.4 444.4 791.0 449.1 800.8 453.5 810.8 457.7 820.8 461.5 831.0 465.0 841.3 468.0 851.7 470.6 862.3 472.7 872.9 474.3 883.6 475.3 894.4 475.7 905.1 475.4 915.8 474.5 926.4 472.8 936.9 470.5 947.2 467.6 957.2 464.0 967.1 459.8 976.7 455.1 986.0 449.9 995.1 444.4 1004.1 438.5 1012.8 432.4 1021.4 426.1 1029.9 419.5 1038.3 412.9 1046.5 406.0 1054.7 399.1 1062.9 392.1 1071.0 385.0 1079.0 377.9 1087.1 370.8 1095.1 363.7 1103.2 356.6 1111.4 349.6 1119.6 342.7 1128.0 335.9 1136.5 329.4 1145.2 323.2 1154.2 317.6 1163.5 312.7 1173.0 308.7 1182.1 308.9" fill="none" stroke="url(#bu9)" stroke-width="4.5"/>
<path d="M627.0 347.2 L636.2 352.6 645.0 358.9 653.7 365.2 662.5 371.4 671.2 377.6 680.0 383.8 688.9 390.0 697.7 396.1 706.7 402.1 715.6 408.0 724.7 413.8 733.8 419.6 742.9 425.2 752.2 430.6 761.6 435.9 771.0 441.0 780.6 446.0 790.3 450.6 800.1 455.1 810.0 459.2 820.1 463.0 830.3 466.5 840.6 469.5 851.0 472.1 861.6 474.3 872.2 475.9 882.9 476.9 893.6 477.3 904.4 477.0 915.1 476.1 925.7 474.6 936.2 472.3 946.5 469.5 956.6 466.0 966.4 461.9 976.1 457.3 985.5 452.2 994.6 446.7 1003.6 441.0 1012.4 434.9 1021.1 428.6 1029.6 422.2 1038.0 415.5 1046.3 408.8 1054.6 401.9 1062.7 394.9 1070.8 387.9 1078.9 380.8 1087.0 373.7 1095.1 366.6 1103.2 359.5 1111.3 352.5 1119.5 345.6 1127.9 338.8 1136.3 332.2 1145.0 326.0 1153.9 320.2 1163.1 315.1 1172.5 311.0 1181.6 310.8" fill="none" stroke="url(#bu10)" stroke-width="4.5"/>
<path d="M626.2 348.8 L635.4 354.2 644.2 360.5 652.9 366.8 661.7 373.0 670.4 379.3 679.2 385.5 688.1 391.6 696.9 397.7 705.8 403.7 714.8 409.6 723.9 415.5 733.0 421.2 742.2 426.8 751.4 432.2 760.8 437.5 770.3 442.6 779.9 447.5 789.5 452.2 799.4 456.6 809.3 460.7 819.4 464.5 829.5 468.0 839.9 471.0 850.3 473.6 860.8 475.8 871.5 477.4 882.2 478.4 892.9 478.9 903.6 478.7 914.3 477.8 925.0 476.3 935.4 474.2 945.8 471.3 955.9 467.9 965.8 463.9 975.5 459.4 984.9 454.4 994.1 449.1 1003.2 443.4 1012.0 437.4 1020.7 431.2 1029.3 424.8 1037.8 418.2 1046.1 411.5 1054.4 404.7 1062.6 397.8 1070.7 390.8 1078.8 383.7 1086.9 376.6 1095.0 369.6 1103.1 362.5 1111.3 355.4 1119.4 348.5 1127.7 341.6 1136.2 335.0 1144.8 328.7 1153.6 322.9 1162.7 317.6 1172.0 313.3 1181.0 312.8" fill="none" stroke="url(#bu11)" stroke-width="4.5"/>
<path d="M625.4 350.4 L634.6 355.8 643.4 362.1 652.1 368.4 660.8 374.7 669.6 380.9 678.4 387.1 687.2 393.2 696.1 399.3 705.0 405.3 714.0 411.3 723.1 417.1 732.2 422.8 741.4 428.4 750.7 433.8 760.0 439.1 769.5 444.2 779.1 449.1 788.8 453.7 798.6 458.1 808.6 462.2 818.6 466.0 828.8 469.5 839.1 472.5 849.6 475.1 860.1 477.3 870.7 478.9 881.4 480.0 892.2 480.5 902.9 480.3 913.6 479.5 924.2 478.1 934.7 476.0 945.1 473.2 955.2 469.9 965.2 466.0 974.9 461.6 984.4 456.7 993.6 451.4 1002.7 445.8 1011.6 439.9 1020.4 433.8 1029.0 427.4 1037.5 420.9 1045.9 414.3 1054.2 407.5 1062.4 400.6 1070.6 393.7 1078.8 386.6 1086.9 379.6 1095.0 372.5 1103.1 365.4 1111.2 358.4 1119.4 351.4 1127.6 344.5 1136.0 337.8 1144.6 331.5 1153.3 325.5 1162.3 320.1 1171.5 315.5 1180.5 314.7" fill="none" stroke="url(#bu12)" stroke-width="4.5"/>
<path d="M624.6 352.1 L633.9 357.4 642.6 363.7 651.3 370.0 660.0 376.3 668.8 382.5 677.6 388.7 686.4 394.9 695.3 401.0 704.2 407.0 713.2 412.9 722.3 418.7 731.4 424.4 740.6 430.0 749.9 435.4 759.3 440.6 768.8 445.7 778.3 450.6 788.0 455.2 797.9 459.6 807.8 463.7 817.9 467.5 828.1 471.0 838.4 474.0 848.8 476.6 859.4 478.8 870.0 480.4 880.7 481.5 891.4 482.0 902.2 481.9 912.9 481.2 923.5 479.8 934.0 477.8 944.4 475.1 954.6 471.9 964.5 468.1 974.3 463.7 983.8 458.9 993.1 453.7 1002.3 448.2 1011.2 442.4 1020.0 436.3 1028.7 430.1 1037.2 423.6 1045.7 417.0 1054.0 410.3 1062.3 403.5 1070.5 396.5 1078.7 389.5 1086.8 382.5 1094.9 375.4 1103.0 368.3 1111.1 361.3 1119.3 354.3 1127.5 347.4 1135.9 340.7 1144.4 334.2 1153.0 328.1 1161.9 322.6 1171.0 317.8 1180.0 316.6" fill="none" stroke="url(#bu13)" stroke-width="4.5"/>
<path d="M623.9 353.7 L633.1 359.0 641.8 365.4 650.5 371.7 659.2 377.9 668.0 384.2 676.8 390.4 685.6 396.5 694.5 402.6 703.4 408.6 712.4 414.5 721.5 420.3 730.6 426.0 739.8 431.6 749.1 437.0 758.5 442.2 768.0 447.3 777.6 452.1 787.3 456.8 797.1 461.2 807.1 465.2 817.2 469.0 827.3 472.5 837.7 475.5 848.1 478.1 858.6 480.3 869.3 482.0 880.0 483.1 890.7 483.6 901.4 483.6 912.1 482.9 922.8 481.6 933.3 479.6 943.7 477.0 953.9 473.9 963.9 470.1 973.7 465.9 983.3 461.2 992.6 456.1 1001.8 450.6 1010.8 444.9 1019.7 438.9 1028.4 432.7 1037.0 426.3 1045.5 419.8 1053.9 413.1 1062.2 406.3 1070.4 399.4 1078.6 392.4 1086.7 385.4 1094.8 378.3 1102.9 371.3 1111.1 364.2 1119.2 357.2 1127.4 350.3 1135.7 343.5 1144.2 336.9 1152.8 330.8 1161.5 325.1 1170.5 320.1 1179.5 318.6" fill="none" stroke="url(#bu14)" stroke-width="4.5"/>
<path d="M623.1 355.3 L632.3 360.6 641.0 367.0 649.7 373.3 658.4 379.6 667.2 385.8 676.0 392.0 684.8 398.2 693.7 404.2 702.6 410.2 711.6 416.1 720.7 421.9 729.8 427.6 739.0 433.2 748.3 438.6 757.7 443.8 767.2 448.8 776.8 453.7 786.6 458.3 796.4 462.7 806.3 466.8 816.4 470.5 826.6 474.0 836.9 477.0 847.4 479.6 857.9 481.8 868.5 483.5 879.2 484.6 889.9 485.2 900.7 485.2 911.4 484.6 922.1 483.3 932.6 481.4 943.0 478.9 953.2 475.8 963.3 472.2 973.1 468.0 982.7 463.4 992.1 458.4 1001.4 453.0 1010.4 447.4 1019.3 441.5 1028.1 435.3 1036.7 429.0 1045.3 422.5 1053.7 415.9 1062.0 409.1 1070.3 402.3 1078.5 395.3 1086.7 388.3 1094.8 381.3 1102.9 374.2 1111.0 367.1 1119.1 360.1 1127.3 353.1 1135.6 346.3 1143.9 339.7 1152.5 333.4 1161.2 327.6 1170.0 322.4 1178.9 320.5" fill="none" stroke="url(#bu15)" stroke-width="4.5"/>
<path d="M622.3 357.0 L631.5 362.2 640.2 368.6 648.9 374.9 657.6 381.2 666.4 387.5 675.2 393.7 684.0 399.8 692.9 405.9 701.8 411.9 710.8 417.8 719.9 423.5 729.0 429.2 738.3 434.8 747.6 440.1 757.0 445.4 766.5 450.4 776.1 455.2 785.8 459.8 795.6 464.2 805.6 468.3 815.7 472.0 825.9 475.5 836.2 478.5 846.6 481.2 857.2 483.3 867.8 485.0 878.5 486.2 889.2 486.8 900.0 486.8 910.7 486.3 921.3 485.1 931.9 483.2 942.3 480.8 952.6 477.8 962.6 474.3 972.5 470.2 982.2 465.6 991.6 460.7 1000.9 455.4 1010.0 449.9 1019.0 444.0 1027.8 438.0 1036.5 431.7 1045.0 425.3 1053.5 418.7 1061.9 412.0 1070.2 405.1 1078.4 398.2 1086.6 391.2 1094.7 384.2 1102.8 377.1 1110.9 370.1 1119.0 363.0 1127.2 356.0 1135.4 349.1 1143.7 342.4 1152.2 336.0 1160.8 330.0 1169.5 324.7 1178.4 322.4" fill="none" stroke="url(#bu16)" stroke-width="4.5"/>
<path d="M621.5 358.6 L630.7 363.8 639.4 370.2 648.1 376.5 656.8 382.8 665.6 389.1 674.3 395.3 683.2 401.4 692.1 407.5 701.0 413.5 710.0 419.4 719.1 425.2 728.2 430.8 737.5 436.4 746.8 441.7 756.2 446.9 765.7 452.0 775.3 456.8 785.1 461.4 794.9 465.7 804.9 469.8 815.0 473.5 825.2 477.0 835.5 480.0 845.9 482.7 856.4 484.8 867.1 486.6 877.7 487.8 888.5 488.4 899.2 488.5 909.9 487.9 920.6 486.8 931.2 485.1 941.6 482.7 951.9 479.8 962.0 476.3 971.9 472.3 981.6 467.9 991.1 463.0 1000.5 457.9 1009.6 452.4 1018.6 446.6 1027.5 440.6 1036.2 434.4 1044.8 428.0 1053.3 421.5 1061.7 414.8 1070.1 408.0 1078.3 401.1 1086.5 394.2 1094.7 387.1 1102.8 380.1 1110.9 373.0 1119.0 365.9 1127.1 358.9 1135.3 351.9 1143.5 345.2 1151.9 338.7 1160.4 332.5 1169.0 326.9 1177.9 324.3" fill="none" stroke="url(#bu17)" stroke-width="4.5"/>
<path d="M620.7 360.2 L629.9 365.4 638.6 371.8 647.3 378.2 656.0 384.5 664.7 390.7 673.5 396.9 682.4 403.1 691.3 409.1 700.2 415.1 709.2 421.0 718.3 426.8 727.5 432.4 736.7 437.9 746.0 443.3 755.4 448.5 765.0 453.5 774.6 458.3 784.3 462.9 794.2 467.2 804.1 471.3 814.2 475.0 824.4 478.5 834.7 481.5 845.2 484.2 855.7 486.4 866.3 488.1 877.0 489.3 887.7 490.0 898.5 490.1 909.2 489.6 919.9 488.5 930.5 486.9 940.9 484.6 951.2 481.8 961.4 478.4 971.3 474.5 981.1 470.1 990.6 465.4 1000.0 460.3 1009.2 454.9 1018.3 449.2 1027.2 443.2 1036.0 437.1 1044.6 430.8 1053.2 424.3 1061.6 417.7 1070.0 410.9 1078.2 404.0 1086.4 397.1 1094.6 390.1 1102.7 383.0 1110.8 375.9 1118.9 368.8 1127.0 361.7 1135.1 354.8 1143.3 347.9 1151.6 341.3 1160.0 335.0 1168.5 329.2 1177.3 326.3" fill="none" stroke="url(#bu18)" stroke-width="4.5"/>
<path d="M619.9 361.8 L629.1 367.0 637.8 373.4 646.5 379.8 655.2 386.1 663.9 392.4 672.7 398.6 681.6 404.7 690.4 410.8 699.4 416.8 708.4 422.6 717.5 428.4 726.7 434.0 735.9 439.5 745.2 444.9 754.7 450.1 764.2 455.1 773.8 459.9 783.6 464.5 793.4 468.8 803.4 472.8 813.5 476.6 823.7 480.0 834.0 483.0 844.4 485.7 855.0 487.9 865.6 489.6 876.3 490.9 887.0 491.6 897.7 491.7 908.5 491.3 919.2 490.3 929.8 488.7 940.2 486.5 950.6 483.8 960.7 480.5 970.7 476.6 980.5 472.4 990.1 467.7 999.6 462.7 1008.8 457.4 1017.9 451.7 1026.9 445.9 1035.7 439.8 1044.4 433.5 1053.0 427.1 1061.5 420.5 1069.9 413.8 1078.1 406.9 1086.4 400.0 1094.5 393.0 1102.7 385.9 1110.7 378.8 1118.8 371.7 1126.9 364.6 1135.0 357.6 1143.1 350.7 1151.3 343.9 1159.6 337.5 1168.0 331.5 1176.8 328.2" fill="none" stroke="url(#bu19)" stroke-width="4.5"/>
<path d="M619.1 363.5 L628.4 368.6 637.0 375.0 645.7 381.4 654.4 387.7 663.1 394.0 671.9 400.2 680.7 406.4 689.6 412.4 698.6 418.4 707.6 424.3 716.7 430.0 725.9 435.6 735.1 441.1 744.5 446.5 753.9 451.7 763.4 456.6 773.1 461.4 782.8 466.0 792.7 470.3 802.7 474.3 812.8 478.1 823.0 481.5 833.3 484.5 843.7 487.2 854.2 489.4 864.9 491.1 875.5 492.4 886.3 493.2 897.0 493.4 907.7 493.0 918.4 492.0 929.0 490.5 939.5 488.4 949.9 485.7 960.1 482.5 970.1 478.8 980.0 474.6 989.6 470.0 999.1 465.1 1008.4 459.8 1017.6 454.3 1026.6 448.5 1035.5 442.5 1044.2 436.3 1052.8 429.9 1061.3 423.3 1069.7 416.6 1078.1 409.8 1086.3 402.9 1094.5 395.9 1102.6 388.9 1110.7 381.8 1118.7 374.6 1126.8 367.5 1134.8 360.4 1142.9 353.4 1151.0 346.6 1159.3 340.0 1167.5 333.8 1176.3 330.1" fill="none" stroke="url(#bu20)" stroke-width="4.5"/>
<path d="M618.3 365.1 L627.6 370.2 636.2 376.6 644.9 383.0 653.6 389.4 662.3 395.6 671.1 401.9 679.9 408.0 688.8 414.1 697.8 420.0 706.8 425.9 715.9 431.6 725.1 437.3 734.3 442.7 743.7 448.1 753.1 453.2 762.7 458.2 772.3 463.0 782.1 467.5 791.9 471.8 801.9 475.8 812.0 479.6 822.2 483.0 832.6 486.0 843.0 488.7 853.5 490.9 864.1 492.7 874.8 494.0 885.5 494.8 896.3 495.0 907.0 494.7 917.7 493.8 928.3 492.3 938.9 490.3 949.2 487.7 959.5 484.6 969.5 481.0 979.4 476.9 989.1 472.4 998.7 467.5 1008.0 462.3 1017.2 456.9 1026.3 451.1 1035.2 445.2 1044.0 439.0 1052.6 432.7 1061.2 426.2 1069.6 419.5 1078.0 412.7 1086.2 405.8 1094.4 398.9 1102.5 391.8 1110.6 384.7 1118.6 377.5 1126.7 370.4 1134.7 363.2 1142.7 356.1 1150.8 349.2 1158.9 342.5 1167.0 336.0 1175.7 332.1" fill="none" stroke="url(#bu21)" stroke-width="4.5"/>
<path d="M617.5 366.7 L626.8 371.8 635.4 378.3 644.1 384.6 652.8 391.0 661.5 397.3 670.3 403.5 679.1 409.6 688.0 415.7 697.0 421.7 706.0 427.5 715.1 433.2 724.3 438.9 733.6 444.3 742.9 449.7 752.4 454.8 761.9 459.8 771.6 464.5 781.3 469.1 791.2 473.3 801.2 477.4 811.3 481.1 821.5 484.5 831.8 487.5 842.3 490.2 852.8 492.4 863.4 494.2 874.1 495.5 884.8 496.3 895.5 496.6 906.3 496.4 917.0 495.5 927.6 494.1 938.2 492.2 948.6 489.7 958.8 486.7 968.9 483.1 978.9 479.1 988.6 474.7 998.2 469.9 1007.6 464.8 1016.9 459.4 1026.0 453.8 1034.9 447.9 1043.8 441.8 1052.5 435.5 1061.0 429.0 1069.5 422.4 1077.9 415.6 1086.2 408.8 1094.4 401.8 1102.5 394.7 1110.6 387.6 1118.6 380.4 1126.5 373.2 1134.5 366.0 1142.5 358.9 1150.5 351.8 1158.5 344.9 1166.5 338.3 1175.2 334.0" fill="none" stroke="url(#bu22)" stroke-width="4.5"/>
<path d="M616.7 368.4 L626.0 373.4 634.6 379.9 643.3 386.3 652.0 392.6 660.7 398.9 669.5 405.1 678.3 411.3 687.2 417.3 696.2 423.3 705.2 429.1 714.3 434.9 723.5 440.5 732.8 445.9 742.1 451.2 751.6 456.4 761.2 461.3 770.8 466.1 780.6 470.6 790.5 474.9 800.4 478.9 810.6 482.6 820.8 486.0 831.1 489.0 841.5 491.7 852.0 493.9 862.7 495.7 873.3 497.1 884.0 497.9 894.8 498.3 905.5 498.0 916.3 497.3 926.9 496.0 937.5 494.1 947.9 491.7 958.2 488.7 968.4 485.3 978.3 481.4 988.1 477.0 997.8 472.3 1007.2 467.3 1016.5 462.0 1025.7 456.4 1034.7 450.6 1043.6 444.5 1052.3 438.3 1060.9 431.8 1069.4 425.3 1077.8 418.5 1086.1 411.7 1094.3 404.7 1102.4 397.7 1110.5 390.5 1118.5 383.3 1126.4 376.1 1134.4 368.8 1142.3 361.6 1150.2 354.5 1158.1 347.4 1166.0 340.6 1174.7 335.9" fill="none" stroke="url(#bu23)" stroke-width="4.5"/>
<path d="M615.9 370.0 L625.2 375.0 633.8 381.5 642.5 387.9 651.1 394.3 659.9 400.5 668.7 406.8 677.5 412.9 686.4 419.0 695.4 424.9 704.4 430.8 713.5 436.5 722.7 442.1 732.0 447.5 741.4 452.8 750.8 458.0 760.4 462.9 770.1 467.6 779.8 472.1 789.7 476.4 799.7 480.4 809.8 484.1 820.0 487.5 830.4 490.5 840.8 493.2 851.3 495.4 861.9 497.3 872.6 498.6 883.3 499.5 894.1 499.9 904.8 499.7 915.5 499.0 926.2 497.8 936.8 496.0 947.2 493.6 957.6 490.8 967.8 487.4 977.8 483.6 987.6 479.4 997.3 474.8 1006.8 469.8 1016.2 464.6 1025.4 459.0 1034.4 453.3 1043.3 447.3 1052.1 441.1 1060.8 434.7 1069.3 428.1 1077.7 421.4 1086.0 414.6 1094.2 407.6 1102.4 400.6 1110.4 393.5 1118.4 386.2 1126.3 379.0 1134.2 371.7 1142.1 364.4 1149.9 357.1 1157.7 349.9 1165.5 342.9 1174.1 337.9" fill="none" stroke="url(#bu24)" stroke-width="4.5"/>
<path d="M615.1 371.6 L624.4 376.6 633.0 383.1 641.7 389.5 650.3 395.9 659.1 402.2 667.8 408.4 676.7 414.5 685.6 420.6 694.6 426.5 703.6 432.4 712.7 438.1 721.9 443.7 731.2 449.1 740.6 454.4 750.1 459.5 759.6 464.4 769.3 469.2 779.1 473.7 789.0 477.9 799.0 481.9 809.1 485.6 819.3 489.0 829.6 492.0 840.1 494.7 850.6 496.9 861.2 498.8 871.9 500.2 882.6 501.1 893.3 501.5 904.1 501.4 914.8 500.8 925.5 499.6 936.1 497.9 946.6 495.6 957.0 492.8 967.2 489.6 977.2 485.8 987.1 481.7 996.9 477.2 1006.4 472.3 1015.8 467.1 1025.1 461.7 1034.2 456.0 1043.1 450.0 1051.9 443.9 1060.6 437.5 1069.2 431.0 1077.6 424.3 1086.0 417.5 1094.2 410.6 1102.3 403.5 1110.4 396.4 1118.3 389.1 1126.2 381.8 1134.1 374.5 1141.9 367.1 1149.6 359.7 1157.3 352.4 1165.0 345.2 1173.6 339.8" fill="none" stroke="url(#bu25)" stroke-width="4.5"/>
<path d="M614.3 373.2 L623.6 378.2 632.2 384.7 640.9 391.1 649.5 397.5 658.3 403.8 667.0 410.0 675.9 416.2 684.8 422.2 693.8 428.2 702.8 434.0 711.9 439.7 721.1 445.3 730.4 450.7 739.8 456.0 749.3 461.1 758.9 466.0 768.6 470.7 778.3 475.2 788.2 479.4 798.2 483.4 808.4 487.1 818.6 490.5 828.9 493.5 839.3 496.2 849.8 498.5 860.4 500.3 871.1 501.7 881.8 502.7 892.6 503.1 903.3 503.1 914.1 502.5 924.8 501.4 935.4 499.8 945.9 497.6 956.3 494.9 966.6 491.7 976.7 488.1 986.6 484.0 996.4 479.6 1006.0 474.8 1015.5 469.7 1024.8 464.3 1033.9 458.7 1042.9 452.8 1051.8 446.7 1060.5 440.4 1069.1 433.9 1077.5 427.2 1085.9 420.4 1094.1 413.5 1102.3 406.5 1110.3 399.3 1118.2 392.0 1126.1 384.7 1133.9 377.3 1141.6 369.8 1149.3 362.4 1157.0 354.9 1164.5 347.4 1173.1 341.7" fill="none" stroke="url(#bu26)" stroke-width="4.5"/>
<path d="M613.5 374.9 L622.8 379.8 631.4 386.3 640.0 392.8 648.7 399.1 657.4 405.5 666.2 411.7 675.1 417.8 684.0 423.9 693.0 429.8 702.0 435.6 711.1 441.3 720.3 446.9 729.6 452.3 739.0 457.6 748.5 462.7 758.1 467.6 767.8 472.3 777.6 476.7 787.5 481.0 797.5 484.9 807.6 488.6 817.8 492.0 828.2 495.0 838.6 497.7 849.1 500.0 859.7 501.8 870.4 503.3 881.1 504.3 891.8 504.8 902.6 504.8 913.4 504.3 924.1 503.2 934.7 501.7 945.3 499.6 955.7 497.0 966.0 493.9 976.1 490.3 986.1 486.4 996.0 482.0 1005.6 477.3 1015.1 472.3 1024.5 466.9 1033.7 461.4 1042.7 455.5 1051.6 449.5 1060.4 443.2 1069.0 436.8 1077.5 430.1 1085.8 423.4 1094.1 416.4 1102.2 409.4 1110.2 402.2 1118.2 394.9 1126.0 387.6 1133.8 380.1 1141.4 372.6 1149.0 365.0 1156.6 357.4 1164.1 349.7 1172.5 343.7" fill="none" stroke="url(#bu27)" stroke-width="4.5"/>
<path d="M612.7 376.5 L622.1 381.4 630.6 387.9 639.2 394.4 647.9 400.8 656.6 407.1 665.4 413.3 674.3 419.5 683.2 425.5 692.1 431.4 701.2 437.3 710.3 443.0 719.6 448.5 728.9 453.9 738.3 459.2 747.8 464.2 757.4 469.1 767.0 473.8 776.8 478.3 786.8 482.5 796.8 486.4 806.9 490.1 817.1 493.5 827.4 496.5 837.9 499.2 848.4 501.5 859.0 503.4 869.6 504.8 880.4 505.9 891.1 506.4 901.9 506.5 912.6 506.0 923.4 505.1 934.0 503.6 944.6 501.6 955.1 499.0 965.4 496.0 975.6 492.6 985.6 488.7 995.5 484.4 1005.2 479.8 1014.8 474.8 1024.2 469.6 1033.4 464.0 1042.5 458.3 1051.4 452.3 1060.2 446.0 1068.9 439.6 1077.4 433.0 1085.7 426.3 1094.0 419.4 1102.1 412.3 1110.2 405.1 1118.1 397.8 1125.9 390.4 1133.6 382.9 1141.2 375.3 1148.8 367.6 1156.2 359.9 1163.6 352.0 1172.0 345.6" fill="none" stroke="url(#bu28)" stroke-width="4.5"/>
</g>
<defs><linearGradient id="hlg" gradientUnits="userSpaceOnUse" x1="740" y1="0" x2="1175" y2="0"><stop offset="0" stop-color="#a8c0f0"/><stop offset="0.6" stop-color="#8ab0ff"/><stop offset="0.8" stop-color="#c8d8ff"/><stop offset="1" stop-color="#ffd8c0"/></linearGradient><linearGradient id="tlg" gradientUnits="userSpaceOnUse" x1="579" y1="0" x2="745" y2="0"><stop offset="0" stop-color="#e89878"/><stop offset="0.5" stop-color="#d8a890"/><stop offset="1" stop-color="#b0c4f0"/></linearGradient><linearGradient id="blg" gradientUnits="userSpaceOnUse" x1="612" y1="0" x2="900" y2="0"><stop offset="0" stop-color="#34343c"/><stop offset="0.3" stop-color="#40383a"/><stop offset="0.55" stop-color="#c05a3a"/><stop offset="1" stop-color="#b01818"/></linearGradient></defs>
<path d="M740.0 402.8 L744.4 404.3 748.8 407.5 753.1 410.7 757.5 413.7 761.9 416.7 766.3 419.6 770.6 422.4 775.0 425.2 779.4 427.8 783.8 430.3 788.1 432.8 792.5 435.2 796.9 437.4 801.3 439.6 805.6 441.7 810.0 443.7 814.4 445.6 818.8 447.4 823.1 449.1 827.5 450.8 831.9 452.3 836.3 453.7 840.6 455.0 845.0 456.2 849.4 457.4 853.8 458.4 858.1 459.3 862.5 460.1 866.9 460.8 871.3 461.4 875.6 461.9 880.0 462.3 884.4 462.6 888.8 462.7 893.2 462.8 897.5 462.8 901.9 462.6 906.3 462.3 910.7 462.0 915.0 461.5 919.4 460.9 923.8 460.1 928.2 459.3 932.5 458.4 936.9 457.3 941.3 456.1 945.7 454.8 950.0 453.4 954.4 451.8 958.8 450.1 963.2 448.3 967.5 446.4 971.9 444.4 976.3 442.2 980.7 439.9 985.0 437.5 989.4 435.0 993.8 432.4 998.2 429.7 1002.5 426.8 1006.9 423.9 1011.3 420.9 1015.7 417.8 1020.0 414.6 1024.4 411.3 1028.8 408.0 1033.2 404.6 1037.6 401.1 1041.9 397.6 1046.3 394.1 1050.7 390.4 1055.1 386.8 1059.4 383.1 1063.8 379.3 1068.2 375.5 1072.6 371.7 1076.9 367.9 1081.3 364.1 1085.7 360.2 1090.1 356.4 1094.4 352.5 1098.8 348.6 1103.2 344.8 1107.6 340.9 1111.9 337.1 1116.3 333.3 1120.7 329.5 1125.1 325.8 1129.4 322.0 1133.8 318.3 1138.2 314.7 1142.6 311.1 1146.9 307.6 1151.3 304.1 1155.7 300.7 1160.1 297.3 1164.4 294.0 1168.8 290.8 1173.2 290.0" fill="none" stroke="url(#hlg)" stroke-width="1.1"/>
<path d="M579.4 309.4 L635.0 330.9 639.6 333.6 644.3 336.8 648.9 340.0 653.6 343.2 658.2 346.4 662.8 349.7 667.5 352.9 672.1 356.2 676.7 359.4 681.4 362.7 686.0 365.9 690.7 369.2 695.3 372.4 699.9 375.6 704.6 378.8 709.2 382.0 713.8 385.2 718.5 388.3 723.1 391.4 727.8 394.5 732.4 397.5 737.0 400.5 741.7 403.5" fill="none" stroke="url(#tlg)" stroke-width="1"/>
<path d="M612.7 376.5 L617.4 377.8 622.1 381.4 626.8 385.0 631.5 388.6 636.2 392.1 640.9 395.6 645.6 399.1 650.3 402.5 655.0 405.9 659.7 409.3 664.4 412.6 669.1 415.9 673.8 419.2 678.5 422.4 683.2 425.5 687.9 428.7 692.6 431.7 697.3 434.8 702.0 437.8 706.7 440.7 711.4 443.6 716.1 446.5 720.8 449.2 725.5 452.0 730.2 454.7 734.9 457.3 739.6 459.9 744.3 462.4 749.0 464.9 753.7 467.3 758.4 469.7 763.1 471.9 767.8 474.2 772.5 476.3 777.2 478.4 781.9 480.5 786.6 482.4 791.3 484.3 796.0 486.1 800.7 487.9 805.4 489.6 810.1 491.2 814.8 492.7 819.5 494.2 824.2 495.6 828.9 496.9 833.6 498.1 838.3 499.3 843.0 500.4 847.7 501.4 852.4 502.3 857.1 503.1 861.8 503.8 866.5 504.5 871.2 505.0 875.9 505.5" fill="none" stroke="url(#blg)" stroke-width="1" opacity="0.8"/>
<clipPath id="llcap"><path d="M579.4 309.4 L635 330.9 L612.7 376.5 L609 374 L565.8 360.5 L555.9 354.3 Z"/></clipPath>
<g clip-path="url(#llcap)"><path d="M579.4 309.4 L635 330.9 L612.7 376.5 L609 374 L565.8 360.5 L555.9 354.3 Z" fill="#928a86"/><ellipse cx="618" cy="322" rx="28" ry="18" fill="#b07658" opacity="0.85" filter="url(#bl8)"/><ellipse cx="592" cy="368" rx="34" ry="12" fill="#8a9098" opacity="0.9" filter="url(#bl4)"/><path d="M579.4 309.4 L586 312 L571 350 L560 357 L555.9 354.3 Z" fill="#a49c94" opacity="0.6"/><path d="M627.5 327.5 L635 330.9 L612.7 376.5 L606.5 374.5 Z" fill="#a89486" opacity="0.9"/><path d="M565.8 360.5 L609 374" stroke="#c8b8a8" stroke-width="1.3"/></g>
<path d="M1148.2 313.4 L1154.5 309.8 L1172.2 342.7 L1161.8 342.7 Z" fill="#544c48"/>
<path d="M1154.5 309.8 L1180.6 295.7 L1193.1 327 L1171.2 338.5 Z" fill="url(#capg)"/>
<path d="M1180.6 295.7 L1186.9 291.5 L1203.6 328 L1194.2 327 Z" fill="#57514d"/>
<path d="M1170 338.5 L1193 327 L1203.6 328 L1195.2 334.3 L1172.2 343.7 Z" fill="#c4bcaa"/>
</svg>
</div>
<!-- status bar -->
<div class="a" style="left:947px;top:1027px;width:949px;height:25px;border:1px solid #77746c;border-radius:2px"></div>
<div class="btn" style="left:949px;top:1029px;width:22px;height:21px;border-color:#6d6a63;border-width:1.5px;border-radius:4px"></div>
<div class="a" style="left:970px;top:1028px;width:920px;height:23px;border:2px solid #6d6a63;border-radius:3px;background:#d6d2cc"></div>
<svg style="left:0;top:0" width="1919" height="1053">
 <path d="M956 1035 L963 1042 M963 1035 L956 1042" stroke="#b8b4ad" stroke-width="2.6"/>
 <path d="M1907 1053 L1919 1041 M1911 1053 L1919 1045 M1915 1053 L1919 1049" stroke="#333" stroke-width="1.2"/>
 <path d="M1908 1053 L1919 1042 M1912 1053 L1919 1046" stroke="#fff" stroke-width="0.8"/>
</svg>
</body></html>
